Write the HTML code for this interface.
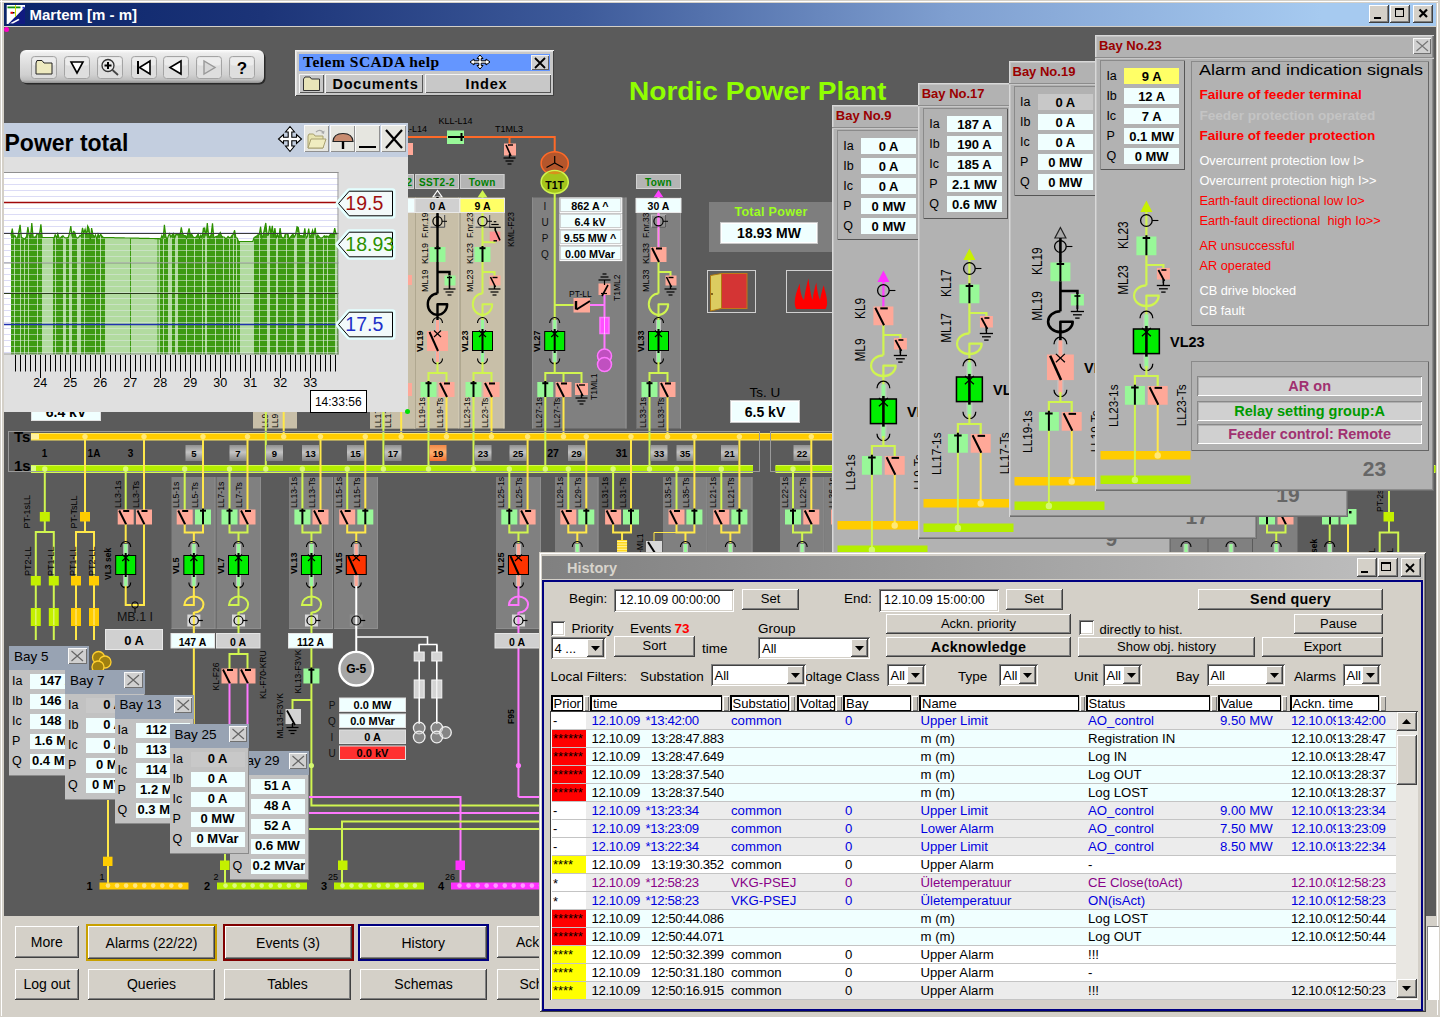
<!DOCTYPE html><html><head><meta charset="utf-8"><title>Martem [m - m]</title><style>
html,body{margin:0;padding:0;background:#d4d0c8;}
#root{position:relative;width:1440px;height:1018px;overflow:hidden;background:#d4d0c8;font-family:"Liberation Sans",sans-serif;}
#root div,#root svg{position:absolute;}
.t{white-space:nowrap;}

</style></head><body><div id="root">
<div style="left:0px;top:1px;width:1438px;height:1px;background:#fff;"></div><div style="left:1px;top:0px;width:1px;height:1016px;background:#fff;"></div><div style="left:4px;top:3px;width:1432px;height:23px;background:linear-gradient(90deg,#0a246a 0%,#1c3478 18%,#3d5a9a 40%,#7f9fd0 66%,#a6caf0 92%);"></div><svg class="abs" style="left:6px;top:4px" width="20" height="21" viewBox="0 0 20 21"><rect x="0.7" y="1" width="18.3" height="19" fill="#fff"/><path d="M19,2.700 L19,20 L2.300,20 Z" fill="#101a80"/><path d="M4,19.300 L12.500,14.800 L13.500,16 L7,19.500 Z" fill="#fff"/><path d="M9,12.500 L17.500,3.800" stroke="#fff" stroke-width="1"/><rect x="1.500" y="2.500" width="13" height="1.800" fill="#109010"/><rect x="9" y="1" width="1" height="12" fill="#c8e000"/><rect x="16.500" y="2.800" width="1.800" height="1.800" fill="#2030d0"/><rect x="4.500" y="7.800" width="2.500" height="2" fill="#e00000"/><rect x="7" y="8" width="1.500" height="1.500" fill="#000"/></svg><div class="t" style="left:29.5px;top:6px;font-size:15px;color:#fff;line-height:15px;font-weight:bold;line-height:18px;">Martem [m - m]</div><div style="left:1369px;top:5px;width:20px;height:18px;background:#d4d0c8;box-shadow:inset -1px -1px 0 #404040,inset 1px 1px 0 #fff,inset -2px -2px 0 #808080;"></div><div style="left:1390px;top:5px;width:20px;height:18px;background:#d4d0c8;box-shadow:inset -1px -1px 0 #404040,inset 1px 1px 0 #fff,inset -2px -2px 0 #808080;"></div><div style="left:1413px;top:5px;width:20px;height:18px;background:#d4d0c8;box-shadow:inset -1px -1px 0 #404040,inset 1px 1px 0 #fff,inset -2px -2px 0 #808080;"></div><div style="left:1374px;top:17px;width:7px;height:2px;background:#000;"></div><div style="left:1395px;top:8px;width:9px;height:9px;border:1px solid #000;border-top:2px solid #000;box-sizing:border-box;"></div><svg class="abs" style="left:1418px;top:8px" width="11" height="11" viewBox="0 0 11 11"><path d="M1.5,1.5 L9,9 M9,1.5 L1.5,9" stroke="#000" stroke-width="2.2"/></svg><div style="left:4px;top:27px;width:1431.5px;height:889px;background:#5b5b5b;"></div><div style="left:1436.5px;top:3px;width:1px;height:1012px;background:#fff;"></div><div style="left:0px;top:1016.5px;width:1440px;height:1.5px;background:#fff;"></div><div style="left:4px;top:27px;width:5px;height:5px;background:#ff00c8;border-radius:50%;"></div>
<svg class="abs" style="left:0;top:0" width="1440" height="1018" viewBox="0 0 1440 1018" font-family="Liberation Sans, sans-serif"><defs><linearGradient id="gb" x1="0" y1="0" x2="0" y2="1"><stop offset="0" stop-color="#909090"/><stop offset="0.45" stop-color="#c4c4c4"/><stop offset="1" stop-color="#848484"/></linearGradient><linearGradient id="gbo" x1="0" y1="0" x2="0" y2="1"><stop offset="0" stop-color="#f08848"/><stop offset="0.45" stop-color="#ffb070"/><stop offset="1" stop-color="#f07030"/></linearGradient></defs><rect x="31" y="433" width="1400" height="7.5" fill="#ffe860" /><rect x="31" y="434" width="1400" height="5.3" fill="#ffcc00" /><rect x="31" y="434" width="8" height="5.3" fill="#fff0a0" /><rect x="31" y="465" width="722" height="8" fill="#d4fa50" /><rect x="31" y="466" width="722" height="5.8" fill="#b4ee00" /><rect x="775.5" y="465" width="660" height="8" fill="#d4fa50" /><rect x="775.5" y="466" width="660" height="5.8" fill="#b4ee00" /><rect x="31" y="466" width="5" height="5.8" fill="#dcff88" /><path d="M405,137 L554.7,137 L554.7,153" stroke="#ff6a28" stroke-width="2" fill="none" /><text x="404" y="132" font-size="9" fill="#000" text-anchor="start" >L-L14</text><rect x="407" y="143" width="6" height="12" fill="#ffa898" /><text x="438.5" y="124" font-size="9" fill="#000" text-anchor="start" >KLL-L14</text><rect x="447" y="130.5" width="17" height="13.5" fill="#98f898" /><path d="M448,137 L464,137" stroke="#000000" stroke-width="2" fill="none" /><path d="M461.5,133 L461.5,141" stroke="#000000" stroke-width="2" fill="none" /><text x="495" y="132" font-size="9" fill="#000" text-anchor="start" >T1ML3</text><path d="M509.5,137 L509.5,144" stroke="#ff6a28" stroke-width="2" fill="none" /><rect x="504" y="143.5" width="12" height="12" fill="#ffa898" /><path d="M506,145 L511,156" stroke="#000000" stroke-width="1.6" fill="none" /><path d="M508,145 L513,145" stroke="#000000" stroke-width="1.4" fill="none" /><path d="M509.5,154 L509.5,158" stroke="#000000" stroke-width="1.4" fill="none" /><path d="M503.5,158 L515.5,158" stroke="#000000" stroke-width="1.2" fill="none" /><path d="M505.5,161.0 L513.5,161.0" stroke="#000000" stroke-width="1.2" fill="none" /><path d="M507.5,164.0 L511.5,164.0" stroke="#000000" stroke-width="1.2" fill="none" /><rect x="325" y="174" width="44" height="15" fill="#b4b4b4" /><rect x="325.5" y="174.5" width="43" height="14" fill="none" stroke="#d0d0d0" stroke-width="1" /><rect x="370" y="174" width="44" height="15" fill="#b4b4b4" /><rect x="370.5" y="174.5" width="43" height="14" fill="none" stroke="#d0d0d0" stroke-width="1" /><text x="412" y="186" font-size="10.5" fill="#008000" font-weight="bold" text-anchor="end" >2</text><rect x="415" y="174" width="44" height="15" fill="#b4b4b4" /><rect x="415.5" y="174.5" width="43" height="14" fill="none" stroke="#d0d0d0" stroke-width="1" /><text x="437.0" y="185.5" font-size="10" fill="#008000" font-weight="bold" text-anchor="middle" letter-spacing="0.35">SST2-2</text><rect x="460" y="174" width="44.5" height="15" fill="#b4b4b4" /><rect x="460.5" y="174.5" width="43.5" height="14" fill="none" stroke="#d0d0d0" stroke-width="1" /><text x="482.25" y="185.5" font-size="10" fill="#008000" font-weight="bold" text-anchor="middle" letter-spacing="0.35">Town</text><rect x="636" y="174" width="45" height="15" fill="#b4b4b4" /><rect x="636.5" y="174.5" width="44" height="14" fill="none" stroke="#d0d0d0" stroke-width="1" /><text x="658.5" y="185.5" font-size="10" fill="#008000" font-weight="bold" text-anchor="middle" letter-spacing="0.35">Town</text><path d="M437.5,190.5 L433,197 L442,197 Z" fill="none" stroke="#fff" stroke-width="1.2"/><path d="M482.5,190 L477.5,197.5 L487.5,197.5 Z" fill="#d0f550"/><path d="M658.5,190 L653.5,197.5 L663.5,197.5 Z" fill="#ff40ff"/><rect x="370" y="197.5" width="45" height="231" fill="#c8bfa8" /><rect x="407" y="275" width="5" height="10" fill="#ffa898" /><rect x="407" y="383" width="5" height="13" fill="#ffa898" /><rect x="415" y="197.5" width="44.5" height="231" fill="#c8bfa8" /><path d="M459.0,197.5 L459.0,428.5" stroke="#d8d0bc" stroke-width="1" fill="none" /><path d="M415.5,197.5 L415.5,428.5" stroke="#b0a890" stroke-width="1" fill="none" /><path d="M428.5,396 L428.5,469" stroke="#d0f550" stroke-width="2" fill="none" /><path d="M446.5,396 L446.5,436" stroke="#ffe84a" stroke-width="2" fill="none" /><path d="M437.5,197 L437.5,293.5" stroke="#000000" stroke-width="2.4" fill="none" /><path d="M437.5,314 L437.5,320" stroke="#000000" stroke-width="2.4" fill="none" /><rect x="430.5" y="215" width="14.2" height="12.2" fill="#ffffff" fill-opacity="0.12" stroke="#c8c8c8" stroke-width="1" /><path d="M444.7,215 L444.7,227.2 L430.5,227.2" stroke="#444" stroke-width="1" fill="none" /><path d="M437.5,214 L437.5,228" stroke="#000000" stroke-width="2.4" fill="none" /><circle cx="437.5" cy="221.3" r="4.6" fill="none" stroke="#000000" stroke-width="1.2"/><path d="M442.1,221.3 L447.0,221.3" stroke="#000000" stroke-width="1" fill="none" /><rect x="429.5" y="247" width="16.0" height="15.0" fill="#98f898" /><path d="M437.5,246.0 L437.5,262.0" stroke="#000000" stroke-width="2" fill="none" /><path d="M434.5,248.2 L440.5,248.2" stroke="#000000" stroke-width="2" fill="none" /><path d="M437.5,272 L449.5,272 L449.5,276" stroke="#000000" stroke-width="2.4" fill="none" /><rect x="444.5" y="275.5" width="11" height="10" fill="#98f898" /><path d="M449.5,276 L449.5,289" stroke="#000000" stroke-width="1.6" fill="none" /><path d="M447.0,277.5 L452.0,277.5" stroke="#000000" stroke-width="1.4" fill="none" /><path d="M443.5,289 L455.5,289" stroke="#000000" stroke-width="1.2" fill="none" /><path d="M445.5,292.0 L453.5,292.0" stroke="#000000" stroke-width="1.2" fill="none" /><path d="M447.5,295.0 L451.5,295.0" stroke="#000000" stroke-width="1.2" fill="none" /><path d="M437.5,293.5 A9.7,10.7 0 1 0 447.2,304.2 L437.5,304.2 L437.5,315.9" stroke="#000000" stroke-width="2.4" fill="none" stroke-linejoin="round"/><rect x="435.0" y="320.0" width="5.0" height="11.0" fill="#c0c0c0" /><rect x="436.0" y="320.0" width="3.0" height="11.0" fill="#ffa898" /><path d="M432.5,323.0 A5.0,5.5 0 0 1 442.5,323.0" stroke="#000000" stroke-width="1.1" fill="none"/><rect x="435.0" y="351.0" width="5.0" height="11.0" fill="#c0c0c0" /><rect x="436.0" y="351.0" width="3.0" height="11.0" fill="#ffa898" /><path d="M432.5,358.5 A5.0,5.5 0 0 0 442.5,358.5" stroke="#000000" stroke-width="1.1" fill="none"/><rect x="427.0" y="331" width="21.0" height="20.0" fill="#ffa898" /><path d="M429.5,332.0 L438.0,351.0" stroke="#000000" stroke-width="2.0" fill="none" /><path d="M434.0,330.5 L441.0,337.0" stroke="#000000" stroke-width="1.1" fill="none" /><path d="M441.0,330.5 L434.0,337.0" stroke="#000000" stroke-width="1.1" fill="none" /><path d="M437.5,362 L437.5,373 L428.5,373 L428.5,382" stroke="#d0f550" stroke-width="2" fill="none" /><path d="M437.5,373 L446.5,373 L446.5,382" stroke="#d0f550" stroke-width="2" fill="none" /><rect x="420.5" y="382" width="16.0" height="15.0" fill="#98f898" /><path d="M428.5,381.0 L428.5,397.0" stroke="#000000" stroke-width="2" fill="none" /><path d="M425.5,383.2 L431.5,383.2" stroke="#000000" stroke-width="2" fill="none" /><rect x="438.5" y="382" width="16.0" height="15.0" fill="#ffa898" /><path d="M440.0,383.0 L447.0,397.0" stroke="#000000" stroke-width="2" fill="none" /><path d="M444.0,383.5 L450.0,383.5" stroke="#000000" stroke-width="2" fill="none" /><text x="424.5" y="428" font-size="8.5" fill="#000" text-anchor="start" transform="rotate(-90 424.5 428)" >LL19-1s</text><text x="442.5" y="428" font-size="8.5" fill="#000" text-anchor="start" transform="rotate(-90 442.5 428)" >LL19-Ts</text><text x="422.5" y="352" font-size="9" fill="#000" font-weight="bold" text-anchor="start" transform="rotate(-90 422.5 352)" >VL19</text><text x="427.5" y="292" font-size="9" fill="#000" text-anchor="start" transform="rotate(-90 427.5 292)" >ML19</text><text x="427.5" y="264" font-size="9" fill="#000" text-anchor="start" transform="rotate(-90 427.5 264)" >KL19</text><text x="427.5" y="238" font-size="8.5" fill="#000" text-anchor="start" transform="rotate(-90 427.5 238)" >F.nr.19</text><rect x="460" y="197.5" width="44.5" height="231" fill="#c8bfa8" /><path d="M504.0,197.5 L504.0,428.5" stroke="#d8d0bc" stroke-width="1" fill="none" /><path d="M460.5,197.5 L460.5,428.5" stroke="#b0a890" stroke-width="1" fill="none" /><path d="M473.5,396 L473.5,469" stroke="#d0f550" stroke-width="2" fill="none" /><path d="M491.5,396 L491.5,436" stroke="#ffe84a" stroke-width="2" fill="none" /><path d="M482.5,197 L482.5,293.5" stroke="#d0f550" stroke-width="2" fill="none" /><path d="M482.5,314 L482.5,320" stroke="#d0f550" stroke-width="2" fill="none" /><rect x="475.5" y="215" width="14.2" height="12.2" fill="#ffffff" fill-opacity="0.12" stroke="#c8c8c8" stroke-width="1" /><path d="M489.7,215 L489.7,227.2 L475.5,227.2" stroke="#444" stroke-width="1" fill="none" /><path d="M482.5,214 L482.5,228" stroke="#d0f550" stroke-width="2" fill="none" /><circle cx="482.5" cy="221.3" r="4.6" fill="none" stroke="#000000" stroke-width="1.2"/><path d="M487.1,221.3 L492.0,221.3" stroke="#000000" stroke-width="1" fill="none" /><rect x="474.5" y="247" width="16.0" height="15.0" fill="#98f898" /><path d="M482.5,246.0 L482.5,262.0" stroke="#000000" stroke-width="2" fill="none" /><path d="M479.5,248.2 L485.5,248.2" stroke="#000000" stroke-width="2" fill="none" /><path d="M482.5,272 L494.5,272 L494.5,276" stroke="#d0f550" stroke-width="2" fill="none" /><rect x="489.5" y="275.5" width="11" height="10" fill="#ffa898" /><path d="M490.5,277 L495.5,287" stroke="#000000" stroke-width="1.6" fill="none" /><path d="M492.5,277.5 L497.5,277.5" stroke="#000000" stroke-width="1.4" fill="none" /><path d="M494.5,285 L494.5,289" stroke="#000000" stroke-width="1.4" fill="none" /><path d="M488.5,289 L500.5,289" stroke="#000000" stroke-width="1.2" fill="none" /><path d="M490.5,292.0 L498.5,292.0" stroke="#000000" stroke-width="1.2" fill="none" /><path d="M492.5,295.0 L496.5,295.0" stroke="#000000" stroke-width="1.2" fill="none" /><path d="M482.5,293.5 A9.7,10.7 0 1 0 492.2,304.2 L482.5,304.2 L482.5,315.9" stroke="#d0f550" stroke-width="2" fill="none" stroke-linejoin="round"/><rect x="480.0" y="320.0" width="5.0" height="11.0" fill="#c0c0c0" /><rect x="481.0" y="320.0" width="3.0" height="11.0" fill="#98f898" /><path d="M477.5,323.0 A5.0,5.5 0 0 1 487.5,323.0" stroke="#000000" stroke-width="1.1" fill="none"/><rect x="480.0" y="351.0" width="5.0" height="11.0" fill="#c0c0c0" /><rect x="481.0" y="351.0" width="3.0" height="11.0" fill="#98f898" /><path d="M477.5,358.5 A5.0,5.5 0 0 0 487.5,358.5" stroke="#000000" stroke-width="1.1" fill="none"/><rect x="472.5" y="331.5" width="20.0" height="19.0" fill="#00ee00" stroke="#000000" stroke-width="1" /><path d="M482.5,329.0 L482.5,353.0" stroke="#000000" stroke-width="2.0" fill="none" /><path d="M479.0,330.5 L486.0,337.0" stroke="#000000" stroke-width="1.1" fill="none" /><path d="M486.0,330.5 L479.0,337.0" stroke="#000000" stroke-width="1.1" fill="none" /><path d="M482.5,362 L482.5,373 L473.5,373 L473.5,382" stroke="#d0f550" stroke-width="2" fill="none" /><path d="M482.5,373 L491.5,373 L491.5,382" stroke="#d0f550" stroke-width="2" fill="none" /><rect x="465.5" y="382" width="16.0" height="15.0" fill="#98f898" /><path d="M473.5,381.0 L473.5,397.0" stroke="#000000" stroke-width="2" fill="none" /><path d="M470.5,383.2 L476.5,383.2" stroke="#000000" stroke-width="2" fill="none" /><rect x="483.5" y="382" width="16.0" height="15.0" fill="#ffa898" /><path d="M485.0,383.0 L492.0,397.0" stroke="#000000" stroke-width="2" fill="none" /><path d="M489.0,383.5 L495.0,383.5" stroke="#000000" stroke-width="2" fill="none" /><text x="469.5" y="428" font-size="8.5" fill="#000" text-anchor="start" transform="rotate(-90 469.5 428)" >LL23-1s</text><text x="487.5" y="428" font-size="8.5" fill="#000" text-anchor="start" transform="rotate(-90 487.5 428)" >LL23-Ts</text><text x="467.5" y="352" font-size="9" fill="#000" font-weight="bold" text-anchor="start" transform="rotate(-90 467.5 352)" >VL23</text><text x="472.5" y="292" font-size="9" fill="#000" text-anchor="start" transform="rotate(-90 472.5 292)" >ML23</text><text x="472.5" y="264" font-size="9" fill="#000" text-anchor="start" transform="rotate(-90 472.5 264)" >KL23</text><text x="472.5" y="238" font-size="8.5" fill="#000" text-anchor="start" transform="rotate(-90 472.5 238)" >F.nr.23</text><rect x="370" y="198.5" width="44.5" height="14" fill="#f0ffff" stroke="#e8e8e8" stroke-width="1" /><rect x="415" y="198.5" width="44.5" height="14" fill="#d0d0d0" stroke="#e8e8e8" stroke-width="1" /><text x="437.5" y="210" font-size="10.5" fill="#000" font-weight="bold" text-anchor="middle" >0 A</text><rect x="460" y="198.5" width="44.5" height="14" fill="#ffff66" stroke="#e8e8e8" stroke-width="1" /><text x="482.5" y="210" font-size="10.5" fill="#000" font-weight="bold" text-anchor="middle" >9 A</text><text x="513.5" y="247" font-size="8.5" fill="#000" text-anchor="start" transform="rotate(-90 513.5 247)" >KML-F23</text><path d="M482.5,242.2 L495.5,242.2" stroke="#d0f550" stroke-width="2" fill="none" /><rect x="489.7" y="231.6" width="10.6" height="9.6" fill="#ff9090" /><path d="M495.2,227.5 L495.2,230 L500,240.3" stroke="#000000" stroke-width="1.6" fill="none" /><path d="M493.5,240.8 L497,240.8" stroke="#000000" stroke-width="1.4" fill="none" /><path d="M489.3,227.3 L500.7,227.3" stroke="#000000" stroke-width="1.2" fill="none" /><path d="M491.3,224.5 L498.7,224.5" stroke="#000000" stroke-width="1.2" fill="none" /><path d="M493.7,221.7 L496.3,221.7" stroke="#000000" stroke-width="1.2" fill="none" /><rect x="532" y="197.5" width="94.5" height="231" fill="#808080" /><path d="M626,197.5 L626,428.5" stroke="#949494" stroke-width="1" fill="none" /><path d="M532.5,197.5 L532.5,428.5" stroke="#8c8c8c" stroke-width="1" fill="none" /><path d="M554.7,193 L554.7,320" stroke="#d0f550" stroke-width="2" fill="none" /><path d="M545.3,396 L545.3,469" stroke="#d0f550" stroke-width="2" fill="none" /><path d="M563.5,396 L563.5,436" stroke="#ffe84a" stroke-width="2" fill="none" /><rect x="552.2" y="320.0" width="5.0" height="11.0" fill="#c0c0c0" /><rect x="553.2" y="320.0" width="3.0" height="11.0" fill="#98f898" /><path d="M549.7,323.0 A5.0,5.5 0 0 1 559.7,323.0" stroke="#000000" stroke-width="1.1" fill="none"/><rect x="552.2" y="351.0" width="5.0" height="11.0" fill="#c0c0c0" /><rect x="553.2" y="351.0" width="3.0" height="11.0" fill="#98f898" /><path d="M549.7,358.5 A5.0,5.5 0 0 0 559.7,358.5" stroke="#000000" stroke-width="1.1" fill="none"/><rect x="544.7" y="331.5" width="20.0" height="19.0" fill="#00ee00" stroke="#000000" stroke-width="1" /><path d="M554.7,329.0 L554.7,353.0" stroke="#000000" stroke-width="2.0" fill="none" /><path d="M551.2,330.5 L558.2,337.0" stroke="#000000" stroke-width="1.1" fill="none" /><path d="M558.2,330.5 L551.2,337.0" stroke="#000000" stroke-width="1.1" fill="none" /><path d="M554.7,362 L554.7,373 L545.3,373 L545.3,382" stroke="#d0f550" stroke-width="2" fill="none" /><path d="M554.7,373 L581.5,373 L581.5,383" stroke="#d0f550" stroke-width="2" fill="none" /><path d="M563.5,373 L563.5,382" stroke="#d0f550" stroke-width="2" fill="none" /><rect x="537.3" y="382" width="16.0" height="15.0" fill="#98f898" /><path d="M545.3,381.0 L545.3,397.0" stroke="#000000" stroke-width="2" fill="none" /><path d="M542.3,383.2 L548.3,383.2" stroke="#000000" stroke-width="2" fill="none" /><rect x="555.5" y="382" width="16.0" height="15.0" fill="#ffa898" /><path d="M557.0,383.0 L564.0,397.0" stroke="#000000" stroke-width="2" fill="none" /><path d="M561.0,383.5 L567.0,383.5" stroke="#000000" stroke-width="2" fill="none" /><rect x="575" y="383" width="13" height="12" fill="#ffa898" /><path d="M577,384.5 L583,396" stroke="#000000" stroke-width="1.6" fill="none" /><path d="M579,385 L585,385" stroke="#000000" stroke-width="1.4" fill="none" /><path d="M581.5,394 L581.5,398" stroke="#000000" stroke-width="1.4" fill="none" /><path d="M575.5,398 L587.5,398" stroke="#000000" stroke-width="1.2" fill="none" /><path d="M577.5,401.0 L585.5,401.0" stroke="#000000" stroke-width="1.2" fill="none" /><path d="M579.5,404.0 L583.5,404.0" stroke="#000000" stroke-width="1.2" fill="none" /><text x="541.5" y="428" font-size="8.5" fill="#000" text-anchor="start" transform="rotate(-90 541.5 428)" >LL27-1s</text><text x="559.5" y="428" font-size="8.5" fill="#000" text-anchor="start" transform="rotate(-90 559.5 428)" >LL27-Ts</text><text x="597" y="400" font-size="8.5" fill="#000" text-anchor="start" transform="rotate(-90 597 400)" >T1ML1</text><text x="540" y="352" font-size="9" fill="#000" font-weight="bold" text-anchor="start" transform="rotate(-90 540 352)" >VL27</text><text x="545" y="209.5" font-size="10" fill="#111" text-anchor="middle" >I</text><rect x="559.5" y="197.5" width="62.8" height="15.6" fill="#ffffff" /><rect x="559.5" y="197.5" width="61.8" height="14.6" fill="#c8c8c8" /><rect x="560.8" y="198.7" width="59.5" height="12.4" fill="#f0ffff" /><text x="590" y="209.7" font-size="10.8" fill="#000" font-weight="bold" text-anchor="middle" >862 A ^</text><text x="545" y="225.5" font-size="10" fill="#111" text-anchor="middle" >U</text><rect x="559.5" y="213.5" width="62.8" height="15.6" fill="#ffffff" /><rect x="559.5" y="213.5" width="61.8" height="14.6" fill="#c8c8c8" /><rect x="560.8" y="214.7" width="59.5" height="12.4" fill="#f0ffff" /><text x="590" y="225.7" font-size="10.8" fill="#000" font-weight="bold" text-anchor="middle" >6.4 kV</text><text x="545" y="241.5" font-size="10" fill="#111" text-anchor="middle" >P</text><rect x="559.5" y="229.5" width="62.8" height="15.6" fill="#ffffff" /><rect x="559.5" y="229.5" width="61.8" height="14.6" fill="#c8c8c8" /><rect x="560.8" y="230.7" width="59.5" height="12.4" fill="#f0ffff" /><text x="590" y="241.7" font-size="10.8" fill="#000" font-weight="bold" text-anchor="middle" >9.55 MW ^</text><text x="545" y="257.5" font-size="10" fill="#111" text-anchor="middle" >Q</text><rect x="559.5" y="245.5" width="62.8" height="15.6" fill="#ffffff" /><rect x="559.5" y="245.5" width="61.8" height="14.6" fill="#c8c8c8" /><rect x="560.8" y="246.7" width="59.5" height="12.4" fill="#f0ffff" /><text x="590" y="257.7" font-size="10.8" fill="#000" font-weight="bold" text-anchor="middle" >0.00 MVar</text><text x="569" y="297" font-size="8.5" fill="#000" text-anchor="start" >PT-LL</text><path d="M554.7,305 L575,305" stroke="#d0f550" stroke-width="2" fill="none" /><rect x="573.5" y="298" width="16.5" height="14.5" fill="#ffa898" /><path d="M576.5,309.5 L590,301" stroke="#000000" stroke-width="2" fill="none" /><path d="M576,301 L576,309.5" stroke="#000000" stroke-width="2.4" fill="none" /><path d="M590,305 L604.5,305" stroke="#ff78ff" stroke-width="2" fill="none" /><path d="M604.5,295 L604.5,350" stroke="#ff78ff" stroke-width="2" fill="none" /><rect x="598.5" y="283.5" width="12" height="11.5" fill="#ffa898" /><path d="M608,285 L602,296" stroke="#000000" stroke-width="1.6" fill="none" /><path d="M601,293.5 L607,293.5" stroke="#000000" stroke-width="1.2" fill="none" /><path d="M604.5,280 L604.5,285" stroke="#000000" stroke-width="1.2" fill="none" /><path d="M598.5,280 L610.5,280" stroke="#000000" stroke-width="1.2" fill="none" /><path d="M600.5,277 L608.5,277" stroke="#000000" stroke-width="1.2" fill="none" /><path d="M602.5,274 L606.5,274" stroke="#000000" stroke-width="1.2" fill="none" /><text x="620" y="301" font-size="8.5" fill="#000" text-anchor="start" transform="rotate(-90 620 301)" >T1ML2</text><rect x="600" y="317.5" width="9" height="16" fill="#ff50ff" stroke="#ff78ff" stroke-width="1.5" /><path d="M604.5,317 L604.5,334" stroke="#fff" stroke-width="1" fill="none" opacity="0.6"/><circle cx="604.5" cy="356" r="7" fill="#c050c0" stroke="#ff78ff" stroke-width="1.5"/><circle cx="604.5" cy="364.5" r="7" fill="#c050c0" stroke="#ff78ff" stroke-width="1.5"/><ellipse cx="554.7" cy="163.3" rx="13.6" ry="11.6" fill="#b4562c" stroke="#ff6a28" stroke-width="1.5"/><ellipse cx="554.7" cy="182" rx="13.6" ry="11.4" fill="#a4c41c" stroke="#d0f550" stroke-width="1.5"/><clipPath id="cpt"><ellipse cx="554.7" cy="182" rx="13" ry="10.8"/></clipPath><ellipse cx="554.7" cy="163.3" rx="13" ry="11" fill="#d8901c" clip-path="url(#cpt)"/><path d="M554.7,156 L554.7,163 L546.5,167.5" stroke="#000000" stroke-width="1.2" fill="none" /><path d="M554.7,163 L563,167.5" stroke="#000000" stroke-width="1.2" fill="none" /><text x="554.7" y="189" font-size="10.5" fill="#000" font-weight="bold" text-anchor="middle" >T1T</text><rect x="636" y="197.5" width="45" height="231" fill="#808080" /><path d="M680.5,197.5 L680.5,428.5" stroke="#949494" stroke-width="1" fill="none" /><path d="M636.5,197.5 L636.5,428.5" stroke="#707070" stroke-width="1" fill="none" /><path d="M649.5,396 L649.5,469" stroke="#d0f550" stroke-width="2" fill="none" /><path d="M667.5,396 L667.5,436" stroke="#ffe84a" stroke-width="2" fill="none" /><path d="M658.5,197 L658.5,293.5" stroke="#d0f550" stroke-width="2" fill="none" /><path d="M658.5,314 L658.5,320" stroke="#d0f550" stroke-width="2" fill="none" /><path d="M658.5,197 L658.5,248" stroke="#ff78ff" stroke-width="2" fill="none" /><rect x="651.5" y="215" width="14.2" height="12.2" fill="#ffffff" fill-opacity="0.12" stroke="#c8c8c8" stroke-width="1" /><path d="M665.7,215 L665.7,227.2 L651.5,227.2" stroke="#444" stroke-width="1" fill="none" /><path d="M658.5,214 L658.5,228" stroke="#ff78ff" stroke-width="2" fill="none" /><circle cx="658.5" cy="221.3" r="4.6" fill="none" stroke="#000000" stroke-width="1.2"/><path d="M663.1,221.3 L668.0,221.3" stroke="#000000" stroke-width="1" fill="none" /><rect x="650.5" y="247" width="16.0" height="15.0" fill="#ffa898" /><path d="M652.0,248.0 L659.0,262.0" stroke="#000000" stroke-width="2" fill="none" /><path d="M656.0,248.5 L662.0,248.5" stroke="#000000" stroke-width="2" fill="none" /><path d="M658.5,272 L670.5,272 L670.5,276" stroke="#d0f550" stroke-width="2" fill="none" /><rect x="665.5" y="275.5" width="11" height="10" fill="#ffa898" /><path d="M666.5,277 L671.5,287" stroke="#000000" stroke-width="1.6" fill="none" /><path d="M668.5,277.5 L673.5,277.5" stroke="#000000" stroke-width="1.4" fill="none" /><path d="M670.5,285 L670.5,289" stroke="#000000" stroke-width="1.4" fill="none" /><path d="M664.5,289 L676.5,289" stroke="#000000" stroke-width="1.2" fill="none" /><path d="M666.5,292.0 L674.5,292.0" stroke="#000000" stroke-width="1.2" fill="none" /><path d="M668.5,295.0 L672.5,295.0" stroke="#000000" stroke-width="1.2" fill="none" /><path d="M658.5,293.5 A9.7,10.7 0 1 0 668.2,304.2 L658.5,304.2 L658.5,315.9" stroke="#d0f550" stroke-width="2" fill="none" stroke-linejoin="round"/><rect x="656.0" y="320.0" width="5.0" height="11.0" fill="#c0c0c0" /><rect x="657.0" y="320.0" width="3.0" height="11.0" fill="#98f898" /><path d="M653.5,323.0 A5.0,5.5 0 0 1 663.5,323.0" stroke="#000000" stroke-width="1.1" fill="none"/><rect x="656.0" y="351.0" width="5.0" height="11.0" fill="#c0c0c0" /><rect x="657.0" y="351.0" width="3.0" height="11.0" fill="#98f898" /><path d="M653.5,358.5 A5.0,5.5 0 0 0 663.5,358.5" stroke="#000000" stroke-width="1.1" fill="none"/><rect x="648.5" y="331.5" width="20.0" height="19.0" fill="#00ee00" stroke="#000000" stroke-width="1" /><path d="M658.5,329.0 L658.5,353.0" stroke="#000000" stroke-width="2.0" fill="none" /><path d="M655.0,330.5 L662.0,337.0" stroke="#000000" stroke-width="1.1" fill="none" /><path d="M662.0,330.5 L655.0,337.0" stroke="#000000" stroke-width="1.1" fill="none" /><path d="M658.5,362 L658.5,373 L649.5,373 L649.5,382" stroke="#d0f550" stroke-width="2" fill="none" /><path d="M658.5,373 L667.5,373 L667.5,382" stroke="#d0f550" stroke-width="2" fill="none" /><rect x="641.5" y="382" width="16.0" height="15.0" fill="#98f898" /><path d="M649.5,381.0 L649.5,397.0" stroke="#000000" stroke-width="2" fill="none" /><path d="M646.5,383.2 L652.5,383.2" stroke="#000000" stroke-width="2" fill="none" /><rect x="659.5" y="382" width="16.0" height="15.0" fill="#ffa898" /><path d="M661.0,383.0 L668.0,397.0" stroke="#000000" stroke-width="2" fill="none" /><path d="M665.0,383.5 L671.0,383.5" stroke="#000000" stroke-width="2" fill="none" /><text x="645.5" y="428" font-size="8.5" fill="#000" text-anchor="start" transform="rotate(-90 645.5 428)" >LL33-1s</text><text x="663.5" y="428" font-size="8.5" fill="#000" text-anchor="start" transform="rotate(-90 663.5 428)" >LL33-Ts</text><text x="643.5" y="352" font-size="9" fill="#000" font-weight="bold" text-anchor="start" transform="rotate(-90 643.5 352)" >VL33</text><text x="648.5" y="292" font-size="9" fill="#000" text-anchor="start" transform="rotate(-90 648.5 292)" >ML33</text><text x="648.5" y="264" font-size="9" fill="#000" text-anchor="start" transform="rotate(-90 648.5 264)" >KL33</text><text x="648.5" y="238" font-size="8.5" fill="#000" text-anchor="start" transform="rotate(-90 648.5 238)" >F.nr.33</text><rect x="636" y="198.5" width="45" height="14" fill="#f0ffff" stroke="#e8e8e8" stroke-width="1" /><text x="658.5" y="210" font-size="10.5" fill="#000" font-weight="bold" text-anchor="middle" >30 A</text><rect x="253" y="411" width="44" height="17.5" fill="#c8bfa8" /><rect x="370" y="411" width="45" height="17.5" fill="#c8bfa8" /><rect x="414" y="411" width="1" height="17.5" fill="#c8bfa8" /><text x="268" y="428" font-size="8.5" fill="#000" text-anchor="start" transform="rotate(-90 268 428)" >LL9</text><text x="278" y="428" font-size="8.5" fill="#000" text-anchor="start" transform="rotate(-90 278 428)" >LL9</text><text x="381" y="428" font-size="8.5" fill="#000" text-anchor="start" transform="rotate(-90 381 428)" >LL17</text><text x="391" y="428" font-size="8.5" fill="#000" text-anchor="start" transform="rotate(-90 391 428)" >LL17</text><path d="M265.8,411 L265.8,469" stroke="#d0f550" stroke-width="2" fill="none" /><path d="M283.7,411 L283.7,436" stroke="#ffe84a" stroke-width="2" fill="none" /><path d="M383.4,411 L383.4,469" stroke="#d0f550" stroke-width="2" fill="none" /><path d="M401.2,411 L401.2,436" stroke="#ffe84a" stroke-width="2" fill="none" /><rect x="8.5" y="431.5" width="751" height="40" fill="none" stroke="#9a9a9a" stroke-width="1" /><rect x="770.5" y="431.5" width="80" height="40" fill="none" stroke="#9a9a9a" stroke-width="1" /><text x="14" y="442" font-size="15" fill="#000" font-weight="bold" text-anchor="start" >Ts</text><text x="14" y="471" font-size="15" fill="#000" font-weight="bold" text-anchor="start" >1s</text><text x="44.5" y="457" font-size="10" fill="#000" font-weight="bold" text-anchor="middle" >1</text><text x="94" y="457" font-size="10" fill="#000" font-weight="bold" text-anchor="middle" >1A</text><text x="130.5" y="457" font-size="10" fill="#000" font-weight="bold" text-anchor="middle" >3</text><text x="553" y="457" font-size="10.5" fill="#000" font-weight="bold" text-anchor="middle" >27</text><text x="621.5" y="457" font-size="10.5" fill="#000" font-weight="bold" text-anchor="middle" >31</text><rect x="185.5" y="445" width="17" height="16" fill="url(#gb)" /><text x="194.0" y="456.5" font-size="9.5" fill="#000" font-weight="bold" text-anchor="middle" >5</text><rect x="229.5" y="445" width="17" height="16" fill="url(#gb)" /><text x="238.0" y="456.5" font-size="9.5" fill="#000" font-weight="bold" text-anchor="middle" >7</text><rect x="266" y="445" width="17" height="16" fill="url(#gb)" /><text x="274.5" y="456.5" font-size="9.5" fill="#000" font-weight="bold" text-anchor="middle" >9</text><rect x="302" y="445" width="17" height="16" fill="url(#gb)" /><text x="310.5" y="456.5" font-size="9.5" fill="#000" font-weight="bold" text-anchor="middle" >13</text><rect x="347" y="445" width="17" height="16" fill="url(#gb)" /><text x="355.5" y="456.5" font-size="9.5" fill="#000" font-weight="bold" text-anchor="middle" >15</text><rect x="384.5" y="445" width="17" height="16" fill="url(#gb)" /><text x="393.0" y="456.5" font-size="9.5" fill="#000" font-weight="bold" text-anchor="middle" >17</text><rect x="474.5" y="445" width="17" height="16" fill="url(#gb)" /><text x="483.0" y="456.5" font-size="9.5" fill="#000" font-weight="bold" text-anchor="middle" >23</text><rect x="509.5" y="445" width="17" height="16" fill="url(#gb)" /><text x="518.0" y="456.5" font-size="9.5" fill="#000" font-weight="bold" text-anchor="middle" >25</text><rect x="568" y="445" width="17" height="16" fill="url(#gb)" /><text x="576.5" y="456.5" font-size="9.5" fill="#000" font-weight="bold" text-anchor="middle" >29</text><rect x="650.5" y="445" width="17" height="16" fill="url(#gb)" /><text x="659.0" y="456.5" font-size="9.5" fill="#000" font-weight="bold" text-anchor="middle" >33</text><rect x="676.5" y="445" width="17" height="16" fill="url(#gb)" /><text x="685.0" y="456.5" font-size="9.5" fill="#000" font-weight="bold" text-anchor="middle" >35</text><rect x="721" y="445" width="17" height="16" fill="url(#gb)" /><text x="729.5" y="456.5" font-size="9.5" fill="#000" font-weight="bold" text-anchor="middle" >21</text><rect x="793.5" y="445" width="17" height="16" fill="url(#gb)" /><text x="802.0" y="456.5" font-size="9.5" fill="#000" font-weight="bold" text-anchor="middle" >22</text><rect x="429.5" y="445" width="17" height="16" fill="url(#gbo)" /><text x="438.0" y="456.5" font-size="9.5" fill="#000" font-weight="bold" text-anchor="middle" >19</text><path d="M44.8,469 L44.8,532" stroke="#d0f550" stroke-width="2" fill="none" /><rect x="39.8" y="512" width="10" height="9.5" fill="#c4f000" /><path d="M35.8,640 L35.8,532 L53.8,532 L53.8,640" stroke="#d0f550" stroke-width="2" fill="none" /><rect x="30.799999999999997" y="576" width="10" height="9.5" fill="#c4f000" /><rect x="30.799999999999997" y="608" width="10" height="18" fill="#c4f000" /><path d="M35.8,609 L35.8,625" stroke="#ffffff" stroke-width="1.4" fill="none" opacity="0.45"/><rect x="48.8" y="576" width="10" height="9.5" fill="#c4f000" /><rect x="48.8" y="608" width="10" height="18" fill="#c4f000" /><path d="M53.8,609 L53.8,625" stroke="#ffffff" stroke-width="1.4" fill="none" opacity="0.45"/><text x="29.799999999999997" y="528.5" font-size="9" fill="#000" text-anchor="start" transform="rotate(-90 29.799999999999997 528.5)" >PT-1sLL</text><text x="30.799999999999997" y="576" font-size="9" fill="#000" text-anchor="start" transform="rotate(-90 30.799999999999997 576)" >PT2-LL</text><text x="54.3" y="576" font-size="9" fill="#000" text-anchor="start" transform="rotate(-90 54.3 576)" >PT1-LL</text><path d="M85,436 L85,532" stroke="#ffe84a" stroke-width="2" fill="none" /><rect x="80" y="512" width="10" height="9.5" fill="#ffcc00" /><path d="M76,640 L76,532 L94,532 L94,640" stroke="#ffe84a" stroke-width="2" fill="none" /><rect x="71" y="576" width="10" height="9.5" fill="#ffcc00" /><rect x="71" y="608" width="10" height="18" fill="#ffcc00" /><path d="M76,609 L76,625" stroke="#ffffff" stroke-width="1.4" fill="none" opacity="0.45"/><rect x="89" y="576" width="10" height="9.5" fill="#ffcc00" /><rect x="89" y="608" width="10" height="18" fill="#ffcc00" /><path d="M94,609 L94,625" stroke="#ffffff" stroke-width="1.4" fill="none" opacity="0.45"/><text x="77" y="528.5" font-size="9" fill="#000" text-anchor="start" transform="rotate(-90 77 528.5)" >PT-TsLL</text><text x="76" y="576" font-size="9" fill="#000" text-anchor="start" transform="rotate(-90 76 576)" >PT1-LL</text><text x="94.5" y="576" font-size="9" fill="#000" text-anchor="start" transform="rotate(-90 94.5 576)" >PT2-LL</text><circle cx="98.5" cy="657.5" r="6" fill="#a08010" stroke="#ffd030" stroke-width="1.3"/><circle cx="105" cy="662" r="6" fill="#a08010" stroke="#ffd030" stroke-width="1.3"/><circle cx="98" cy="667" r="6" fill="#a08010" stroke="#ffd030" stroke-width="1.3"/><path d="M125.7,469 L125.7,510" stroke="#d0f550" stroke-width="2" fill="none" /><path d="M144,436 L144,510" stroke="#ffe84a" stroke-width="2" fill="none" /><rect x="117.7" y="509.5" width="16.0" height="15.0" fill="#ffa898" /><path d="M119.2,510.5 L126.2,524.5" stroke="#000000" stroke-width="2" fill="none" /><path d="M123.2,511.0 L129.2,511.0" stroke="#000000" stroke-width="2" fill="none" /><rect x="136.0" y="509.5" width="16.0" height="15.0" fill="#ffa898" /><path d="M137.5,510.5 L144.5,524.5" stroke="#000000" stroke-width="2" fill="none" /><path d="M141.5,511.0 L147.5,511.0" stroke="#000000" stroke-width="2" fill="none" /><path d="M125.7,524.5 L125.7,543" stroke="#ffe84a" stroke-width="2" fill="none" /><rect x="123.2" y="544.0" width="5.0" height="11.0" fill="#c0c0c0" /><rect x="124.2" y="544.0" width="3.0" height="11.0" fill="#98f898" /><path d="M120.7,547.0 A5.0,5.5 0 0 1 130.7,547.0" stroke="#000000" stroke-width="1.1" fill="none"/><rect x="123.2" y="575.0" width="5.0" height="11.0" fill="#c0c0c0" /><rect x="124.2" y="575.0" width="3.0" height="11.0" fill="#98f898" /><path d="M120.7,582.5 A5.0,5.5 0 0 0 130.7,582.5" stroke="#000000" stroke-width="1.1" fill="none"/><rect x="115.7" y="555.5" width="20.0" height="19.0" fill="#00ee00" stroke="#000000" stroke-width="1" /><path d="M125.7,553.0 L125.7,577.0" stroke="#000000" stroke-width="2.0" fill="none" /><path d="M122.2,554.5 L129.2,561.0" stroke="#000000" stroke-width="1.1" fill="none" /><path d="M129.2,554.5 L122.2,561.0" stroke="#000000" stroke-width="1.1" fill="none" /><path d="M125.7,586 L125.7,605 L144,605 L144,524.5" stroke="#ffe84a" stroke-width="2" fill="none" /><circle cx="135" cy="605" r="3.2" fill="none" stroke="#000000" stroke-width="1"/><path d="M135,608 L135,613" stroke="#000000" stroke-width="1" fill="none" /><text x="121" y="508" font-size="9" fill="#000" text-anchor="start" transform="rotate(-90 121 508)" >LL3-1s</text><text x="139" y="508" font-size="9" fill="#000" text-anchor="start" transform="rotate(-90 139 508)" >LL3-Ts</text><text x="111" y="580" font-size="8.5" fill="#000" font-weight="bold" text-anchor="start" transform="rotate(-90 111 580)" >VL3 sek</text><text x="135" y="621" font-size="12.5" fill="#111" text-anchor="middle" >MB.1 I</text><rect x="105.5" y="629.5" width="57" height="20" fill="#d0d0d0" stroke="#e8e8e8" stroke-width="1" /><text x="134" y="645" font-size="13" fill="#000" font-weight="bold" text-anchor="middle" >0 A</text><rect x="171.5" y="477" width="44" height="152" fill="#808080" /><path d="M215.0,477 L215.0,629" stroke="#8e8e8e" stroke-width="1" fill="none" /><path d="M171.5,628.5 L215.5,628.5" stroke="#8e8e8e" stroke-width="1" fill="none" /><path d="M184.7,469 L184.7,510" stroke="#d0f550" stroke-width="2" fill="none" /><path d="M203,436 L203,510" stroke="#ffe84a" stroke-width="2" fill="none" /><rect x="176.7" y="509.5" width="16.0" height="15.0" fill="#ffa898" /><path d="M178.2,510.5 L185.2,524.5" stroke="#000000" stroke-width="2" fill="none" /><path d="M182.2,511.0 L188.2,511.0" stroke="#000000" stroke-width="2" fill="none" /><rect x="195.0" y="509.5" width="16.0" height="15.0" fill="#98f898" /><path d="M203,508.5 L203,524.5" stroke="#000000" stroke-width="2" fill="none" /><path d="M200.0,510.7 L206.0,510.7" stroke="#000000" stroke-width="2" fill="none" /><path d="M184.7,524.5 L184.7,532.5 L203,532.5 L203,524.5" stroke="#ffe84a" stroke-width="2" fill="none" /><path d="M193.85,532.5 L193.85,543" stroke="#ffe84a" stroke-width="2" fill="none" /><rect x="191.35" y="544.0" width="5.0" height="11.0" fill="#c0c0c0" /><rect x="192.35" y="544.0" width="3.0" height="11.0" fill="#98f898" /><path d="M188.85,547.0 A5.0,5.5 0 0 1 198.85,547.0" stroke="#000000" stroke-width="1.1" fill="none"/><rect x="191.35" y="575.0" width="5.0" height="11.0" fill="#c0c0c0" /><rect x="192.35" y="575.0" width="3.0" height="11.0" fill="#98f898" /><path d="M188.85,582.5 A5.0,5.5 0 0 0 198.85,582.5" stroke="#000000" stroke-width="1.1" fill="none"/><rect x="183.85" y="555.5" width="20.0" height="19.0" fill="#00ee00" stroke="#000000" stroke-width="1" /><path d="M193.85,553.0 L193.85,577.0" stroke="#000000" stroke-width="2.0" fill="none" /><path d="M190.35,554.5 L197.35,561.0" stroke="#000000" stroke-width="1.1" fill="none" /><path d="M197.35,554.5 L190.35,561.0" stroke="#000000" stroke-width="1.1" fill="none" /><text x="179.2" y="508" font-size="8.6" fill="#000" text-anchor="start" transform="rotate(-90 179.2 508)" >LL5-1s</text><text x="197.5" y="508" font-size="8.6" fill="#000" text-anchor="start" transform="rotate(-90 197.5 508)" >LL5-Ts</text><text x="179.35" y="574" font-size="9" fill="#000" font-weight="bold" text-anchor="start" transform="rotate(-90 179.35 574)" >VL5</text><rect x="216.5" y="477" width="44.5" height="152" fill="#808080" /><path d="M260.5,477 L260.5,629" stroke="#8e8e8e" stroke-width="1" fill="none" /><path d="M216.5,628.5 L261.0,628.5" stroke="#8e8e8e" stroke-width="1" fill="none" /><path d="M229.5,469 L229.5,510" stroke="#d0f550" stroke-width="2" fill="none" /><path d="M247.5,436 L247.5,510" stroke="#ffe84a" stroke-width="2" fill="none" /><rect x="221.5" y="509.5" width="16.0" height="15.0" fill="#98f898" /><path d="M229.5,508.5 L229.5,524.5" stroke="#000000" stroke-width="2" fill="none" /><path d="M226.5,510.7 L232.5,510.7" stroke="#000000" stroke-width="2" fill="none" /><rect x="239.5" y="509.5" width="16.0" height="15.0" fill="#ffa898" /><path d="M241.0,510.5 L248.0,524.5" stroke="#000000" stroke-width="2" fill="none" /><path d="M245.0,511.0 L251.0,511.0" stroke="#000000" stroke-width="2" fill="none" /><path d="M229.5,524.5 L229.5,532.5 L247.5,532.5 L247.5,524.5" stroke="#d0f550" stroke-width="2" fill="none" /><path d="M238.5,532.5 L238.5,543" stroke="#d0f550" stroke-width="2" fill="none" /><rect x="236.0" y="544.0" width="5.0" height="11.0" fill="#c0c0c0" /><rect x="237.0" y="544.0" width="3.0" height="11.0" fill="#98f898" /><path d="M233.5,547.0 A5.0,5.5 0 0 1 243.5,547.0" stroke="#000000" stroke-width="1.1" fill="none"/><rect x="236.0" y="575.0" width="5.0" height="11.0" fill="#c0c0c0" /><rect x="237.0" y="575.0" width="3.0" height="11.0" fill="#98f898" /><path d="M233.5,582.5 A5.0,5.5 0 0 0 243.5,582.5" stroke="#000000" stroke-width="1.1" fill="none"/><rect x="228.5" y="555.5" width="20.0" height="19.0" fill="#00ee00" stroke="#000000" stroke-width="1" /><path d="M238.5,553.0 L238.5,577.0" stroke="#000000" stroke-width="2.0" fill="none" /><path d="M235.0,554.5 L242.0,561.0" stroke="#000000" stroke-width="1.1" fill="none" /><path d="M242.0,554.5 L235.0,561.0" stroke="#000000" stroke-width="1.1" fill="none" /><text x="224.0" y="508" font-size="8.6" fill="#000" text-anchor="start" transform="rotate(-90 224.0 508)" >LL7-1s</text><text x="242.0" y="508" font-size="8.6" fill="#000" text-anchor="start" transform="rotate(-90 242.0 508)" >LL7-Ts</text><text x="224.0" y="574" font-size="9" fill="#000" font-weight="bold" text-anchor="start" transform="rotate(-90 224.0 574)" >VL7</text><rect x="289" y="477" width="44" height="152" fill="#808080" /><path d="M332.5,477 L332.5,629" stroke="#8e8e8e" stroke-width="1" fill="none" /><path d="M289,628.5 L333,628.5" stroke="#8e8e8e" stroke-width="1" fill="none" /><path d="M302.4,469 L302.4,510" stroke="#d0f550" stroke-width="2" fill="none" /><path d="M320.5,436 L320.5,510" stroke="#ffe84a" stroke-width="2" fill="none" /><rect x="294.4" y="509.5" width="16.0" height="15.0" fill="#98f898" /><path d="M302.4,508.5 L302.4,524.5" stroke="#000000" stroke-width="2" fill="none" /><path d="M299.4,510.7 L305.4,510.7" stroke="#000000" stroke-width="2" fill="none" /><rect x="312.5" y="509.5" width="16.0" height="15.0" fill="#ffa898" /><path d="M314.0,510.5 L321.0,524.5" stroke="#000000" stroke-width="2" fill="none" /><path d="M318.0,511.0 L324.0,511.0" stroke="#000000" stroke-width="2" fill="none" /><path d="M302.4,524.5 L302.4,532.5 L320.5,532.5 L320.5,524.5" stroke="#d0f550" stroke-width="2" fill="none" /><path d="M311.45,532.5 L311.45,543" stroke="#d0f550" stroke-width="2" fill="none" /><rect x="308.95" y="544.0" width="5.0" height="11.0" fill="#c0c0c0" /><rect x="309.95" y="544.0" width="3.0" height="11.0" fill="#98f898" /><path d="M306.45,547.0 A5.0,5.5 0 0 1 316.45,547.0" stroke="#000000" stroke-width="1.1" fill="none"/><rect x="308.95" y="575.0" width="5.0" height="11.0" fill="#c0c0c0" /><rect x="309.95" y="575.0" width="3.0" height="11.0" fill="#98f898" /><path d="M306.45,582.5 A5.0,5.5 0 0 0 316.45,582.5" stroke="#000000" stroke-width="1.1" fill="none"/><rect x="301.45" y="555.5" width="20.0" height="19.0" fill="#00ee00" stroke="#000000" stroke-width="1" /><path d="M311.45,553.0 L311.45,577.0" stroke="#000000" stroke-width="2.0" fill="none" /><path d="M307.95,554.5 L314.95,561.0" stroke="#000000" stroke-width="1.1" fill="none" /><path d="M314.95,554.5 L307.95,561.0" stroke="#000000" stroke-width="1.1" fill="none" /><text x="296.9" y="508" font-size="8.6" fill="#000" text-anchor="start" transform="rotate(-90 296.9 508)" >LL13-1s</text><text x="315.0" y="508" font-size="8.6" fill="#000" text-anchor="start" transform="rotate(-90 315.0 508)" >LL13-Ts</text><text x="296.95" y="574" font-size="9" fill="#000" font-weight="bold" text-anchor="start" transform="rotate(-90 296.95 574)" >VL13</text><rect x="334" y="477" width="44" height="152" fill="#808080" /><path d="M377.5,477 L377.5,629" stroke="#8e8e8e" stroke-width="1" fill="none" /><path d="M334,628.5 L378,628.5" stroke="#8e8e8e" stroke-width="1" fill="none" /><path d="M347.2,469 L347.2,510" stroke="#d0f550" stroke-width="2" fill="none" /><path d="M365.3,436 L365.3,510" stroke="#ffe84a" stroke-width="2" fill="none" /><rect x="339.2" y="509.5" width="16.0" height="15.0" fill="#ffa898" /><path d="M340.7,510.5 L347.7,524.5" stroke="#000000" stroke-width="2" fill="none" /><path d="M344.7,511.0 L350.7,511.0" stroke="#000000" stroke-width="2" fill="none" /><rect x="357.3" y="509.5" width="16.0" height="15.0" fill="#98f898" /><path d="M365.3,508.5 L365.3,524.5" stroke="#000000" stroke-width="2" fill="none" /><path d="M362.3,510.7 L368.3,510.7" stroke="#000000" stroke-width="2" fill="none" /><path d="M347.2,524.5 L347.2,532.5 L365.3,532.5 L365.3,524.5" stroke="#ffe84a" stroke-width="2" fill="none" /><path d="M356.25,532.5 L356.25,543" stroke="#ffe84a" stroke-width="2" fill="none" /><rect x="353.75" y="544.0" width="5.0" height="11.0" fill="#c0c0c0" /><rect x="354.75" y="544.0" width="3.0" height="11.0" fill="#ffa898" /><path d="M351.25,547.0 A5.0,5.5 0 0 1 361.25,547.0" stroke="#000000" stroke-width="1.1" fill="none"/><rect x="353.75" y="575.0" width="5.0" height="11.0" fill="#c0c0c0" /><rect x="354.75" y="575.0" width="3.0" height="11.0" fill="#ffa898" /><path d="M351.25,582.5 A5.0,5.5 0 0 0 361.25,582.5" stroke="#000000" stroke-width="1.1" fill="none"/><rect x="346.25" y="555.5" width="20.0" height="19.0" fill="#ff3300" stroke="#000000" stroke-width="1" /><path d="M348.25,556.0 L356.75,575.0" stroke="#000000" stroke-width="2.0" fill="none" /><path d="M352.75,554.5 L359.75,561.0" stroke="#000000" stroke-width="1.1" fill="none" /><path d="M359.75,554.5 L352.75,561.0" stroke="#000000" stroke-width="1.1" fill="none" /><text x="341.7" y="508" font-size="8.6" fill="#000" text-anchor="start" transform="rotate(-90 341.7 508)" >LL15-1s</text><text x="359.8" y="508" font-size="8.6" fill="#000" text-anchor="start" transform="rotate(-90 359.8 508)" >LL15-Ts</text><text x="341.75" y="574" font-size="9" fill="#000" font-weight="bold" text-anchor="start" transform="rotate(-90 341.75 574)" >VL15</text><rect x="496" y="477" width="45" height="152" fill="#808080" /><path d="M540.5,477 L540.5,629" stroke="#8e8e8e" stroke-width="1" fill="none" /><path d="M496,628.5 L541,628.5" stroke="#8e8e8e" stroke-width="1" fill="none" /><path d="M509.3,469 L509.3,510" stroke="#d0f550" stroke-width="2" fill="none" /><path d="M527.6,436 L527.6,510" stroke="#ffe84a" stroke-width="2" fill="none" /><rect x="501.3" y="509.5" width="16.0" height="15.0" fill="#98f898" /><path d="M509.3,508.5 L509.3,524.5" stroke="#000000" stroke-width="2" fill="none" /><path d="M506.3,510.7 L512.3,510.7" stroke="#000000" stroke-width="2" fill="none" /><rect x="519.6" y="509.5" width="16.0" height="15.0" fill="#ffa898" /><path d="M521.1,510.5 L528.1,524.5" stroke="#000000" stroke-width="2" fill="none" /><path d="M525.1,511.0 L531.1,511.0" stroke="#000000" stroke-width="2" fill="none" /><path d="M509.3,524.5 L509.3,532.5 L527.6,532.5 L527.6,524.5" stroke="#d0f550" stroke-width="2" fill="none" /><path d="M518.45,532.5 L518.45,543" stroke="#d0f550" stroke-width="2" fill="none" /><rect x="515.95" y="544.0" width="5.0" height="11.0" fill="#c0c0c0" /><rect x="516.95" y="544.0" width="3.0" height="11.0" fill="#ffa898" /><path d="M513.45,547.0 A5.0,5.5 0 0 1 523.45,547.0" stroke="#000000" stroke-width="1.1" fill="none"/><rect x="515.95" y="575.0" width="5.0" height="11.0" fill="#c0c0c0" /><rect x="516.95" y="575.0" width="3.0" height="11.0" fill="#ffa898" /><path d="M513.45,582.5 A5.0,5.5 0 0 0 523.45,582.5" stroke="#000000" stroke-width="1.1" fill="none"/><rect x="508.45000000000005" y="555.5" width="20.0" height="19.0" fill="#ff3300" stroke="#000000" stroke-width="1" /><path d="M510.45000000000005,556.0 L518.95,575.0" stroke="#000000" stroke-width="2.0" fill="none" /><path d="M514.95,554.5 L521.95,561.0" stroke="#000000" stroke-width="1.1" fill="none" /><path d="M521.95,554.5 L514.95,561.0" stroke="#000000" stroke-width="1.1" fill="none" /><text x="503.8" y="508" font-size="8.6" fill="#000" text-anchor="start" transform="rotate(-90 503.8 508)" >LL25-1s</text><text x="522.1" y="508" font-size="8.6" fill="#000" text-anchor="start" transform="rotate(-90 522.1 508)" >LL25-Ts</text><text x="503.95000000000005" y="574" font-size="9" fill="#000" font-weight="bold" text-anchor="start" transform="rotate(-90 503.95000000000005 574)" >VL25</text><rect x="555" y="477" width="43.5" height="152" fill="#808080" /><path d="M598.0,477 L598.0,629" stroke="#8e8e8e" stroke-width="1" fill="none" /><path d="M555,628.5 L598.5,628.5" stroke="#8e8e8e" stroke-width="1" fill="none" /><path d="M568.3,469 L568.3,510" stroke="#d0f550" stroke-width="2" fill="none" /><path d="M586.3,436 L586.3,510" stroke="#ffe84a" stroke-width="2" fill="none" /><rect x="560.3" y="509.5" width="16.0" height="15.0" fill="#ffa898" /><path d="M561.8,510.5 L568.8,524.5" stroke="#000000" stroke-width="2" fill="none" /><path d="M565.8,511.0 L571.8,511.0" stroke="#000000" stroke-width="2" fill="none" /><rect x="578.3" y="509.5" width="16.0" height="15.0" fill="#98f898" /><path d="M586.3,508.5 L586.3,524.5" stroke="#000000" stroke-width="2" fill="none" /><path d="M583.3,510.7 L589.3,510.7" stroke="#000000" stroke-width="2" fill="none" /><path d="M568.3,524.5 L568.3,532.5 L586.3,532.5 L586.3,524.5" stroke="#ffe84a" stroke-width="2" fill="none" /><path d="M577.3,532.5 L577.3,543" stroke="#ffe84a" stroke-width="2" fill="none" /><rect x="574.8" y="544.0" width="5.0" height="11.0" fill="#c0c0c0" /><rect x="575.8" y="544.0" width="3.0" height="11.0" fill="#98f898" /><path d="M572.3,547.0 A5.0,5.5 0 0 1 582.3,547.0" stroke="#000000" stroke-width="1.1" fill="none"/><rect x="574.8" y="575.0" width="5.0" height="11.0" fill="#c0c0c0" /><rect x="575.8" y="575.0" width="3.0" height="11.0" fill="#98f898" /><path d="M572.3,582.5 A5.0,5.5 0 0 0 582.3,582.5" stroke="#000000" stroke-width="1.1" fill="none"/><rect x="567.3" y="555.5" width="20.0" height="19.0" fill="#00ee00" stroke="#000000" stroke-width="1" /><path d="M577.3,553.0 L577.3,577.0" stroke="#000000" stroke-width="2.0" fill="none" /><path d="M573.8,554.5 L580.8,561.0" stroke="#000000" stroke-width="1.1" fill="none" /><path d="M580.8,554.5 L573.8,561.0" stroke="#000000" stroke-width="1.1" fill="none" /><text x="562.8" y="508" font-size="8.6" fill="#000" text-anchor="start" transform="rotate(-90 562.8 508)" >LL29-1s</text><text x="580.8" y="508" font-size="8.6" fill="#000" text-anchor="start" transform="rotate(-90 580.8 508)" >LL29-Ts</text><text x="562.8" y="574" font-size="9" fill="#000" font-weight="bold" text-anchor="start" transform="rotate(-90 562.8 574)" >VL29</text><path d="M613.1,469 L613.1,510" stroke="#d0f550" stroke-width="2" fill="none" /><path d="M631,436 L631,510" stroke="#ffe84a" stroke-width="2" fill="none" /><rect x="605.1" y="509.5" width="16.0" height="15.0" fill="#ffa898" /><path d="M606.6,510.5 L613.6,524.5" stroke="#000000" stroke-width="2" fill="none" /><path d="M610.6,511.0 L616.6,511.0" stroke="#000000" stroke-width="2" fill="none" /><rect x="623.0" y="509.5" width="16.0" height="15.0" fill="#98f898" /><path d="M631,508.5 L631,524.5" stroke="#000000" stroke-width="2" fill="none" /><path d="M628.0,510.7 L634.0,510.7" stroke="#000000" stroke-width="2" fill="none" /><path d="M613.1,524.5 L613.1,532.5 L631,532.5 L631,524.5" stroke="#ffe84a" stroke-width="2" fill="none" /><path d="M622.05,532.5 L622.05,543" stroke="#ffe84a" stroke-width="2" fill="none" /><rect x="617.05" y="540" width="10" height="14" fill="#ffd820" /><path d="M617.05,541.5 L627.05,541.5" stroke="#fff4a0" stroke-width="1" fill="none" /><path d="M617.05,544.1 L627.05,544.1" stroke="#fff4a0" stroke-width="1" fill="none" /><path d="M617.05,546.7 L627.05,546.7" stroke="#fff4a0" stroke-width="1" fill="none" /><path d="M617.05,549.3 L627.05,549.3" stroke="#fff4a0" stroke-width="1" fill="none" /><path d="M617.05,551.9 L627.05,551.9" stroke="#fff4a0" stroke-width="1" fill="none" /><text x="607.6" y="508" font-size="8.6" fill="#000" text-anchor="start" transform="rotate(-90 607.6 508)" >LL31-1s</text><text x="625.5" y="508" font-size="8.6" fill="#000" text-anchor="start" transform="rotate(-90 625.5 508)" >LL31-Ts</text><text x="607.55" y="574" font-size="9" fill="#000" font-weight="bold" text-anchor="start" transform="rotate(-90 607.55 574)" >VL31</text><rect x="663" y="477" width="44.5" height="152" fill="#808080" /><path d="M707.0,477 L707.0,629" stroke="#8e8e8e" stroke-width="1" fill="none" /><path d="M663,628.5 L707.5,628.5" stroke="#8e8e8e" stroke-width="1" fill="none" /><path d="M676.5,469 L676.5,510" stroke="#d0f550" stroke-width="2" fill="none" /><path d="M694.4,436 L694.4,510" stroke="#ffe84a" stroke-width="2" fill="none" /><rect x="668.5" y="509.5" width="16.0" height="15.0" fill="#ffa898" /><path d="M670.0,510.5 L677.0,524.5" stroke="#000000" stroke-width="2" fill="none" /><path d="M674.0,511.0 L680.0,511.0" stroke="#000000" stroke-width="2" fill="none" /><rect x="686.4" y="509.5" width="16.0" height="15.0" fill="#98f898" /><path d="M694.4,508.5 L694.4,524.5" stroke="#000000" stroke-width="2" fill="none" /><path d="M691.4,510.7 L697.4,510.7" stroke="#000000" stroke-width="2" fill="none" /><path d="M676.5,524.5 L676.5,532.5 L694.4,532.5 L694.4,524.5" stroke="#ffe84a" stroke-width="2" fill="none" /><path d="M685.45,532.5 L685.45,543" stroke="#ffe84a" stroke-width="2" fill="none" /><rect x="682.95" y="544.0" width="5.0" height="11.0" fill="#c0c0c0" /><rect x="683.95" y="544.0" width="3.0" height="11.0" fill="#98f898" /><path d="M680.45,547.0 A5.0,5.5 0 0 1 690.45,547.0" stroke="#000000" stroke-width="1.1" fill="none"/><rect x="682.95" y="575.0" width="5.0" height="11.0" fill="#c0c0c0" /><rect x="683.95" y="575.0" width="3.0" height="11.0" fill="#98f898" /><path d="M680.45,582.5 A5.0,5.5 0 0 0 690.45,582.5" stroke="#000000" stroke-width="1.1" fill="none"/><rect x="675.45" y="555.5" width="20.0" height="19.0" fill="#00ee00" stroke="#000000" stroke-width="1" /><path d="M685.45,553.0 L685.45,577.0" stroke="#000000" stroke-width="2.0" fill="none" /><path d="M681.95,554.5 L688.95,561.0" stroke="#000000" stroke-width="1.1" fill="none" /><path d="M688.95,554.5 L681.95,561.0" stroke="#000000" stroke-width="1.1" fill="none" /><text x="671.0" y="508" font-size="8.6" fill="#000" text-anchor="start" transform="rotate(-90 671.0 508)" >LL35-1s</text><text x="688.9" y="508" font-size="8.6" fill="#000" text-anchor="start" transform="rotate(-90 688.9 508)" >LL35-Ts</text><text x="670.95" y="574" font-size="9" fill="#000" font-weight="bold" text-anchor="start" transform="rotate(-90 670.95 574)" >VL35</text><rect x="708" y="477" width="44.5" height="152" fill="#808080" /><path d="M752.0,477 L752.0,629" stroke="#8e8e8e" stroke-width="1" fill="none" /><path d="M708,628.5 L752.5,628.5" stroke="#8e8e8e" stroke-width="1" fill="none" /><path d="M721.3,469 L721.3,510" stroke="#d0f550" stroke-width="2" fill="none" /><path d="M739.4,436 L739.4,510" stroke="#ffe84a" stroke-width="2" fill="none" /><rect x="713.3" y="509.5" width="16.0" height="15.0" fill="#ffa898" /><path d="M714.8,510.5 L721.8,524.5" stroke="#000000" stroke-width="2" fill="none" /><path d="M718.8,511.0 L724.8,511.0" stroke="#000000" stroke-width="2" fill="none" /><rect x="731.4" y="509.5" width="16.0" height="15.0" fill="#98f898" /><path d="M739.4,508.5 L739.4,524.5" stroke="#000000" stroke-width="2" fill="none" /><path d="M736.4,510.7 L742.4,510.7" stroke="#000000" stroke-width="2" fill="none" /><path d="M721.3,524.5 L721.3,532.5 L739.4,532.5 L739.4,524.5" stroke="#ffe84a" stroke-width="2" fill="none" /><path d="M730.3499999999999,532.5 L730.3499999999999,543" stroke="#ffe84a" stroke-width="2" fill="none" /><rect x="727.8499999999999" y="544.0" width="5.0" height="11.0" fill="#c0c0c0" /><rect x="728.8499999999999" y="544.0" width="3.0" height="11.0" fill="#98f898" /><path d="M725.3499999999999,547.0 A5.0,5.5 0 0 1 735.3499999999999,547.0" stroke="#000000" stroke-width="1.1" fill="none"/><rect x="727.8499999999999" y="575.0" width="5.0" height="11.0" fill="#c0c0c0" /><rect x="728.8499999999999" y="575.0" width="3.0" height="11.0" fill="#98f898" /><path d="M725.3499999999999,582.5 A5.0,5.5 0 0 0 735.3499999999999,582.5" stroke="#000000" stroke-width="1.1" fill="none"/><rect x="720.3499999999999" y="555.5" width="20.0" height="19.0" fill="#00ee00" stroke="#000000" stroke-width="1" /><path d="M730.3499999999999,553.0 L730.3499999999999,577.0" stroke="#000000" stroke-width="2.0" fill="none" /><path d="M726.8499999999999,554.5 L733.8499999999999,561.0" stroke="#000000" stroke-width="1.1" fill="none" /><path d="M733.8499999999999,554.5 L726.8499999999999,561.0" stroke="#000000" stroke-width="1.1" fill="none" /><text x="715.8" y="508" font-size="8.6" fill="#000" text-anchor="start" transform="rotate(-90 715.8 508)" >LL21-1s</text><text x="733.9" y="508" font-size="8.6" fill="#000" text-anchor="start" transform="rotate(-90 733.9 508)" >LL21-Ts</text><text x="715.8499999999999" y="574" font-size="9" fill="#000" font-weight="bold" text-anchor="start" transform="rotate(-90 715.8499999999999 574)" >VL21</text><rect x="780" y="477" width="44.5" height="152" fill="#808080" /><path d="M824.0,477 L824.0,629" stroke="#8e8e8e" stroke-width="1" fill="none" /><path d="M780,628.5 L824.5,628.5" stroke="#8e8e8e" stroke-width="1" fill="none" /><path d="M793,469 L793,510" stroke="#d0f550" stroke-width="2" fill="none" /><path d="M811.3,436 L811.3,510" stroke="#ffe84a" stroke-width="2" fill="none" /><rect x="785.0" y="509.5" width="16.0" height="15.0" fill="#98f898" /><path d="M793,508.5 L793,524.5" stroke="#000000" stroke-width="2" fill="none" /><path d="M790.0,510.7 L796.0,510.7" stroke="#000000" stroke-width="2" fill="none" /><rect x="803.3" y="509.5" width="16.0" height="15.0" fill="#ffa898" /><path d="M804.8,510.5 L811.8,524.5" stroke="#000000" stroke-width="2" fill="none" /><path d="M808.8,511.0 L814.8,511.0" stroke="#000000" stroke-width="2" fill="none" /><path d="M793,524.5 L793,532.5 L811.3,532.5 L811.3,524.5" stroke="#d0f550" stroke-width="2" fill="none" /><path d="M802.15,532.5 L802.15,543" stroke="#d0f550" stroke-width="2" fill="none" /><rect x="799.65" y="544.0" width="5.0" height="11.0" fill="#c0c0c0" /><rect x="800.65" y="544.0" width="3.0" height="11.0" fill="#98f898" /><path d="M797.15,547.0 A5.0,5.5 0 0 1 807.15,547.0" stroke="#000000" stroke-width="1.1" fill="none"/><rect x="799.65" y="575.0" width="5.0" height="11.0" fill="#c0c0c0" /><rect x="800.65" y="575.0" width="3.0" height="11.0" fill="#98f898" /><path d="M797.15,582.5 A5.0,5.5 0 0 0 807.15,582.5" stroke="#000000" stroke-width="1.1" fill="none"/><rect x="792.15" y="555.5" width="20.0" height="19.0" fill="#00ee00" stroke="#000000" stroke-width="1" /><path d="M802.15,553.0 L802.15,577.0" stroke="#000000" stroke-width="2.0" fill="none" /><path d="M798.65,554.5 L805.65,561.0" stroke="#000000" stroke-width="1.1" fill="none" /><path d="M805.65,554.5 L798.65,561.0" stroke="#000000" stroke-width="1.1" fill="none" /><text x="787.5" y="508" font-size="8.6" fill="#000" text-anchor="start" transform="rotate(-90 787.5 508)" >LL22-1s</text><text x="805.8" y="508" font-size="8.6" fill="#000" text-anchor="start" transform="rotate(-90 805.8 508)" >LL22-Ts</text><text x="787.65" y="574" font-size="9" fill="#000" font-weight="bold" text-anchor="start" transform="rotate(-90 787.65 574)" >VL22</text><rect x="825" y="477" width="12" height="152" fill="#808080" /><rect x="831" y="509.5" width="4" height="15" fill="#ffa898" /><text x="835" y="508" font-size="8.5" fill="#000" text-anchor="start" transform="rotate(-90 835 508)" >LL36-1s</text><path d="M654,541 L654,532.5 L677,532.5" stroke="#ffe84a" stroke-width="1" fill="none" /><rect x="646" y="541" width="16" height="12" fill="#d8d8d8" /><path d="M648,542 L655,553" stroke="#000000" stroke-width="2" fill="none" /><text x="643" y="553" font-size="8.5" fill="#000" text-anchor="start" transform="rotate(-90 643 553)" >-ML1</text><rect x="1170" y="477" width="37.5" height="152" fill="#808080" /><rect x="1208.5" y="477" width="43.5" height="152" fill="#808080" /><rect x="1253" y="477" width="44.5" height="152" fill="#808080" /><path d="M1267,469 L1267,510" stroke="#d0f550" stroke-width="2" fill="none" /><path d="M1285.5,436 L1285.5,510" stroke="#ffe84a" stroke-width="2" fill="none" /><rect x="1259.0" y="509.5" width="16.0" height="15.0" fill="#98f898" /><path d="M1267,508.5 L1267,524.5" stroke="#000000" stroke-width="2" fill="none" /><path d="M1264.0,510.7 L1270.0,510.7" stroke="#000000" stroke-width="2" fill="none" /><rect x="1277.5" y="509.5" width="16.0" height="15.0" fill="#ffa898" /><path d="M1279.0,510.5 L1286.0,524.5" stroke="#000000" stroke-width="2" fill="none" /><path d="M1283.0,511.0 L1289.0,511.0" stroke="#000000" stroke-width="2" fill="none" /><path d="M1267,524.5 L1267,532.5 L1285.5,532.5 L1285.5,524.5" stroke="#d0f550" stroke-width="2" fill="none" /><path d="M1276.25,532.5 L1276.25,543" stroke="#d0f550" stroke-width="2" fill="none" /><rect x="1273.75" y="544.0" width="5.0" height="11.0" fill="#c0c0c0" /><rect x="1274.75" y="544.0" width="3.0" height="11.0" fill="#98f898" /><path d="M1271.25,547.0 A5.0,5.5 0 0 1 1281.25,547.0" stroke="#000000" stroke-width="1.1" fill="none"/><rect x="1273.75" y="575.0" width="5.0" height="11.0" fill="#c0c0c0" /><rect x="1274.75" y="575.0" width="3.0" height="11.0" fill="#98f898" /><path d="M1271.25,582.5 A5.0,5.5 0 0 0 1281.25,582.5" stroke="#000000" stroke-width="1.1" fill="none"/><rect x="1266.25" y="555.5" width="20.0" height="19.0" fill="#00ee00" stroke="#000000" stroke-width="1" /><path d="M1276.25,553.0 L1276.25,577.0" stroke="#000000" stroke-width="2.0" fill="none" /><path d="M1272.75,554.5 L1279.75,561.0" stroke="#000000" stroke-width="1.1" fill="none" /><path d="M1279.75,554.5 L1272.75,561.0" stroke="#000000" stroke-width="1.1" fill="none" /><text x="1261.5" y="508" font-size="8.6" fill="#000" text-anchor="start" transform="rotate(-90 1261.5 508)" >LL0-1s</text><text x="1280.0" y="508" font-size="8.6" fill="#000" text-anchor="start" transform="rotate(-90 1280.0 508)" >LL0-Ts</text><text x="1261.75" y="574" font-size="9" fill="#000" font-weight="bold" text-anchor="start" transform="rotate(-90 1261.75 574)" ></text><rect x="1183.5" y="544.0" width="5.0" height="11.0" fill="#c0c0c0" /><rect x="1184.5" y="544.0" width="3.0" height="11.0" fill="#98f898" /><path d="M1181.0,547.0 A5.0,5.5 0 0 1 1191.0,547.0" stroke="#000000" stroke-width="1.1" fill="none"/><rect x="1183.5" y="575.0" width="5.0" height="11.0" fill="#c0c0c0" /><rect x="1184.5" y="575.0" width="3.0" height="11.0" fill="#98f898" /><path d="M1181.0,582.5 A5.0,5.5 0 0 0 1191.0,582.5" stroke="#000000" stroke-width="1.1" fill="none"/><rect x="1176.0" y="555.5" width="20.0" height="19.0" fill="#00ee00" stroke="#000000" stroke-width="1" /><path d="M1186,553.0 L1186,577.0" stroke="#000000" stroke-width="2.0" fill="none" /><path d="M1182.5,554.5 L1189.5,561.0" stroke="#000000" stroke-width="1.1" fill="none" /><path d="M1189.5,554.5 L1182.5,561.0" stroke="#000000" stroke-width="1.1" fill="none" /><rect x="1228.5" y="544.0" width="5.0" height="11.0" fill="#c0c0c0" /><rect x="1229.5" y="544.0" width="3.0" height="11.0" fill="#98f898" /><path d="M1226.0,547.0 A5.0,5.5 0 0 1 1236.0,547.0" stroke="#000000" stroke-width="1.1" fill="none"/><rect x="1228.5" y="575.0" width="5.0" height="11.0" fill="#c0c0c0" /><rect x="1229.5" y="575.0" width="3.0" height="11.0" fill="#98f898" /><path d="M1226.0,582.5 A5.0,5.5 0 0 0 1236.0,582.5" stroke="#000000" stroke-width="1.1" fill="none"/><rect x="1221.0" y="555.5" width="20.0" height="19.0" fill="#00ee00" stroke="#000000" stroke-width="1" /><path d="M1231,553.0 L1231,577.0" stroke="#000000" stroke-width="2.0" fill="none" /><path d="M1227.5,554.5 L1234.5,561.0" stroke="#000000" stroke-width="1.1" fill="none" /><path d="M1234.5,554.5 L1227.5,561.0" stroke="#000000" stroke-width="1.1" fill="none" /><path d="M1329.7,524 L1329.7,543" stroke="#d0f550" stroke-width="2" fill="none" /><rect x="1327.2" y="544.0" width="5.0" height="11.0" fill="#c0c0c0" /><rect x="1328.2" y="544.0" width="3.0" height="11.0" fill="#98f898" /><path d="M1324.7,547.0 A5.0,5.5 0 0 1 1334.7,547.0" stroke="#000000" stroke-width="1.1" fill="none"/><rect x="1327.2" y="575.0" width="5.0" height="11.0" fill="#c0c0c0" /><rect x="1328.2" y="575.0" width="3.0" height="11.0" fill="#98f898" /><path d="M1324.7,582.5 A5.0,5.5 0 0 0 1334.7,582.5" stroke="#000000" stroke-width="1.1" fill="none"/><rect x="1319.7" y="555.5" width="20.0" height="19.0" fill="#00ee00" stroke="#000000" stroke-width="1" /><path d="M1329.7,553.0 L1329.7,577.0" stroke="#000000" stroke-width="2.0" fill="none" /><path d="M1326.2,554.5 L1333.2,561.0" stroke="#000000" stroke-width="1.1" fill="none" /><path d="M1333.2,554.5 L1326.2,561.0" stroke="#000000" stroke-width="1.1" fill="none" /><rect x="1322" y="517" width="7.5" height="7.5" fill="#98f898" /><rect x="1331" y="517" width="7.5" height="7.5" fill="#98f898" /><rect x="1340.5" y="517" width="7.5" height="7.5" fill="#98f898" /><rect x="1348" y="509" width="8.5" height="15.5" fill="#98f898" /><path d="M1330,517 L1330,524.5" stroke="#000000" stroke-width="1.6" fill="none" /><rect x="1349" y="511" width="2.5" height="2.5" fill="#000" /><path d="M1348,524 L1348,640" stroke="#ffe84a" stroke-width="2" fill="none" /><text x="1317" y="553" font-size="8.5" fill="#000" font-weight="bold" text-anchor="start" transform="rotate(-90 1317 553)" >sek</text><path d="M1389,473 L1389,532.5" stroke="#d0f550" stroke-width="2" fill="none" /><rect x="1383.5" y="512" width="10.5" height="9.5" fill="#c4f000" /><path d="M1379.7,640 L1379.7,532.5 L1398.2,532.5 L1398.2,640" stroke="#d0f550" stroke-width="2" fill="none" /><text x="1382.5" y="512" font-size="8.5" fill="#000" text-anchor="start" transform="rotate(-90 1382.5 512)" >PT-2s</text><text x="1374.5" y="576" font-size="8.5" fill="#000" text-anchor="start" transform="rotate(-90 1374.5 576)" >PT1-LL</text><text x="1392.5" y="576" font-size="8.5" fill="#000" text-anchor="start" transform="rotate(-90 1392.5 576)" >PT2-LL</text><path d="M193.85,586 L193.85,596.5" stroke="#ffe84a" stroke-width="2" fill="none" /><path d="M193.85,596.5 A9.6,8.0 0 0 1 193.85,612.5" stroke="#ffe84a" stroke-width="2" fill="none"/><path d="M193.85,596.5 A9.5,8.55 0 0 0 184.35,605.0 L193.85,605.0 Z" stroke="#ffe84a" stroke-width="2" fill="none"/><path d="M193.85,612 L193.85,634" stroke="#ffe84a" stroke-width="2" fill="none" /><rect x="187.35" y="614.5" width="13.0" height="12.0" fill="#d8d8d8" /><path d="M193.85,613.5 L193.85,627.5" stroke="#ffe84a" stroke-width="2" fill="none" /><circle cx="193.85" cy="620.5" r="4.5" fill="none" stroke="#000000" stroke-width="1.2"/><path d="M198.35,620.5 L202.85,620.5" stroke="#000000" stroke-width="1.2" fill="none" /><path d="M238.5,586 L238.5,596.5" stroke="#d0f550" stroke-width="2" fill="none" /><path d="M238.5,596.5 A9.6,8.0 0 0 1 238.5,612.5" stroke="#d0f550" stroke-width="2" fill="none"/><path d="M238.5,596.5 A9.5,8.55 0 0 0 229.0,605.0 L238.5,605.0 Z" stroke="#d0f550" stroke-width="2" fill="none"/><path d="M238.5,612 L238.5,634" stroke="#d0f550" stroke-width="2" fill="none" /><rect x="232.0" y="614.5" width="13.0" height="12.0" fill="#d8d8d8" /><path d="M238.5,613.5 L238.5,627.5" stroke="#d0f550" stroke-width="2" fill="none" /><circle cx="238.5" cy="620.5" r="4.5" fill="none" stroke="#000000" stroke-width="1.2"/><path d="M243.0,620.5 L247.5,620.5" stroke="#000000" stroke-width="1.2" fill="none" /><path d="M311.45,586 L311.45,596.5" stroke="#d0f550" stroke-width="2" fill="none" /><path d="M311.45,596.5 A9.6,8.0 0 0 1 311.45,612.5" stroke="#d0f550" stroke-width="2" fill="none"/><path d="M311.45,596.5 A9.5,8.55 0 0 0 301.95,605.0 L311.45,605.0 Z" stroke="#d0f550" stroke-width="2" fill="none"/><path d="M311.45,612 L311.45,634" stroke="#d0f550" stroke-width="2" fill="none" /><rect x="304.95" y="614.5" width="13.0" height="12.0" fill="#d8d8d8" /><path d="M311.45,613.5 L311.45,627.5" stroke="#d0f550" stroke-width="2" fill="none" /><circle cx="311.45" cy="620.5" r="4.5" fill="none" stroke="#000000" stroke-width="1.2"/><path d="M315.95,620.5 L320.45,620.5" stroke="#000000" stroke-width="1.2" fill="none" /><path d="M356.25,586 L356.25,655" stroke="#ffffff" stroke-width="2" fill="none" /><rect x="349.75" y="614.5" width="13.0" height="12.0" fill="#8c8c8c" /><path d="M356.25,613.5 L356.25,627.5" stroke="#ffffff" stroke-width="2" fill="none" /><circle cx="356.25" cy="620.5" r="4.5" fill="none" stroke="#000000" stroke-width="1.2"/><path d="M360.75,620.5 L365.25,620.5" stroke="#000000" stroke-width="1.2" fill="none" /><path d="M356.25,637 L427.5,637 L427.5,644.5" stroke="#ffffff" stroke-width="1.6" fill="none" /><path d="M419.2,655 L419.2,644.5 L436.8,644.5 L436.8,655" stroke="#ffffff" stroke-width="1.6" fill="none" /><path d="M518.45,586 L518.45,596.5" stroke="#ff78ff" stroke-width="2" fill="none" /><path d="M518.45,596.5 A9.6,8.0 0 0 1 518.45,612.5" stroke="#ff78ff" stroke-width="2" fill="none"/><path d="M518.45,596.5 A9.5,8.55 0 0 0 508.95000000000005,605.0 L518.45,605.0 Z" stroke="#ff78ff" stroke-width="2" fill="none"/><path d="M518.45,612 L518.45,797" stroke="#ff78ff" stroke-width="2" fill="none" /><rect x="511.95000000000005" y="614.5" width="13.0" height="12.0" fill="#d8d8d8" /><path d="M518.45,613.5 L518.45,627.5" stroke="#ff78ff" stroke-width="2" fill="none" /><circle cx="518.45" cy="620.5" r="4.5" fill="none" stroke="#000000" stroke-width="1.2"/><path d="M522.95,620.5 L527.45,620.5" stroke="#000000" stroke-width="1.2" fill="none" /><rect x="171" y="633.5" width="43.5" height="14.5" fill="#f0ffff" stroke="#e4e4e4" stroke-width="1" /><text x="192.5" y="645.5" font-size="10.5" fill="#000" font-weight="bold" text-anchor="middle" >147 A</text><rect x="216.5" y="633.5" width="43.5" height="14.5" fill="#d0d0d0" stroke="#e4e4e4" stroke-width="1" /><text x="238" y="645.5" font-size="10.5" fill="#000" font-weight="bold" text-anchor="middle" >0 A</text><rect x="288.5" y="633.5" width="44" height="14.5" fill="#f0ffff" stroke="#e4e4e4" stroke-width="1" /><text x="310.5" y="645.5" font-size="10.5" fill="#000" font-weight="bold" text-anchor="middle" >112 A</text><rect x="495" y="633.5" width="46" height="14.5" fill="#d0d0d0" stroke="#e4e4e4" stroke-width="1" /><text x="517" y="645.5" font-size="10.5" fill="#000" font-weight="bold" text-anchor="middle" >0 A</text><circle cx="428.5" cy="469" r="2.7" fill="#dcfa78"/><circle cx="446.5" cy="436.6" r="2.7" fill="#ffe878"/><circle cx="473.5" cy="469" r="2.7" fill="#dcfa78"/><circle cx="491.5" cy="436.6" r="2.7" fill="#ffe878"/><circle cx="545.3" cy="469" r="2.7" fill="#dcfa78"/><circle cx="563.5" cy="436.6" r="2.7" fill="#ffe878"/><circle cx="649.5" cy="469" r="2.7" fill="#dcfa78"/><circle cx="667.5" cy="436.6" r="2.7" fill="#ffe878"/><circle cx="265.8" cy="469" r="2.7" fill="#dcfa78"/><circle cx="383.4" cy="469" r="2.7" fill="#dcfa78"/><circle cx="283.7" cy="436.6" r="2.7" fill="#ffe878"/><circle cx="401.2" cy="436.6" r="2.7" fill="#ffe878"/><circle cx="44.8" cy="469" r="2.7" fill="#dcfa78"/><circle cx="85" cy="436.6" r="2.7" fill="#ffe878"/><circle cx="125.7" cy="469" r="2.7" fill="#dcfa78"/><circle cx="144" cy="436.6" r="2.7" fill="#ffe878"/><circle cx="184.7" cy="469" r="2.7" fill="#dcfa78"/><circle cx="203" cy="436.6" r="2.7" fill="#ffe878"/><circle cx="229.5" cy="469" r="2.7" fill="#dcfa78"/><circle cx="247.5" cy="436.6" r="2.7" fill="#ffe878"/><circle cx="302.4" cy="469" r="2.7" fill="#dcfa78"/><circle cx="320.5" cy="436.6" r="2.7" fill="#ffe878"/><circle cx="347.2" cy="469" r="2.7" fill="#dcfa78"/><circle cx="365.3" cy="436.6" r="2.7" fill="#ffe878"/><circle cx="509.3" cy="469" r="2.7" fill="#dcfa78"/><circle cx="527.6" cy="436.6" r="2.7" fill="#ffe878"/><circle cx="568.3" cy="469" r="2.7" fill="#dcfa78"/><circle cx="586.3" cy="436.6" r="2.7" fill="#ffe878"/><circle cx="613.1" cy="469" r="2.7" fill="#dcfa78"/><circle cx="631" cy="436.6" r="2.7" fill="#ffe878"/><circle cx="676.5" cy="469" r="2.7" fill="#dcfa78"/><circle cx="694.4" cy="436.6" r="2.7" fill="#ffe878"/><circle cx="721.3" cy="469" r="2.7" fill="#dcfa78"/><circle cx="739.4" cy="436.6" r="2.7" fill="#ffe878"/><circle cx="793" cy="469" r="2.7" fill="#dcfa78"/><circle cx="811.3" cy="436.6" r="2.7" fill="#ffe878"/><circle cx="1267" cy="469" r="2.7" fill="#dcfa78"/><circle cx="1285.5" cy="436.6" r="2.7" fill="#ffe878"/></svg>
<svg class="abs" style="left:0;top:0" width="1440" height="1018" viewBox="0 0 1440 1018" font-family="Liberation Sans, sans-serif"><path d="M193.85,648 L193.85,790 L108,790 L108,883" stroke="#ffe84a" stroke-width="2" fill="none" /><rect x="103" y="856.7" width="9.5" height="9.3" fill="#ffcc00" /><path d="M238.5,648 L238.5,654 L229.5,654 L229.5,669" stroke="#d0f550" stroke-width="2" fill="none" /><path d="M238.5,654 L247.5,654 L247.5,669" stroke="#d0f550" stroke-width="2" fill="none" /><rect x="221.5" y="668.5" width="16.0" height="15.0" fill="#ffa898" /><path d="M223.0,669.5 L230.0,683.5" stroke="#000000" stroke-width="2" fill="none" /><path d="M227.0,670.0 L233.0,670.0" stroke="#000000" stroke-width="2" fill="none" /><rect x="239.5" y="668.5" width="16.0" height="15.0" fill="#ffa898" /><path d="M241.0,669.5 L248.0,683.5" stroke="#000000" stroke-width="2" fill="none" /><path d="M245.0,670.0 L251.0,670.0" stroke="#000000" stroke-width="2" fill="none" /><path d="M229.5,683.5 L229.5,760" stroke="#ff78ff" stroke-width="2" fill="none" /><path d="M247.5,683.5 L247.5,760" stroke="#ff78ff" stroke-width="2" fill="none" /><text x="218.5" y="690.5" font-size="8.5" fill="#000" text-anchor="start" transform="rotate(-90 218.5 690.5)" >KL-F26</text><text x="266" y="699" font-size="8.5" fill="#000" text-anchor="start" transform="rotate(-90 266 699)" >KL-F70-KRU</text><path d="M311.4,648 L311.4,805.5 L560,805.5" stroke="#d0f550" stroke-width="2" fill="none" /><rect x="303.4" y="668.5" width="16.0" height="15.0" fill="#98f898" /><path d="M311.4,667.5 L311.4,683.5" stroke="#000000" stroke-width="2" fill="none" /><path d="M308.4,669.7 L314.4,669.7" stroke="#000000" stroke-width="2" fill="none" /><text x="300.5" y="693.5" font-size="8.5" fill="#000" text-anchor="start" transform="rotate(-90 300.5 693.5)" >KL13-F3VK</text><text x="283" y="738.5" font-size="8.5" fill="#000" text-anchor="start" transform="rotate(-90 283 738.5)" >ML13-F3VK</text><path d="M311.4,700 L292.5,700 L292.5,709" stroke="#d0f550" stroke-width="2" fill="none" /><rect x="285.5" y="709" width="15.5" height="15" fill="#d4d4d4" /><path d="M287,710.5 L295,725" stroke="#000000" stroke-width="1.8" fill="none" /><path d="M292.5,723 L292.5,727" stroke="#000000" stroke-width="1.4" fill="none" /><path d="M286.5,727.5 L298.5,727.5" stroke="#000000" stroke-width="1.2" fill="none" /><path d="M288.5,730.5 L296.5,730.5" stroke="#000000" stroke-width="1.2" fill="none" /><path d="M290.5,733.5 L294.5,733.5" stroke="#000000" stroke-width="1.2" fill="none" /><circle cx="311.4" cy="765.5" r="2.6" fill="#d4f870"/><circle cx="356.2" cy="668.7" r="16.8" fill="#a6a6a6" stroke="#ffffff" stroke-width="2.4"/><text x="356.2" y="673" font-size="12" fill="#000" font-weight="bold" text-anchor="middle" >G-5</text><path d="M419.2,645 L419.2,724" stroke="#ffffff" stroke-width="1.6" fill="none" /><rect x="414.2" y="652" width="10" height="9" fill="#d4d4d4" stroke="#f4f4f4" stroke-width="1" /><rect x="414.2" y="680" width="10" height="18" fill="#d4d4d4" stroke="#f4f4f4" stroke-width="1" /><path d="M419.2,680 L419.2,698" stroke="#fff" stroke-width="1" fill="none" /><path d="M436.8,645 L436.8,724" stroke="#ffffff" stroke-width="1.6" fill="none" /><rect x="431.8" y="652" width="10" height="9" fill="#d4d4d4" stroke="#f4f4f4" stroke-width="1" /><rect x="431.8" y="680" width="10" height="18" fill="#d4d4d4" stroke="#f4f4f4" stroke-width="1" /><path d="M436.8,680 L436.8,698" stroke="#fff" stroke-width="1" fill="none" /><circle cx="419.2" cy="728" r="5.8" fill="#b8b8b8" fill-opacity="0.45" stroke="#f0f0f0" stroke-width="1.3"/><circle cx="419.2" cy="737" r="5.8" fill="#b8b8b8" fill-opacity="0.45" stroke="#f0f0f0" stroke-width="1.3"/><circle cx="436.8" cy="728" r="5.8" fill="#b8b8b8" fill-opacity="0.45" stroke="#f0f0f0" stroke-width="1.3"/><circle cx="436.8" cy="737" r="5.8" fill="#b8b8b8" fill-opacity="0.45" stroke="#f0f0f0" stroke-width="1.3"/><circle cx="445.5" cy="732.5" r="5.8" fill="#b8b8b8" fill-opacity="0.45" stroke="#f0f0f0" stroke-width="1.3"/><text x="332" y="708.5" font-size="10" fill="#111" text-anchor="middle" >P</text><rect x="339.5" y="698" width="66" height="13.5" fill="#f0ffff" stroke="#e0e0e0" stroke-width="1" /><text x="372.5" y="709" font-size="11" fill="#000" font-weight="bold" text-anchor="middle" >0.0 MW</text><text x="332" y="724.5" font-size="10" fill="#111" text-anchor="middle" >Q</text><rect x="339.5" y="714" width="66" height="13.5" fill="#f0ffff" stroke="#e0e0e0" stroke-width="1" /><text x="372.5" y="725" font-size="11" fill="#000" font-weight="bold" text-anchor="middle" >0.0 MVar</text><text x="332" y="740.5" font-size="10" fill="#111" text-anchor="middle" >I</text><rect x="339.5" y="730" width="66" height="13.5" fill="#d0d0d0" stroke="#e0e0e0" stroke-width="1" /><text x="372.5" y="741" font-size="11" fill="#000" font-weight="bold" text-anchor="middle" >0 A</text><text x="332" y="756.5" font-size="10" fill="#111" text-anchor="middle" >U</text><rect x="339.5" y="746" width="66" height="13.5" fill="#ff3030" stroke="#e0e0e0" stroke-width="1" /><text x="372.5" y="757" font-size="11" fill="#000" font-weight="bold" text-anchor="middle" >0.0 kV</text><text x="514" y="724" font-size="8.5" fill="#000" font-weight="bold" text-anchor="start" transform="rotate(-90 514 724)" >F95</text><circle cx="518.45" cy="765.5" r="2.6" fill="#ff78ff"/><path d="M518.45,797 L560,797" stroke="#ff78ff" stroke-width="2" fill="none" /><path d="M305,797 L460.5,797 L460.5,883" stroke="#ff78ff" stroke-width="2" fill="none" /><path d="M305,813 L560,813" stroke="#ff78ff" stroke-width="2" fill="none" /><path d="M342,883 L342,821.5 L560,821.5" stroke="#d0f550" stroke-width="2" fill="none" /><path d="M305,829 L560,829" stroke="#d0f550" stroke-width="2" fill="none" /><path d="M225,840 L225,883" stroke="#d0f550" stroke-width="2" fill="none" /><rect x="220" y="860.5" width="9.5" height="9.5" fill="#c4f000" /><rect x="338" y="860.5" width="9.5" height="9.5" fill="#c4f000" /><rect x="455.5" y="860.5" width="9.5" height="9.5" fill="#ff30ff" /><rect x="99.5" y="882.5" width="89" height="7" fill="#ffcc00" /><circle cx="108.0" cy="885.6" r="2.3" fill="#ffffff" opacity="0.5"/><circle cx="117.05" cy="885.6" r="2.3" fill="#ffffff" opacity="0.5"/><circle cx="126.1" cy="885.6" r="2.3" fill="#ffffff" opacity="0.5"/><circle cx="135.15" cy="885.6" r="2.3" fill="#ffffff" opacity="0.5"/><circle cx="144.2" cy="885.6" r="2.3" fill="#ffffff" opacity="0.5"/><circle cx="153.25" cy="885.6" r="2.3" fill="#ffffff" opacity="0.5"/><circle cx="162.3" cy="885.6" r="2.3" fill="#ffffff" opacity="0.5"/><circle cx="171.35000000000002" cy="885.6" r="2.3" fill="#ffffff" opacity="0.5"/><circle cx="180.4" cy="885.6" r="2.3" fill="#ffffff" opacity="0.5"/><text x="89.5" y="890" font-size="11" fill="#000" font-weight="bold" text-anchor="middle" >1</text><text x="102" y="880" font-size="9" fill="#000" text-anchor="middle" >1</text><rect x="217" y="882.5" width="90" height="7" fill="#b8f000" /><circle cx="225.5" cy="885.6" r="2.3" fill="#ffffff" opacity="0.5"/><circle cx="234.55" cy="885.6" r="2.3" fill="#ffffff" opacity="0.5"/><circle cx="243.6" cy="885.6" r="2.3" fill="#ffffff" opacity="0.5"/><circle cx="252.65" cy="885.6" r="2.3" fill="#ffffff" opacity="0.5"/><circle cx="261.7" cy="885.6" r="2.3" fill="#ffffff" opacity="0.5"/><circle cx="270.75" cy="885.6" r="2.3" fill="#ffffff" opacity="0.5"/><circle cx="279.8" cy="885.6" r="2.3" fill="#ffffff" opacity="0.5"/><circle cx="288.85" cy="885.6" r="2.3" fill="#ffffff" opacity="0.5"/><circle cx="297.9" cy="885.6" r="2.3" fill="#ffffff" opacity="0.5"/><text x="207" y="890" font-size="11" fill="#000" font-weight="bold" text-anchor="middle" >2</text><text x="216" y="880" font-size="9" fill="#000" text-anchor="middle" >2</text><rect x="334" y="882.5" width="90" height="7" fill="#b8f000" /><circle cx="342.5" cy="885.6" r="2.3" fill="#ffffff" opacity="0.5"/><circle cx="351.55" cy="885.6" r="2.3" fill="#ffffff" opacity="0.5"/><circle cx="360.6" cy="885.6" r="2.3" fill="#ffffff" opacity="0.5"/><circle cx="369.65" cy="885.6" r="2.3" fill="#ffffff" opacity="0.5"/><circle cx="378.7" cy="885.6" r="2.3" fill="#ffffff" opacity="0.5"/><circle cx="387.75" cy="885.6" r="2.3" fill="#ffffff" opacity="0.5"/><circle cx="396.8" cy="885.6" r="2.3" fill="#ffffff" opacity="0.5"/><circle cx="405.85" cy="885.6" r="2.3" fill="#ffffff" opacity="0.5"/><circle cx="414.9" cy="885.6" r="2.3" fill="#ffffff" opacity="0.5"/><text x="324" y="890" font-size="11" fill="#000" font-weight="bold" text-anchor="middle" >3</text><text x="333" y="880" font-size="9" fill="#000" text-anchor="middle" >25</text><rect x="451" y="882.5" width="100" height="7" fill="#ff30ff" /><circle cx="459.5" cy="885.6" r="2.3" fill="#ffffff" opacity="0.5"/><circle cx="468.55" cy="885.6" r="2.3" fill="#ffffff" opacity="0.5"/><circle cx="477.6" cy="885.6" r="2.3" fill="#ffffff" opacity="0.5"/><circle cx="486.65" cy="885.6" r="2.3" fill="#ffffff" opacity="0.5"/><circle cx="495.7" cy="885.6" r="2.3" fill="#ffffff" opacity="0.5"/><circle cx="504.75" cy="885.6" r="2.3" fill="#ffffff" opacity="0.5"/><circle cx="513.8" cy="885.6" r="2.3" fill="#ffffff" opacity="0.5"/><circle cx="522.85" cy="885.6" r="2.3" fill="#ffffff" opacity="0.5"/><circle cx="531.9" cy="885.6" r="2.3" fill="#ffffff" opacity="0.5"/><circle cx="540.95" cy="885.6" r="2.3" fill="#ffffff" opacity="0.5"/><text x="441" y="890" font-size="11" fill="#000" font-weight="bold" text-anchor="middle" >4</text><text x="450" y="880" font-size="9" fill="#000" text-anchor="middle" >26</text></svg>
<div style="left:20px;top:50px;width:244px;height:33px;border-radius:6px;background:linear-gradient(180deg,#ffffff 0%,#ececec 10%,#dcdcdc 45%,#d0d0d0 75%,#c0c0c0 90%,#909090 100%);box-shadow:1.500px 1.5px 0 #2a2a2a;"></div><svg class="abs" style="left:31px;top:55.5px" width="26" height="23" viewBox="0 0 26 23"><rect x="0.5" y="0.5" width="25" height="22" rx="3" fill="#dedede" stroke="#a4a4a4"/><rect x="1.5" y="1.5" width="23" height="8" rx="2" fill="#ececec"/><g transform="translate(0,-1)"><path d="M5,8 L5,19 L21,19 L21,8 L13,8 L11,5.5 L6,5.5 Z" fill="#eeeac0" stroke="#222" stroke-width="1"/></g></svg><svg class="abs" style="left:64px;top:55.5px" width="26" height="23" viewBox="0 0 26 23"><rect x="0.5" y="0.5" width="25" height="22" rx="3" fill="#dedede" stroke="#a4a4a4"/><rect x="1.5" y="1.5" width="23" height="8" rx="2" fill="#ececec"/><g transform="translate(0,-1)"><path d="M7,7 L19,7 L13,18 Z" fill="#fff" stroke="#000" stroke-width="1.6"/></g></svg><svg class="abs" style="left:97px;top:55.5px" width="26" height="23" viewBox="0 0 26 23"><rect x="0.5" y="0.5" width="25" height="22" rx="3" fill="#dedede" stroke="#a4a4a4"/><rect x="1.5" y="1.5" width="23" height="8" rx="2" fill="#ececec"/><g transform="translate(0,-1)"><circle cx="11" cy="10.5" r="6" fill="#e8e8e8" stroke="#333" stroke-width="1.3"/><path d="M7.5,10.5 L14.5,10.5 M11,7 L11,14" stroke="#000" stroke-width="2"/><path d="M15.5,15 L21,20" stroke="#444" stroke-width="1.8"/></g></svg><svg class="abs" style="left:130.5px;top:55.5px" width="26" height="23" viewBox="0 0 26 23"><rect x="0.5" y="0.5" width="25" height="22" rx="3" fill="#dedede" stroke="#a4a4a4"/><rect x="1.5" y="1.5" width="23" height="8" rx="2" fill="#ececec"/><g transform="translate(0,-1)"><path d="M7,6 L7,19" stroke="#000" stroke-width="2"/><path d="M19,6 L19,19 L8.5,12.5 Z" fill="#fff" stroke="#000" stroke-width="1.6"/></g></svg><svg class="abs" style="left:163px;top:55.5px" width="26" height="23" viewBox="0 0 26 23"><rect x="0.5" y="0.5" width="25" height="22" rx="3" fill="#dedede" stroke="#a4a4a4"/><rect x="1.5" y="1.5" width="23" height="8" rx="2" fill="#ececec"/><g transform="translate(0,-1)"><path d="M18,6 L18,19 L7,12.5 Z" fill="#fff" stroke="#000" stroke-width="1.6"/></g></svg><svg class="abs" style="left:195.5px;top:55.5px" width="26" height="23" viewBox="0 0 26 23"><rect x="0.5" y="0.5" width="25" height="22" rx="3" fill="#dedede" stroke="#a4a4a4"/><rect x="1.5" y="1.5" width="23" height="8" rx="2" fill="#ececec"/><g transform="translate(0,-1)"><path d="M8,6 L8,19 L19,12.5 Z" fill="#d8d8d8" stroke="#999" stroke-width="1.4"/></g></svg><svg class="abs" style="left:228.5px;top:55.5px" width="26" height="23" viewBox="0 0 26 23"><rect x="0.5" y="0.5" width="25" height="22" rx="3" fill="#dedede" stroke="#a4a4a4"/><rect x="1.5" y="1.5" width="23" height="8" rx="2" fill="#ececec"/><g transform="translate(0,-1)"><text x="13" y="19" font-size="17" font-weight="bold" text-anchor="middle" font-family="Liberation Sans, sans-serif">?</text></g></svg><div style="left:295px;top:50px;width:259px;height:46px;background:#c8c8c8;box-shadow:inset 1px 1px 0 #f0f0f0,inset -1px -1px 0 #404040,inset 2px 2px 0 #e0e0e0;"></div><div style="left:299px;top:53.5px;width:251px;height:17.5px;background:#6496ff;"></div><div class="t" style="left:303px;top:53.5px;font-size:15.5px;color:#000;line-height:15.5px;font-weight:bold;font-family:'Liberation Serif',serif;line-height:16px;letter-spacing:0.5px;">Telem SCADA help</div><svg class="abs" style="left:469px;top:54px" width="22" height="16" viewBox="0 0 22 16"><path d="M11,1 L14,4.5 L12.2,4.5 L12.2,6.8 L17,6.8 L17,5 L21,8 L17,11 L17,9.2 L12.2,9.2 L12.2,11.5 L14,11.5 L11,15 L8,11.5 L9.8,11.5 L9.8,9.2 L5,9.2 L5,11 L1,8 L5,5 L5,6.8 L9.8,6.8 L9.8,4.5 L8,4.5 Z" fill="#fff" stroke="#000" stroke-width="1"/></svg><div style="left:530.5px;top:54.5px;width:18.5px;height:15.5px;background:#d0d0d0;box-shadow:inset 1px 1px 0 #f0f0f0,inset -1px -1px 0 #606060;"></div><svg class="abs" style="left:534px;top:56.5px" width="12" height="12" viewBox="0 0 12 12"><path d="M1,1 L11,11 M11,1 L1,11" stroke="#000" stroke-width="1.8"/></svg><div style="left:299px;top:74px;width:25px;height:19px;background:#c8c8c8;box-shadow:inset 1px 1px 0 #f4f4f4,inset -1px -1px 0 #555;"></div><svg class="abs" style="left:302px;top:76px" width="20" height="16" viewBox="0 0 20 16"><path d="M1.5,3 L1.5,14.5 L17.5,14.5 L17.5,3 L9.5,3 L8,1 L3,1 Z" fill="#e8e4b8" stroke="#333" stroke-width="1"/></svg><div style="left:325px;top:74px;width:98px;height:19px;background:#c8c8c8;box-shadow:inset 1px 1px 0 #f4f4f4,inset -1px -1px 0 #555;"></div><div class="t" style="left:325px;top:76px;font-size:14.5px;color:#000;line-height:14.5px;font-weight:bold;width:101px;text-align:center;line-height:16px;letter-spacing:0.8px;">Documents</div><div style="left:425px;top:74px;width:125.5px;height:19px;background:#c8c8c8;box-shadow:inset 1px 1px 0 #f4f4f4,inset -1px -1px 0 #555;"></div><div class="t" style="left:425px;top:76px;font-size:14.5px;color:#000;line-height:14.5px;font-weight:bold;width:123px;text-align:center;line-height:16px;letter-spacing:0.8px;">Index</div><div class="t" style="left:628.5px;top:75.5px;font-size:25px;color:#90ff00;line-height:25px;font-weight:bold;line-height:30px;transform-origin:0 0;transform:scaleX(1.123);">Nordic Power Plant</div><div style="left:708.5px;top:202px;width:124.5px;height:50px;background:#7e7e7e;"></div><div class="t" style="left:709px;top:205px;font-size:12.5px;color:#9cff20;line-height:12.5px;font-weight:bold;width:124px;text-align:center;line-height:14px;letter-spacing:0.3px;">Total Power</div><div style="left:721px;top:222.5px;width:96px;height:20.5px;background:#f0ffff;box-shadow:inset 1px 1px 0 #fff,inset -1px -1px 0 #fff,0 0 0 1px #c8c8c8;"></div><div class="t" style="left:721px;top:225px;font-size:14px;color:#000;line-height:14px;font-weight:bold;width:96px;text-align:center;line-height:16px;">18.93 MW</div><div style="left:707px;top:270px;width:49px;height:43px;border:1px solid #d0d0d0;box-sizing:border-box;"></div><svg class="abs" style="left:708px;top:271px" width="48" height="41" viewBox="0 0 48 41"><rect x="13.500" y="2.5" width="25.5" height="35" fill="#d43434" stroke="#c07818" stroke-width="1"/><path d="M2.5,4.5 L13.500,2.5 L13.5,37.5 L2.5,40 Z" fill="#dccc60" stroke="#b07810" stroke-width="1"/><circle cx="4" cy="23" r="0.9" fill="#553300"/></svg><div style="left:786px;top:270px;width:60px;height:43px;border:1px solid #d0d0d0;box-sizing:border-box;"></div><svg class="abs" style="left:794px;top:278px" width="34" height="32" viewBox="0 0 34 32"><path d="M2.5,31 C-1,27 1,16 5.8,5.5 C6,14 8,20 10,22 C11,14 13,6 14.4,0.5 C15.5,8 17,18 18.500,22 C19.5,15 21,9 22.3,4.6 C23,12 24.5,19 26,22 C27,16 28.5,11 29.7,7.3 C31,14 35.500,25 31.500,31 Z" fill="#ff0000"/></svg><div class="t" style="left:735px;top:385px;font-size:13.5px;color:#000;line-height:13.5px;width:60px;text-align:center;line-height:15px;">Ts. U</div><div style="left:731px;top:401px;width:68px;height:20.5px;background:#f0ffff;box-shadow:inset 1px 1px 0 #fff,inset -1px -1px 0 #fff,0 0 0 1px #c8c8c8;"></div><div class="t" style="left:731px;top:403.5px;font-size:14px;color:#000;line-height:14px;font-weight:bold;width:68px;text-align:center;line-height:16px;">6.5 kV</div><div style="left:32px;top:405px;width:68px;height:14.5px;background:#f0ffff;box-shadow:0 0 0 1px #e0e0e0;overflow:hidden;"></div><div class="t" style="left:32px;top:403.5px;font-size:14px;color:#000;line-height:14px;font-weight:bold;width:68px;text-align:center;line-height:16px;">6.4 kV</div>
<div style="left:9px;top:646px;width:79.5px;height:129.5px;background:#c2c2c2;overflow:hidden;box-shadow:inset -1px -1px 0 #8a8a8a;"><div style="left:0px;top:0px;width:79.5px;height:24px;background:#98a3b3;"></div><div class="t" style="left:5px;top:1.5px;font-size:13.5px;color:#000;line-height:13.5px;line-height:17px;white-space:nowrap;">Bay 5</div><div style="left:59.0px;top:2px;width:18.5px;height:16px;background:#d0d0d0;box-shadow:inset 1px 1px 0 #f8f8f8,inset -1px -1px 0 #707070;"></div><svg class="abs" style="left:59.0px;top:2px" width="18.5" height="16" viewBox="0 0 18.5 16"><path d="M3.5,3 L15.0,13 M15.0,3 L3.5,13" stroke="#666" stroke-width="1.2"/></svg><div class="t" style="left:3px;top:28px;font-size:12.5px;color:#000;line-height:12.5px;line-height:14px;">Ia</div><div style="left:21px;top:28px;width:54px;height:15px;background:#f0ffff;"></div><div class="t" style="left:21px;top:27px;font-size:13px;color:#000;line-height:13px;font-weight:bold;width:54px;text-align:center;line-height:15px;white-space:nowrap;">147 A</div><div class="t" style="left:3px;top:48px;font-size:12.5px;color:#000;line-height:12.5px;line-height:14px;">Ib</div><div style="left:21px;top:48px;width:54px;height:15px;background:#f0ffff;"></div><div class="t" style="left:21px;top:47px;font-size:13px;color:#000;line-height:13px;font-weight:bold;width:54px;text-align:center;line-height:15px;white-space:nowrap;">146 A</div><div class="t" style="left:3px;top:68px;font-size:12.5px;color:#000;line-height:12.5px;line-height:14px;">Ic</div><div style="left:21px;top:68px;width:54px;height:15px;background:#f0ffff;"></div><div class="t" style="left:21px;top:67px;font-size:13px;color:#000;line-height:13px;font-weight:bold;width:54px;text-align:center;line-height:15px;white-space:nowrap;">148 A</div><div class="t" style="left:3px;top:88px;font-size:12.5px;color:#000;line-height:12.5px;line-height:14px;">P</div><div style="left:21px;top:88px;width:54px;height:15px;background:#f0ffff;"></div><div class="t" style="left:21px;top:87px;font-size:13px;color:#000;line-height:13px;font-weight:bold;width:54px;text-align:center;line-height:15px;white-space:nowrap;">1.6 MW</div><div class="t" style="left:3px;top:108px;font-size:12.5px;color:#000;line-height:12.5px;line-height:14px;">Q</div><div style="left:21px;top:108px;width:54px;height:15px;background:#f0ffff;"></div><div style="left:21px;top:108px;width:54px;height:15px;overflow:hidden;"><div class="t" style="left:2px;top:-1px;font-size:13px;color:#000;line-height:13px;font-weight:bold;line-height:15px;white-space:nowrap;">0.4 MVar</div></div></div><div style="left:65px;top:670px;width:79.5px;height:129.5px;background:#c2c2c2;overflow:hidden;box-shadow:inset -1px -1px 0 #8a8a8a;"><div style="left:0px;top:0px;width:79.5px;height:24px;background:#98a3b3;"></div><div class="t" style="left:5px;top:1.5px;font-size:13.5px;color:#000;line-height:13.5px;line-height:17px;white-space:nowrap;">Bay 7</div><div style="left:59.0px;top:2px;width:18.5px;height:16px;background:#d0d0d0;box-shadow:inset 1px 1px 0 #f8f8f8,inset -1px -1px 0 #707070;"></div><svg class="abs" style="left:59.0px;top:2px" width="18.5" height="16" viewBox="0 0 18.5 16"><path d="M3.5,3 L15.0,13 M15.0,3 L3.5,13" stroke="#666" stroke-width="1.2"/></svg><div class="t" style="left:3px;top:28px;font-size:12.5px;color:#000;line-height:12.5px;line-height:14px;">Ia</div><div style="left:21px;top:28px;width:54px;height:15px;background:#c8c8c8;"></div><div class="t" style="left:21px;top:27px;font-size:13px;color:#000;line-height:13px;font-weight:bold;width:54px;text-align:center;line-height:15px;white-space:nowrap;">0 A</div><div class="t" style="left:3px;top:48px;font-size:12.5px;color:#000;line-height:12.5px;line-height:14px;">Ib</div><div style="left:21px;top:48px;width:54px;height:15px;background:#f0ffff;"></div><div class="t" style="left:21px;top:47px;font-size:13px;color:#000;line-height:13px;font-weight:bold;width:54px;text-align:center;line-height:15px;white-space:nowrap;">0 A</div><div class="t" style="left:3px;top:68px;font-size:12.5px;color:#000;line-height:12.5px;line-height:14px;">Ic</div><div style="left:21px;top:68px;width:54px;height:15px;background:#f0ffff;"></div><div class="t" style="left:21px;top:67px;font-size:13px;color:#000;line-height:13px;font-weight:bold;width:54px;text-align:center;line-height:15px;white-space:nowrap;">0 A</div><div class="t" style="left:3px;top:88px;font-size:12.5px;color:#000;line-height:12.5px;line-height:14px;">P</div><div style="left:21px;top:88px;width:54px;height:15px;background:#f0ffff;"></div><div class="t" style="left:21px;top:87px;font-size:13px;color:#000;line-height:13px;font-weight:bold;width:54px;text-align:center;line-height:15px;white-space:nowrap;">0 MW</div><div class="t" style="left:3px;top:108px;font-size:12.5px;color:#000;line-height:12.5px;line-height:14px;">Q</div><div style="left:21px;top:108px;width:54px;height:15px;background:#f0ffff;"></div><div class="t" style="left:21px;top:107px;font-size:13px;color:#000;line-height:13px;font-weight:bold;width:54px;text-align:center;line-height:15px;white-space:nowrap;">0 MVar</div></div><div style="left:114.5px;top:694.5px;width:79.5px;height:129.5px;background:#c2c2c2;overflow:hidden;box-shadow:inset -1px -1px 0 #8a8a8a;"><div style="left:0px;top:0px;width:79.5px;height:24px;background:#98a3b3;"></div><div class="t" style="left:5px;top:1.5px;font-size:13.5px;color:#000;line-height:13.5px;line-height:17px;white-space:nowrap;">Bay 13</div><div style="left:59.0px;top:2px;width:18.5px;height:16px;background:#d0d0d0;box-shadow:inset 1px 1px 0 #f8f8f8,inset -1px -1px 0 #707070;"></div><svg class="abs" style="left:59.0px;top:2px" width="18.5" height="16" viewBox="0 0 18.5 16"><path d="M3.5,3 L15.0,13 M15.0,3 L3.5,13" stroke="#666" stroke-width="1.2"/></svg><div class="t" style="left:3px;top:28px;font-size:12.5px;color:#000;line-height:12.5px;line-height:14px;">Ia</div><div style="left:21px;top:28px;width:54px;height:15px;background:#f0ffff;"></div><div class="t" style="left:21px;top:27px;font-size:13px;color:#000;line-height:13px;font-weight:bold;width:54px;text-align:center;line-height:15px;white-space:nowrap;">112 A</div><div class="t" style="left:3px;top:48px;font-size:12.5px;color:#000;line-height:12.5px;line-height:14px;">Ib</div><div style="left:21px;top:48px;width:54px;height:15px;background:#f0ffff;"></div><div class="t" style="left:21px;top:47px;font-size:13px;color:#000;line-height:13px;font-weight:bold;width:54px;text-align:center;line-height:15px;white-space:nowrap;">113 A</div><div class="t" style="left:3px;top:68px;font-size:12.5px;color:#000;line-height:12.5px;line-height:14px;">Ic</div><div style="left:21px;top:68px;width:54px;height:15px;background:#f0ffff;"></div><div class="t" style="left:21px;top:67px;font-size:13px;color:#000;line-height:13px;font-weight:bold;width:54px;text-align:center;line-height:15px;white-space:nowrap;">114 A</div><div class="t" style="left:3px;top:88px;font-size:12.5px;color:#000;line-height:12.5px;line-height:14px;">P</div><div style="left:21px;top:88px;width:54px;height:15px;background:#f0ffff;"></div><div class="t" style="left:21px;top:87px;font-size:13px;color:#000;line-height:13px;font-weight:bold;width:54px;text-align:center;line-height:15px;white-space:nowrap;">1.2 MW</div><div class="t" style="left:3px;top:108px;font-size:12.5px;color:#000;line-height:12.5px;line-height:14px;">Q</div><div style="left:21px;top:108px;width:54px;height:15px;background:#f0ffff;"></div><div style="left:21px;top:108px;width:54px;height:15px;overflow:hidden;"><div class="t" style="left:2px;top:-1px;font-size:13px;color:#000;line-height:13px;font-weight:bold;line-height:15px;white-space:nowrap;">0.3 MVar</div></div></div><div style="left:229.5px;top:750.5px;width:79.5px;height:129.5px;background:#c2c2c2;overflow:hidden;box-shadow:inset -1px -1px 0 #8a8a8a;"><div style="left:0px;top:0px;width:79.5px;height:24px;background:#98a3b3;"></div><div class="t" style="left:8px;top:1.5px;font-size:13.5px;color:#000;line-height:13.5px;line-height:17px;white-space:nowrap;">Bay 29</div><div style="left:59.0px;top:2px;width:18.5px;height:16px;background:#d0d0d0;box-shadow:inset 1px 1px 0 #f8f8f8,inset -1px -1px 0 #707070;"></div><svg class="abs" style="left:59.0px;top:2px" width="18.5" height="16" viewBox="0 0 18.5 16"><path d="M3.5,3 L15.0,13 M15.0,3 L3.5,13" stroke="#666" stroke-width="1.2"/></svg><div class="t" style="left:3px;top:28px;font-size:12.5px;color:#000;line-height:12.5px;line-height:14px;">Ia</div><div style="left:21px;top:28px;width:54px;height:15px;background:#f0ffff;"></div><div class="t" style="left:21px;top:27px;font-size:13px;color:#000;line-height:13px;font-weight:bold;width:54px;text-align:center;line-height:15px;white-space:nowrap;">51 A</div><div class="t" style="left:3px;top:48px;font-size:12.5px;color:#000;line-height:12.5px;line-height:14px;">Ib</div><div style="left:21px;top:48px;width:54px;height:15px;background:#f0ffff;"></div><div class="t" style="left:21px;top:47px;font-size:13px;color:#000;line-height:13px;font-weight:bold;width:54px;text-align:center;line-height:15px;white-space:nowrap;">48 A</div><div class="t" style="left:3px;top:68px;font-size:12.5px;color:#000;line-height:12.5px;line-height:14px;">Ic</div><div style="left:21px;top:68px;width:54px;height:15px;background:#f0ffff;"></div><div class="t" style="left:21px;top:67px;font-size:13px;color:#000;line-height:13px;font-weight:bold;width:54px;text-align:center;line-height:15px;white-space:nowrap;">52 A</div><div class="t" style="left:3px;top:88px;font-size:12.5px;color:#000;line-height:12.5px;line-height:14px;">P</div><div style="left:21px;top:88px;width:54px;height:15px;background:#f0ffff;"></div><div class="t" style="left:21px;top:87px;font-size:13px;color:#000;line-height:13px;font-weight:bold;width:54px;text-align:center;line-height:15px;white-space:nowrap;">0.6 MW</div><div class="t" style="left:3px;top:108px;font-size:12.5px;color:#000;line-height:12.5px;line-height:14px;">Q</div><div style="left:21px;top:108px;width:54px;height:15px;background:#f0ffff;"></div><div style="left:21px;top:108px;width:54px;height:15px;overflow:hidden;"><div class="t" style="left:2px;top:-1px;font-size:13px;color:#000;line-height:13px;font-weight:bold;line-height:15px;white-space:nowrap;">0.2 MVar</div></div></div><div style="left:169.5px;top:724px;width:79.5px;height:129.5px;background:#c2c2c2;overflow:hidden;box-shadow:inset -1px -1px 0 #8a8a8a;"><div style="left:0px;top:0px;width:79.5px;height:24px;background:#98a3b3;"></div><div class="t" style="left:5px;top:1.5px;font-size:13.5px;color:#000;line-height:13.5px;line-height:17px;white-space:nowrap;">Bay 25</div><div style="left:59.0px;top:2px;width:18.5px;height:16px;background:#d0d0d0;box-shadow:inset 1px 1px 0 #f8f8f8,inset -1px -1px 0 #707070;"></div><svg class="abs" style="left:59.0px;top:2px" width="18.5" height="16" viewBox="0 0 18.5 16"><path d="M3.5,3 L15.0,13 M15.0,3 L3.5,13" stroke="#666" stroke-width="1.2"/></svg><div class="t" style="left:3px;top:28px;font-size:12.5px;color:#000;line-height:12.5px;line-height:14px;">Ia</div><div style="left:21px;top:28px;width:54px;height:15px;background:#c8c8c8;"></div><div class="t" style="left:21px;top:27px;font-size:13px;color:#000;line-height:13px;font-weight:bold;width:54px;text-align:center;line-height:15px;white-space:nowrap;">0 A</div><div class="t" style="left:3px;top:48px;font-size:12.5px;color:#000;line-height:12.5px;line-height:14px;">Ib</div><div style="left:21px;top:48px;width:54px;height:15px;background:#f0ffff;"></div><div class="t" style="left:21px;top:47px;font-size:13px;color:#000;line-height:13px;font-weight:bold;width:54px;text-align:center;line-height:15px;white-space:nowrap;">0 A</div><div class="t" style="left:3px;top:68px;font-size:12.5px;color:#000;line-height:12.5px;line-height:14px;">Ic</div><div style="left:21px;top:68px;width:54px;height:15px;background:#f0ffff;"></div><div class="t" style="left:21px;top:67px;font-size:13px;color:#000;line-height:13px;font-weight:bold;width:54px;text-align:center;line-height:15px;white-space:nowrap;">0 A</div><div class="t" style="left:3px;top:88px;font-size:12.5px;color:#000;line-height:12.5px;line-height:14px;">P</div><div style="left:21px;top:88px;width:54px;height:15px;background:#f0ffff;"></div><div class="t" style="left:21px;top:87px;font-size:13px;color:#000;line-height:13px;font-weight:bold;width:54px;text-align:center;line-height:15px;white-space:nowrap;">0 MW</div><div class="t" style="left:3px;top:108px;font-size:12.5px;color:#000;line-height:12.5px;line-height:14px;">Q</div><div style="left:21px;top:108px;width:54px;height:15px;background:#f0ffff;"></div><div class="t" style="left:21px;top:107px;font-size:13px;color:#000;line-height:13px;font-weight:bold;width:54px;text-align:center;line-height:15px;white-space:nowrap;">0 MVar</div></div>
<div style="left:832.3px;top:105px;width:338.8px;height:456px;background:#b2b2b2;overflow:hidden;box-shadow:inset 1px 1px 0 #d8d8d8,inset -1px -1px 0 #6e6e6e,inset -2px -2px 0 #8c8c8c,inset 2px 2px 0 #c4c4c4;"><div class="t" style="left:3.5px;top:2.5px;font-size:13px;color:#9a0000;line-height:13px;font-weight:bold;line-height:15px;">Bay No.9</div><div style="left:0px;top:21.5px;width:338.8px;height:1px;background:#8c8c8c;"></div><div style="left:0px;top:22.5px;width:338.8px;height:1px;background:#c8c8c8;"></div><div style="left:317.5px;top:2.5px;width:18.5px;height:16px;background:#d0d0d0;box-shadow:inset 1px 1px 0 #f8f8f8,inset -1px -1px 0 #707070;"></div><svg class="abs" style="left:317.5px;top:2.5px" width="18.5" height="16" viewBox="0 0 18.5 16"><path d="M3.5,3 L15.0,13 M15.0,3 L3.5,13" stroke="#777" stroke-width="1.2"/></svg><div style="left:5px;top:24.8px;width:85px;height:110.7px;box-shadow:inset 1px 1px 0 #8a8a8a,inset -1px -1px 0 #555;"></div><div class="t" style="left:11px;top:34px;font-size:12.5px;color:#000;line-height:12.5px;line-height:14px;">Ia</div><div style="left:29px;top:33px;width:54.5px;height:15.5px;background:#f0ffff;"></div><div class="t" style="left:29px;top:33.5px;font-size:13px;color:#000;line-height:13px;font-weight:bold;width:54.5px;text-align:center;line-height:15.5px;white-space:nowrap;">0 A</div><div class="t" style="left:11px;top:54px;font-size:12.5px;color:#000;line-height:12.5px;line-height:14px;">Ib</div><div style="left:29px;top:53px;width:54.5px;height:15.5px;background:#f0ffff;"></div><div class="t" style="left:29px;top:53.5px;font-size:13px;color:#000;line-height:13px;font-weight:bold;width:54.5px;text-align:center;line-height:15.5px;white-space:nowrap;">0 A</div><div class="t" style="left:11px;top:74px;font-size:12.5px;color:#000;line-height:12.5px;line-height:14px;">Ic</div><div style="left:29px;top:73px;width:54.5px;height:15.5px;background:#f0ffff;"></div><div class="t" style="left:29px;top:73.5px;font-size:13px;color:#000;line-height:13px;font-weight:bold;width:54.5px;text-align:center;line-height:15.5px;white-space:nowrap;">0 A</div><div class="t" style="left:11px;top:94px;font-size:12.5px;color:#000;line-height:12.5px;line-height:14px;">P</div><div style="left:29px;top:93px;width:54.5px;height:15.5px;background:#f0ffff;"></div><div class="t" style="left:29px;top:93.5px;font-size:13px;color:#000;line-height:13px;font-weight:bold;width:54.5px;text-align:center;line-height:15.5px;white-space:nowrap;">0 MW</div><div class="t" style="left:11px;top:114px;font-size:12.5px;color:#000;line-height:12.5px;line-height:14px;">Q</div><div style="left:29px;top:113px;width:54.5px;height:15.5px;background:#f0ffff;"></div><div class="t" style="left:29px;top:113.5px;font-size:13px;color:#000;line-height:13px;font-weight:bold;width:54.5px;text-align:center;line-height:15.5px;white-space:nowrap;">0 MW</div><div style="left:95.5px;top:25.5px;width:238px;height:265px;box-shadow:inset 1px 1px 0 #8a8a8a,inset -1px -1px 0 #666;"></div><div style="left:95.5px;top:325.5px;width:238px;height:90px;box-shadow:inset 1px 1px 0 #8a8a8a,inset -1px -1px 0 #666;"></div><div class="t" style="left:229px;top:421.5px;font-size:21px;color:#666;line-height:21px;font-weight:bold;width:100px;text-align:center;line-height:24px;">9</div><svg class="abs" style="left:0;top:0" width="338.8" height="456" viewBox="0 0 338.8 456" font-family="Liberation Sans, sans-serif"><rect x="5.5" y="416" width="90" height="8.5" fill="#ffcc00" /><rect x="5.5" y="440.5" width="90" height="8.5" fill="#b4ee00" /><path d="M39.9,368 L39.9,446" stroke="#d0f550" stroke-width="2" fill="none" /><path d="M62.7,368 L62.7,421" stroke="#ffe84a" stroke-width="2" fill="none" /><circle cx="39.9" cy="445" r="3.2" fill="#d4f870"/><circle cx="62.7" cy="420.5" r="3.2" fill="#ffe878"/><path d="M51.4,165.5 L45.4,177 L57.4,177 Z" fill="#ff30ff"/><path d="M51.4,177 L51.4,203" stroke="#ff40ff" stroke-width="2.2" fill="none" /><path d="M51.4,203 L51.4,250.3" stroke="#d0f550" stroke-width="2.2" fill="none" /><path d="M51.4,270 L51.4,281" stroke="#d0f550" stroke-width="2.2" fill="none" /><circle cx="51.4" cy="185.5" r="5.8" fill="none" stroke="#000000" stroke-width="1.3"/><path d="M57.199999999999996,185.5 L63.4,185.5" stroke="#000000" stroke-width="1.1" fill="none" /><rect x="41.4" y="201.5" width="20.0" height="18.75" fill="#ffa898" /><path d="M43.275,202.75 L52.025,220.25" stroke="#000000" stroke-width="2" fill="none" /><path d="M48.275,203.375 L55.775,203.375" stroke="#000000" stroke-width="2" fill="none" /><path d="M51.4,230 L68.4,230 L68.4,234" stroke="#d0f550" stroke-width="2.2" fill="none" /><rect x="61.9" y="233" width="13" height="11.5" fill="#ffa898" /><path d="M63.4,235 L69.4,246" stroke="#000000" stroke-width="1.8" fill="none" /><path d="M66.4,235 L71.4,235" stroke="#000000" stroke-width="1.6" fill="none" /><path d="M68.4,244 L68.4,248" stroke="#000000" stroke-width="1.4" fill="none" /><path d="M68.4,244 L68.4,250.5" stroke="#000000" stroke-width="1.4" fill="none" /><path d="M61.800000000000004,250.5 L75.0,250.5" stroke="#000000" stroke-width="1.32" fill="none" /><path d="M64.0,253.8 L72.80000000000001,253.8" stroke="#000000" stroke-width="1.32" fill="none" /><path d="M66.2,257.1 L70.60000000000001,257.1" stroke="#000000" stroke-width="1.32" fill="none" /><path d="M51.4,250.3 A12.3,10.4 0 1 0 63.7,260.7 L51.4,260.7 L51.4,272.1" stroke="#d0f550" stroke-width="2.2" fill="none" stroke-linejoin="round"/><rect x="48.199999999999996" y="279.42" width="6.4" height="14.08" fill="#c0c0c0" /><rect x="49.48" y="279.42" width="3.84" height="14.08" fill="#98f898" /><path d="M45.0,283.26 A6.4,7.04 0 0 1 57.8,283.26" stroke="#000000" stroke-width="1.25" fill="none"/><rect x="48.199999999999996" y="319.1" width="6.4" height="14.08" fill="#c0c0c0" /><rect x="49.48" y="319.1" width="3.84" height="14.08" fill="#98f898" /><path d="M45.0,328.70000000000005 A6.4,7.04 0 0 0 57.8,328.70000000000005" stroke="#000000" stroke-width="1.25" fill="none"/><rect x="38.46" y="294.0" width="25.88" height="24.6" fill="#00ee00" stroke="#000000" stroke-width="1.536" /><path d="M51.4,290.94 L51.4,321.66" stroke="#000000" stroke-width="2.56" fill="none" /><path d="M46.92,292.86 L55.879999999999995,301.18" stroke="#000000" stroke-width="1.25" fill="none" /><path d="M55.879999999999995,292.86 L46.92,301.18" stroke="#000000" stroke-width="1.25" fill="none" /><path d="M51.4,331 L51.4,341 L39.9,341 L39.9,352" stroke="#d0f550" stroke-width="2.2" fill="none" /><path d="M51.4,341 L62.7,341 L62.7,352" stroke="#d0f550" stroke-width="2.2" fill="none" /><rect x="29.9" y="351" width="20.0" height="18.75" fill="#98f898" /><path d="M39.9,349.75 L39.9,369.75" stroke="#000000" stroke-width="2" fill="none" /><path d="M36.15,352.5 L43.65,352.5" stroke="#000000" stroke-width="2" fill="none" /><rect x="52.7" y="351" width="20.0" height="18.75" fill="#ffa898" /><path d="M54.575,352.25 L63.325,369.75" stroke="#000000" stroke-width="2" fill="none" /><path d="M59.575,352.875 L67.075,352.875" stroke="#000000" stroke-width="2" fill="none" /><text x="33.5" y="214" font-size="14.3" fill="#000" text-anchor="start" transform="rotate(-90 33.5 214)"  textLength="21.1" lengthAdjust="spacingAndGlyphs">KL9</text><text x="33.5" y="245" font-size="14.3" fill="#000" text-anchor="middle" transform="rotate(-90 33.5 245)"  textLength="23.1" lengthAdjust="spacingAndGlyphs">ML9</text><text x="23" y="349.5" font-size="13.4" fill="#000" text-anchor="end" transform="rotate(-90 23 349.5)"  textLength="35.8" lengthAdjust="spacingAndGlyphs">LL9-1s</text><text x="91" y="349.5" font-size="13.4" fill="#000" text-anchor="end" transform="rotate(-90 91 349.5)"  textLength="35.2" lengthAdjust="spacingAndGlyphs">LL9-Ts</text><text x="75" y="312" font-size="14.5" fill="#000" font-weight="bold" text-anchor="start" >VL9</text></svg></div><div style="left:918.2px;top:83.3px;width:338.8px;height:456px;background:#b2b2b2;overflow:hidden;box-shadow:inset 1px 1px 0 #d8d8d8,inset -1px -1px 0 #6e6e6e,inset -2px -2px 0 #8c8c8c,inset 2px 2px 0 #c4c4c4;"><div class="t" style="left:3.5px;top:2.5px;font-size:13px;color:#9a0000;line-height:13px;font-weight:bold;line-height:15px;">Bay No.17</div><div style="left:0px;top:21.5px;width:338.8px;height:1px;background:#8c8c8c;"></div><div style="left:0px;top:22.5px;width:338.8px;height:1px;background:#c8c8c8;"></div><div style="left:317.5px;top:2.5px;width:18.5px;height:16px;background:#d0d0d0;box-shadow:inset 1px 1px 0 #f8f8f8,inset -1px -1px 0 #707070;"></div><svg class="abs" style="left:317.5px;top:2.5px" width="18.5" height="16" viewBox="0 0 18.5 16"><path d="M3.5,3 L15.0,13 M15.0,3 L3.5,13" stroke="#777" stroke-width="1.2"/></svg><div style="left:5px;top:24.8px;width:85px;height:110.7px;box-shadow:inset 1px 1px 0 #8a8a8a,inset -1px -1px 0 #555;"></div><div class="t" style="left:11px;top:34px;font-size:12.5px;color:#000;line-height:12.5px;line-height:14px;">Ia</div><div style="left:29px;top:33px;width:54.5px;height:15.5px;background:#f0ffff;"></div><div class="t" style="left:29px;top:33.5px;font-size:13px;color:#000;line-height:13px;font-weight:bold;width:54.5px;text-align:center;line-height:15.5px;white-space:nowrap;">187 A</div><div class="t" style="left:11px;top:54px;font-size:12.5px;color:#000;line-height:12.5px;line-height:14px;">Ib</div><div style="left:29px;top:53px;width:54.5px;height:15.5px;background:#f0ffff;"></div><div class="t" style="left:29px;top:53.5px;font-size:13px;color:#000;line-height:13px;font-weight:bold;width:54.5px;text-align:center;line-height:15.5px;white-space:nowrap;">190 A</div><div class="t" style="left:11px;top:74px;font-size:12.5px;color:#000;line-height:12.5px;line-height:14px;">Ic</div><div style="left:29px;top:73px;width:54.5px;height:15.5px;background:#f0ffff;"></div><div class="t" style="left:29px;top:73.5px;font-size:13px;color:#000;line-height:13px;font-weight:bold;width:54.5px;text-align:center;line-height:15.5px;white-space:nowrap;">185 A</div><div class="t" style="left:11px;top:94px;font-size:12.5px;color:#000;line-height:12.5px;line-height:14px;">P</div><div style="left:29px;top:93px;width:54.5px;height:15.5px;background:#f0ffff;"></div><div class="t" style="left:29px;top:93.5px;font-size:13px;color:#000;line-height:13px;font-weight:bold;width:54.5px;text-align:center;line-height:15.5px;white-space:nowrap;">2.1 MW</div><div class="t" style="left:11px;top:114px;font-size:12.5px;color:#000;line-height:12.5px;line-height:14px;">Q</div><div style="left:29px;top:113px;width:54.5px;height:15.5px;background:#f0ffff;"></div><div class="t" style="left:29px;top:113.5px;font-size:13px;color:#000;line-height:13px;font-weight:bold;width:54.5px;text-align:center;line-height:15.5px;white-space:nowrap;">0.6 MW</div><div style="left:95.5px;top:25.5px;width:238px;height:265px;box-shadow:inset 1px 1px 0 #8a8a8a,inset -1px -1px 0 #666;"></div><div style="left:95.5px;top:325.5px;width:238px;height:90px;box-shadow:inset 1px 1px 0 #8a8a8a,inset -1px -1px 0 #666;"></div><div class="t" style="left:229px;top:421.5px;font-size:21px;color:#666;line-height:21px;font-weight:bold;width:100px;text-align:center;line-height:24px;">17</div><svg class="abs" style="left:0;top:0" width="338.8" height="456" viewBox="0 0 338.8 456" font-family="Liberation Sans, sans-serif"><rect x="5.5" y="416" width="90" height="8.5" fill="#ffcc00" /><rect x="5.5" y="440.5" width="90" height="8.5" fill="#b4ee00" /><path d="M39.9,368 L39.9,446" stroke="#d0f550" stroke-width="2" fill="none" /><path d="M62.7,368 L62.7,421" stroke="#ffe84a" stroke-width="2" fill="none" /><circle cx="39.9" cy="445" r="3.2" fill="#d4f870"/><circle cx="62.7" cy="420.5" r="3.2" fill="#ffe878"/><path d="M51.4,165.5 L45.4,177 L57.4,177 Z" fill="#c8f000"/><path d="M51.4,177 L51.4,203" stroke="#d0f550" stroke-width="2.2" fill="none" /><path d="M51.4,203 L51.4,250.3" stroke="#d0f550" stroke-width="2.2" fill="none" /><path d="M51.4,270 L51.4,281" stroke="#d0f550" stroke-width="2.2" fill="none" /><circle cx="51.4" cy="185.5" r="5.8" fill="none" stroke="#000000" stroke-width="1.3"/><path d="M57.199999999999996,185.5 L63.4,185.5" stroke="#000000" stroke-width="1.1" fill="none" /><rect x="41.4" y="201.5" width="20.0" height="18.75" fill="#98f898" /><path d="M51.4,200.25 L51.4,220.25" stroke="#000000" stroke-width="2" fill="none" /><path d="M47.65,203.0 L55.15,203.0" stroke="#000000" stroke-width="2" fill="none" /><path d="M51.4,230 L68.4,230 L68.4,234" stroke="#d0f550" stroke-width="2.2" fill="none" /><rect x="61.9" y="233" width="13" height="11.5" fill="#ffa898" /><path d="M63.4,235 L69.4,246" stroke="#000000" stroke-width="1.8" fill="none" /><path d="M66.4,235 L71.4,235" stroke="#000000" stroke-width="1.6" fill="none" /><path d="M68.4,244 L68.4,248" stroke="#000000" stroke-width="1.4" fill="none" /><path d="M68.4,244 L68.4,250.5" stroke="#000000" stroke-width="1.4" fill="none" /><path d="M61.800000000000004,250.5 L75.0,250.5" stroke="#000000" stroke-width="1.32" fill="none" /><path d="M64.0,253.8 L72.80000000000001,253.8" stroke="#000000" stroke-width="1.32" fill="none" /><path d="M66.2,257.1 L70.60000000000001,257.1" stroke="#000000" stroke-width="1.32" fill="none" /><path d="M51.4,250.3 A12.3,10.4 0 1 0 63.7,260.7 L51.4,260.7 L51.4,272.1" stroke="#d0f550" stroke-width="2.2" fill="none" stroke-linejoin="round"/><rect x="48.199999999999996" y="279.42" width="6.4" height="14.08" fill="#c0c0c0" /><rect x="49.48" y="279.42" width="3.84" height="14.08" fill="#98f898" /><path d="M45.0,283.26 A6.4,7.04 0 0 1 57.8,283.26" stroke="#000000" stroke-width="1.25" fill="none"/><rect x="48.199999999999996" y="319.1" width="6.4" height="14.08" fill="#c0c0c0" /><rect x="49.48" y="319.1" width="3.84" height="14.08" fill="#98f898" /><path d="M45.0,328.70000000000005 A6.4,7.04 0 0 0 57.8,328.70000000000005" stroke="#000000" stroke-width="1.25" fill="none"/><rect x="38.46" y="294.0" width="25.88" height="24.6" fill="#00ee00" stroke="#000000" stroke-width="1.536" /><path d="M51.4,290.94 L51.4,321.66" stroke="#000000" stroke-width="2.56" fill="none" /><path d="M46.92,292.86 L55.879999999999995,301.18" stroke="#000000" stroke-width="1.25" fill="none" /><path d="M55.879999999999995,292.86 L46.92,301.18" stroke="#000000" stroke-width="1.25" fill="none" /><path d="M51.4,331 L51.4,341 L39.9,341 L39.9,352" stroke="#d0f550" stroke-width="2.2" fill="none" /><path d="M51.4,341 L62.7,341 L62.7,352" stroke="#d0f550" stroke-width="2.2" fill="none" /><rect x="29.9" y="351" width="20.0" height="18.75" fill="#98f898" /><path d="M39.9,349.75 L39.9,369.75" stroke="#000000" stroke-width="2" fill="none" /><path d="M36.15,352.5 L43.65,352.5" stroke="#000000" stroke-width="2" fill="none" /><rect x="52.7" y="351" width="20.0" height="18.75" fill="#ffa898" /><path d="M54.575,352.25 L63.325,369.75" stroke="#000000" stroke-width="2" fill="none" /><path d="M59.575,352.875 L67.075,352.875" stroke="#000000" stroke-width="2" fill="none" /><text x="33.5" y="214" font-size="14.3" fill="#000" text-anchor="start" transform="rotate(-90 33.5 214)"  textLength="27.7" lengthAdjust="spacingAndGlyphs">KL17</text><text x="33.5" y="245" font-size="14.3" fill="#000" text-anchor="middle" transform="rotate(-90 33.5 245)"  textLength="29.7" lengthAdjust="spacingAndGlyphs">ML17</text><text x="23" y="349.5" font-size="13.4" fill="#000" text-anchor="end" transform="rotate(-90 23 349.5)"  textLength="42.4" lengthAdjust="spacingAndGlyphs">LL17-1s</text><text x="91" y="349.5" font-size="13.4" fill="#000" text-anchor="end" transform="rotate(-90 91 349.5)"  textLength="41.7" lengthAdjust="spacingAndGlyphs">LL17-Ts</text><text x="75" y="312" font-size="14.5" fill="#000" font-weight="bold" text-anchor="start" >VL17</text></svg></div><div style="left:1009px;top:61px;width:338.8px;height:456px;background:#b2b2b2;overflow:hidden;box-shadow:inset 1px 1px 0 #d8d8d8,inset -1px -1px 0 #6e6e6e,inset -2px -2px 0 #8c8c8c,inset 2px 2px 0 #c4c4c4;"><div class="t" style="left:3.5px;top:2.5px;font-size:13px;color:#9a0000;line-height:13px;font-weight:bold;line-height:15px;">Bay No.19</div><div style="left:0px;top:21.5px;width:338.8px;height:1px;background:#8c8c8c;"></div><div style="left:0px;top:22.5px;width:338.8px;height:1px;background:#c8c8c8;"></div><div style="left:317.5px;top:2.5px;width:18.5px;height:16px;background:#d0d0d0;box-shadow:inset 1px 1px 0 #f8f8f8,inset -1px -1px 0 #707070;"></div><svg class="abs" style="left:317.5px;top:2.5px" width="18.5" height="16" viewBox="0 0 18.5 16"><path d="M3.5,3 L15.0,13 M15.0,3 L3.5,13" stroke="#777" stroke-width="1.2"/></svg><div style="left:5px;top:24.8px;width:85px;height:110.7px;box-shadow:inset 1px 1px 0 #8a8a8a,inset -1px -1px 0 #555;"></div><div class="t" style="left:11px;top:34px;font-size:12.5px;color:#000;line-height:12.5px;line-height:14px;">Ia</div><div style="left:29px;top:33px;width:54.5px;height:15.5px;background:#c8c8c8;"></div><div class="t" style="left:29px;top:33.5px;font-size:13px;color:#000;line-height:13px;font-weight:bold;width:54.5px;text-align:center;line-height:15.5px;white-space:nowrap;">0 A</div><div class="t" style="left:11px;top:54px;font-size:12.5px;color:#000;line-height:12.5px;line-height:14px;">Ib</div><div style="left:29px;top:53px;width:54.5px;height:15.5px;background:#f0ffff;"></div><div class="t" style="left:29px;top:53.5px;font-size:13px;color:#000;line-height:13px;font-weight:bold;width:54.5px;text-align:center;line-height:15.5px;white-space:nowrap;">0 A</div><div class="t" style="left:11px;top:74px;font-size:12.5px;color:#000;line-height:12.5px;line-height:14px;">Ic</div><div style="left:29px;top:73px;width:54.5px;height:15.5px;background:#f0ffff;"></div><div class="t" style="left:29px;top:73.5px;font-size:13px;color:#000;line-height:13px;font-weight:bold;width:54.5px;text-align:center;line-height:15.5px;white-space:nowrap;">0 A</div><div class="t" style="left:11px;top:94px;font-size:12.5px;color:#000;line-height:12.5px;line-height:14px;">P</div><div style="left:29px;top:93px;width:54.5px;height:15.5px;background:#f0ffff;"></div><div class="t" style="left:29px;top:93.5px;font-size:13px;color:#000;line-height:13px;font-weight:bold;width:54.5px;text-align:center;line-height:15.5px;white-space:nowrap;">0 MW</div><div class="t" style="left:11px;top:114px;font-size:12.5px;color:#000;line-height:12.5px;line-height:14px;">Q</div><div style="left:29px;top:113px;width:54.5px;height:15.5px;background:#f0ffff;"></div><div class="t" style="left:29px;top:113.5px;font-size:13px;color:#000;line-height:13px;font-weight:bold;width:54.5px;text-align:center;line-height:15.5px;white-space:nowrap;">0 MW</div><div style="left:95.5px;top:25.5px;width:238px;height:265px;box-shadow:inset 1px 1px 0 #8a8a8a,inset -1px -1px 0 #666;"></div><div style="left:95.5px;top:325.5px;width:238px;height:90px;box-shadow:inset 1px 1px 0 #8a8a8a,inset -1px -1px 0 #666;"></div><div class="t" style="left:229px;top:421.5px;font-size:21px;color:#666;line-height:21px;font-weight:bold;width:100px;text-align:center;line-height:24px;">19</div><svg class="abs" style="left:0;top:0" width="338.8" height="456" viewBox="0 0 338.8 456" font-family="Liberation Sans, sans-serif"><rect x="5.5" y="416" width="90" height="8.5" fill="#ffcc00" /><rect x="5.5" y="440.5" width="90" height="8.5" fill="#b4ee00" /><path d="M39.9,368 L39.9,446" stroke="#d0f550" stroke-width="2" fill="none" /><path d="M62.7,368 L62.7,421" stroke="#ffe84a" stroke-width="2" fill="none" /><circle cx="39.9" cy="445" r="3.2" fill="#d4f870"/><circle cx="62.7" cy="420.5" r="3.2" fill="#ffe878"/><path d="M51.4,166.5 L45.9,177 L56.9,177 Z" fill="#a8a8a8" stroke="#222" stroke-width="1.2"/><path d="M51.4,177 L51.4,203" stroke="#000000" stroke-width="2.6" fill="none" /><path d="M51.4,203 L51.4,250.3" stroke="#000000" stroke-width="2.6" fill="none" /><path d="M51.4,270 L51.4,281" stroke="#000000" stroke-width="2.6" fill="none" /><circle cx="51.4" cy="185.5" r="5.8" fill="none" stroke="#000000" stroke-width="1.3"/><path d="M57.199999999999996,185.5 L63.4,185.5" stroke="#000000" stroke-width="1.1" fill="none" /><rect x="41.4" y="201.5" width="20.0" height="18.75" fill="#98f898" /><path d="M51.4,200.25 L51.4,220.25" stroke="#000000" stroke-width="2" fill="none" /><path d="M47.65,203.0 L55.15,203.0" stroke="#000000" stroke-width="2" fill="none" /><path d="M51.4,230 L68.4,230 L68.4,234" stroke="#000000" stroke-width="2.6" fill="none" /><rect x="61.9" y="233" width="13" height="11.5" fill="#98f898" /><path d="M68.4,233 L68.4,248" stroke="#000000" stroke-width="1.8" fill="none" /><path d="M65.4,235 L71.4,235" stroke="#000000" stroke-width="1.6" fill="none" /><path d="M68.4,244 L68.4,250.5" stroke="#000000" stroke-width="1.4" fill="none" /><path d="M61.800000000000004,250.5 L75.0,250.5" stroke="#000000" stroke-width="1.32" fill="none" /><path d="M64.0,253.8 L72.80000000000001,253.8" stroke="#000000" stroke-width="1.32" fill="none" /><path d="M66.2,257.1 L70.60000000000001,257.1" stroke="#000000" stroke-width="1.32" fill="none" /><path d="M51.4,250.3 A12.3,10.4 0 1 0 63.7,260.7 L51.4,260.7 L51.4,272.1" stroke="#000000" stroke-width="2.6" fill="none" stroke-linejoin="round"/><rect x="48.199999999999996" y="279.42" width="6.4" height="14.08" fill="#c0c0c0" /><rect x="49.48" y="279.42" width="3.84" height="14.08" fill="#ffa898" /><path d="M45.0,283.26 A6.4,7.04 0 0 1 57.8,283.26" stroke="#000000" stroke-width="1.25" fill="none"/><rect x="48.199999999999996" y="319.1" width="6.4" height="14.08" fill="#c0c0c0" /><rect x="49.48" y="319.1" width="3.84" height="14.08" fill="#ffa898" /><path d="M45.0,328.70000000000005 A6.4,7.04 0 0 0 57.8,328.70000000000005" stroke="#000000" stroke-width="1.25" fill="none"/><rect x="37.96" y="293.5" width="26.88" height="25.6" fill="#ffa898" /><path d="M41.16,294.78 L52.04,319.1" stroke="#000000" stroke-width="2.56" fill="none" /><path d="M46.92,292.86 L55.879999999999995,301.18" stroke="#000000" stroke-width="1.25" fill="none" /><path d="M55.879999999999995,292.86 L46.92,301.18" stroke="#000000" stroke-width="1.25" fill="none" /><path d="M51.4,331 L51.4,341 L39.9,341 L39.9,352" stroke="#d0f550" stroke-width="2.2" fill="none" /><path d="M51.4,341 L62.7,341 L62.7,352" stroke="#d0f550" stroke-width="2.2" fill="none" /><rect x="29.9" y="351" width="20.0" height="18.75" fill="#98f898" /><path d="M39.9,349.75 L39.9,369.75" stroke="#000000" stroke-width="2" fill="none" /><path d="M36.15,352.5 L43.65,352.5" stroke="#000000" stroke-width="2" fill="none" /><rect x="52.7" y="351" width="20.0" height="18.75" fill="#ffa898" /><path d="M54.575,352.25 L63.325,369.75" stroke="#000000" stroke-width="2" fill="none" /><path d="M59.575,352.875 L67.075,352.875" stroke="#000000" stroke-width="2" fill="none" /><text x="33.5" y="214" font-size="14.3" fill="#000" text-anchor="start" transform="rotate(-90 33.5 214)"  textLength="27.7" lengthAdjust="spacingAndGlyphs">KL19</text><text x="33.5" y="245" font-size="14.3" fill="#000" text-anchor="middle" transform="rotate(-90 33.5 245)"  textLength="29.7" lengthAdjust="spacingAndGlyphs">ML19</text><text x="23" y="349.5" font-size="13.4" fill="#000" text-anchor="end" transform="rotate(-90 23 349.5)"  textLength="42.4" lengthAdjust="spacingAndGlyphs">LL19-1s</text><text x="91" y="349.5" font-size="13.4" fill="#000" text-anchor="end" transform="rotate(-90 91 349.5)"  textLength="41.7" lengthAdjust="spacingAndGlyphs">LL19-Ts</text><text x="75" y="312" font-size="14.5" fill="#000" font-weight="bold" text-anchor="start" >VL19</text></svg></div><div style="left:1095.4px;top:35px;width:338.8px;height:456px;background:#b2b2b2;overflow:hidden;box-shadow:inset 1px 1px 0 #d8d8d8,inset -1px -1px 0 #6e6e6e,inset -2px -2px 0 #8c8c8c,inset 2px 2px 0 #c4c4c4;"><div class="t" style="left:3.5px;top:2.5px;font-size:13px;color:#9a0000;line-height:13px;font-weight:bold;line-height:15px;">Bay No.23</div><div style="left:0px;top:21.5px;width:338.8px;height:1px;background:#8c8c8c;"></div><div style="left:0px;top:22.5px;width:338.8px;height:1px;background:#c8c8c8;"></div><div style="left:317.5px;top:2.5px;width:18.5px;height:16px;background:#d0d0d0;box-shadow:inset 1px 1px 0 #f8f8f8,inset -1px -1px 0 #707070;"></div><svg class="abs" style="left:317.5px;top:2.5px" width="18.5" height="16" viewBox="0 0 18.5 16"><path d="M3.5,3 L15.0,13 M15.0,3 L3.5,13" stroke="#777" stroke-width="1.2"/></svg><div style="left:5px;top:24.8px;width:85px;height:110.7px;box-shadow:inset 1px 1px 0 #8a8a8a,inset -1px -1px 0 #555;"></div><div class="t" style="left:11px;top:34px;font-size:12.5px;color:#000;line-height:12.5px;line-height:14px;">Ia</div><div style="left:29px;top:33px;width:54.5px;height:15.5px;background:#ffff66;"></div><div class="t" style="left:29px;top:33.5px;font-size:13px;color:#000;line-height:13px;font-weight:bold;width:54.5px;text-align:center;line-height:15.5px;white-space:nowrap;">9 A</div><div class="t" style="left:11px;top:54px;font-size:12.5px;color:#000;line-height:12.5px;line-height:14px;">Ib</div><div style="left:29px;top:53px;width:54.5px;height:15.5px;background:#f0ffff;"></div><div class="t" style="left:29px;top:53.5px;font-size:13px;color:#000;line-height:13px;font-weight:bold;width:54.5px;text-align:center;line-height:15.5px;white-space:nowrap;">12 A</div><div class="t" style="left:11px;top:74px;font-size:12.5px;color:#000;line-height:12.5px;line-height:14px;">Ic</div><div style="left:29px;top:73px;width:54.5px;height:15.5px;background:#f0ffff;"></div><div class="t" style="left:29px;top:73.5px;font-size:13px;color:#000;line-height:13px;font-weight:bold;width:54.5px;text-align:center;line-height:15.5px;white-space:nowrap;">7 A</div><div class="t" style="left:11px;top:94px;font-size:12.5px;color:#000;line-height:12.5px;line-height:14px;">P</div><div style="left:29px;top:93px;width:54.5px;height:15.5px;background:#f0ffff;"></div><div class="t" style="left:29px;top:93.5px;font-size:13px;color:#000;line-height:13px;font-weight:bold;width:54.5px;text-align:center;line-height:15.5px;white-space:nowrap;">0.1 MW</div><div class="t" style="left:11px;top:114px;font-size:12.5px;color:#000;line-height:12.5px;line-height:14px;">Q</div><div style="left:29px;top:113px;width:54.5px;height:15.5px;background:#f0ffff;"></div><div class="t" style="left:29px;top:113.5px;font-size:13px;color:#000;line-height:13px;font-weight:bold;width:54.5px;text-align:center;line-height:15.5px;white-space:nowrap;">0 MW</div><div style="left:95.5px;top:25.5px;width:238px;height:265px;box-shadow:inset 1px 1px 0 #8a8a8a,inset -1px -1px 0 #666;"></div><div class="t" style="left:104px;top:26px;font-size:15.5px;color:#000;line-height:15.5px;line-height:18px;white-space:nowrap;transform-origin:0 0;transform:scaleX(1.16);">Alarm and indication signals</div><div class="t" style="left:104px;top:52px;font-size:13.6px;color:#ff0000;line-height:13.6px;font-weight:bold;line-height:15px;white-space:pre;">Failure of feeder terminal</div><div class="t" style="left:104px;top:73px;font-size:13.6px;color:#c4c4c4;line-height:13.6px;font-weight:bold;line-height:15px;white-space:pre;">Feeder protection operated</div><div class="t" style="left:104px;top:93px;font-size:13.6px;color:#ff0000;line-height:13.6px;font-weight:bold;line-height:15px;white-space:pre;">Failure of feeder protection</div><div class="t" style="left:104px;top:118px;font-size:12.8px;color:#fff;line-height:12.8px;line-height:15px;white-space:pre;">Overcurrent protection low I&gt;</div><div class="t" style="left:104px;top:138px;font-size:12.8px;color:#fff;line-height:12.8px;line-height:15px;white-space:pre;">Overcurrent protection high I&gt;&gt;</div><div class="t" style="left:104px;top:158px;font-size:12.8px;color:#ff0000;line-height:12.8px;line-height:15px;white-space:pre;">Earth-fault directional low Io&gt;</div><div class="t" style="left:104px;top:178px;font-size:12.8px;color:#ff0000;line-height:12.8px;line-height:15px;white-space:pre;">Earth-fault directional  high Io&gt;&gt;</div><div class="t" style="left:104px;top:203px;font-size:12.8px;color:#ff0000;line-height:12.8px;line-height:15px;white-space:pre;">AR unsuccessful</div><div class="t" style="left:104px;top:223px;font-size:12.8px;color:#ff0000;line-height:12.8px;line-height:15px;white-space:pre;">AR operated</div><div class="t" style="left:104px;top:248px;font-size:12.8px;color:#fff;line-height:12.8px;line-height:15px;white-space:pre;">CB drive blocked</div><div class="t" style="left:104px;top:268px;font-size:12.8px;color:#fff;line-height:12.8px;line-height:15px;white-space:pre;">CB fault</div><div style="left:95.5px;top:325.5px;width:238px;height:90px;box-shadow:inset 1px 1px 0 #8a8a8a,inset -1px -1px 0 #666;"></div><div style="left:101.5px;top:340.5px;width:225.5px;height:20px;background:#d0d0d0;box-shadow:inset 1px 1px 0 #888,inset -1px -1px 0 #fff,inset 2px 2px 0 #b0b0b0;"></div><div class="t" style="left:101.5px;top:342.5px;font-size:14.5px;color:#a03070;line-height:14.5px;font-weight:bold;width:225.5px;text-align:center;line-height:16px;">AR on</div><div style="left:101.5px;top:365.5px;width:225.5px;height:20px;background:#d0d0d0;box-shadow:inset 1px 1px 0 #888,inset -1px -1px 0 #fff,inset 2px 2px 0 #b0b0b0;"></div><div class="t" style="left:101.5px;top:367.5px;font-size:14.5px;color:#009a00;line-height:14.5px;font-weight:bold;width:225.5px;text-align:center;line-height:16px;">Relay setting group:A</div><div style="left:101.5px;top:388.5px;width:225.5px;height:20px;background:#d0d0d0;box-shadow:inset 1px 1px 0 #888,inset -1px -1px 0 #fff,inset 2px 2px 0 #b0b0b0;"></div><div class="t" style="left:101.5px;top:390.5px;font-size:14.5px;color:#a03070;line-height:14.5px;font-weight:bold;width:225.5px;text-align:center;line-height:16px;">Feeder control: Remote</div><div class="t" style="left:229px;top:421.5px;font-size:21px;color:#666;line-height:21px;font-weight:bold;width:100px;text-align:center;line-height:24px;">23</div><svg class="abs" style="left:0;top:0" width="338.8" height="456" viewBox="0 0 338.8 456" font-family="Liberation Sans, sans-serif"><rect x="5.5" y="416" width="90" height="8.5" fill="#ffcc00" /><rect x="5.5" y="440.5" width="90" height="8.5" fill="#b4ee00" /><path d="M39.9,368 L39.9,446" stroke="#d0f550" stroke-width="2" fill="none" /><path d="M62.7,368 L62.7,421" stroke="#ffe84a" stroke-width="2" fill="none" /><circle cx="39.9" cy="445" r="3.2" fill="#d4f870"/><circle cx="62.7" cy="420.5" r="3.2" fill="#ffe878"/><path d="M51.4,165.5 L45.4,177 L57.4,177 Z" fill="#c8f000"/><path d="M51.4,177 L51.4,203" stroke="#d0f550" stroke-width="2.2" fill="none" /><path d="M51.4,203 L51.4,250.3" stroke="#d0f550" stroke-width="2.2" fill="none" /><path d="M51.4,270 L51.4,281" stroke="#d0f550" stroke-width="2.2" fill="none" /><circle cx="51.4" cy="185.5" r="5.8" fill="none" stroke="#000000" stroke-width="1.3"/><path d="M57.199999999999996,185.5 L63.4,185.5" stroke="#000000" stroke-width="1.1" fill="none" /><rect x="41.4" y="201.5" width="20.0" height="18.75" fill="#98f898" /><path d="M51.4,200.25 L51.4,220.25" stroke="#000000" stroke-width="2" fill="none" /><path d="M47.65,203.0 L55.15,203.0" stroke="#000000" stroke-width="2" fill="none" /><path d="M51.4,230 L68.4,230 L68.4,234" stroke="#d0f550" stroke-width="2.2" fill="none" /><rect x="61.9" y="233" width="13" height="11.5" fill="#ffa898" /><path d="M63.4,235 L69.4,246" stroke="#000000" stroke-width="1.8" fill="none" /><path d="M66.4,235 L71.4,235" stroke="#000000" stroke-width="1.6" fill="none" /><path d="M68.4,244 L68.4,248" stroke="#000000" stroke-width="1.4" fill="none" /><path d="M68.4,244 L68.4,250.5" stroke="#000000" stroke-width="1.4" fill="none" /><path d="M61.800000000000004,250.5 L75.0,250.5" stroke="#000000" stroke-width="1.32" fill="none" /><path d="M64.0,253.8 L72.80000000000001,253.8" stroke="#000000" stroke-width="1.32" fill="none" /><path d="M66.2,257.1 L70.60000000000001,257.1" stroke="#000000" stroke-width="1.32" fill="none" /><path d="M51.4,250.3 A12.3,10.4 0 1 0 63.7,260.7 L51.4,260.7 L51.4,272.1" stroke="#d0f550" stroke-width="2.2" fill="none" stroke-linejoin="round"/><rect x="48.199999999999996" y="279.42" width="6.4" height="14.08" fill="#c0c0c0" /><rect x="49.48" y="279.42" width="3.84" height="14.08" fill="#98f898" /><path d="M45.0,283.26 A6.4,7.04 0 0 1 57.8,283.26" stroke="#000000" stroke-width="1.25" fill="none"/><rect x="48.199999999999996" y="319.1" width="6.4" height="14.08" fill="#c0c0c0" /><rect x="49.48" y="319.1" width="3.84" height="14.08" fill="#98f898" /><path d="M45.0,328.70000000000005 A6.4,7.04 0 0 0 57.8,328.70000000000005" stroke="#000000" stroke-width="1.25" fill="none"/><rect x="38.46" y="294.0" width="25.88" height="24.6" fill="#00ee00" stroke="#000000" stroke-width="1.536" /><path d="M51.4,290.94 L51.4,321.66" stroke="#000000" stroke-width="2.56" fill="none" /><path d="M46.92,292.86 L55.879999999999995,301.18" stroke="#000000" stroke-width="1.25" fill="none" /><path d="M55.879999999999995,292.86 L46.92,301.18" stroke="#000000" stroke-width="1.25" fill="none" /><path d="M51.4,331 L51.4,341 L39.9,341 L39.9,352" stroke="#d0f550" stroke-width="2.2" fill="none" /><path d="M51.4,341 L62.7,341 L62.7,352" stroke="#d0f550" stroke-width="2.2" fill="none" /><rect x="29.9" y="351" width="20.0" height="18.75" fill="#98f898" /><path d="M39.9,349.75 L39.9,369.75" stroke="#000000" stroke-width="2" fill="none" /><path d="M36.15,352.5 L43.65,352.5" stroke="#000000" stroke-width="2" fill="none" /><rect x="52.7" y="351" width="20.0" height="18.75" fill="#ffa898" /><path d="M54.575,352.25 L63.325,369.75" stroke="#000000" stroke-width="2" fill="none" /><path d="M59.575,352.875 L67.075,352.875" stroke="#000000" stroke-width="2" fill="none" /><text x="33.5" y="214" font-size="14.3" fill="#000" text-anchor="start" transform="rotate(-90 33.5 214)"  textLength="27.7" lengthAdjust="spacingAndGlyphs">KL23</text><text x="33.5" y="245" font-size="14.3" fill="#000" text-anchor="middle" transform="rotate(-90 33.5 245)"  textLength="29.7" lengthAdjust="spacingAndGlyphs">ML23</text><text x="23" y="349.5" font-size="13.4" fill="#000" text-anchor="end" transform="rotate(-90 23 349.5)"  textLength="42.4" lengthAdjust="spacingAndGlyphs">LL23-1s</text><text x="91" y="349.5" font-size="13.4" fill="#000" text-anchor="end" transform="rotate(-90 91 349.5)"  textLength="41.7" lengthAdjust="spacingAndGlyphs">LL23-Ts</text><text x="75" y="312" font-size="14.5" fill="#000" font-weight="bold" text-anchor="start" >VL23</text></svg></div>
<div style="left:4px;top:123px;width:404px;height:289px;background:#e0e0e0;overflow:hidden;"><div style="left:0px;top:0px;width:404px;height:34px;background:#c3cedf;"></div><div class="t" style="left:0.5px;top:5.5px;font-size:23px;color:#000;line-height:23px;font-weight:bold;line-height:28px;white-space:nowrap;">Power total</div><svg class="abs" style="left:273px;top:2px" width="26" height="28" viewBox="0 0 26 28"><path d="M13,1.5 L17.5,7 L14.8,7 L14.8,12.2 L19.5,12.2 L19.5,9.5 L24.5,14 L19.5,18.5 L19.5,15.8 L14.8,15.8 L14.8,21 L17.5,21 L13,26.5 L8.5,21 L11.2,21 L11.2,15.8 L6.5,15.8 L6.5,18.5 L1.5,14 L6.5,9.5 L6.5,12.2 L11.2,12.2 L11.2,7 L8.5,7 Z" fill="#fff" stroke="#000" stroke-width="1.1"/></svg><div style="left:300.4px;top:2.3px;width:24.6px;height:27px;background:#e6e6e0;box-shadow:inset 1px 1px 0 #fafafa,inset -1px -1px 0 #909090;"></div><div style="left:326px;top:2.3px;width:24.6px;height:27px;background:#e6e6e0;box-shadow:inset 1px 1px 0 #fafafa,inset -1px -1px 0 #909090;"></div><div style="left:351px;top:2.3px;width:24.6px;height:27px;background:#e6e6e0;box-shadow:inset 1px 1px 0 #fafafa,inset -1px -1px 0 #909090;"></div><div style="left:377px;top:2.3px;width:24.6px;height:27px;background:#e6e6e0;box-shadow:inset 1px 1px 0 #fafafa,inset -1px -1px 0 #909090;"></div><svg class="abs" style="left:301.500px;top:5px" width="22" height="22" viewBox="0 0 22 22"><path d="M2,8 L2,20 L17,20 L17,8 L9,8 L7.5,6 L3,6 Z" fill="#e8e4b0" stroke="#a8a070" stroke-width="1"/><path d="M2,20 L5,11 L20,11 L17,20 Z" fill="#f0ecc0" stroke="#a8a070" stroke-width="1"/><path d="M10,4 Q14,0.5 17.5,4.5" fill="none" stroke="#a8a8a8" stroke-width="1.2"/><path d="M18.5,2.5 L18,6 L15,5 Z" fill="#a8a8a8"/></svg><svg class="abs" style="left:327.500px;top:5px" width="22" height="22" viewBox="0 0 22 22"><path d="M1,13.5 Q1.5,5.5 11,5.5 Q20.500,5.5 21,13.5 Z" fill="#c88c70" stroke="#222" stroke-width="1.2"/><path d="M11,13.5 L11,21" stroke="#000" stroke-width="2.4"/></svg><div style="left:355px;top:22.5px;width:16.5px;height:2.6px;background:#000;"></div><svg class="abs" style="left:379.5px;top:5px" width="20" height="22" viewBox="0 0 20 22"><path d="M2,2 L18,20 M18,2 L2,20" stroke="#000" stroke-width="2.2"/></svg><svg class="abs" style="left:0;top:49px" width="334.5" height="182.5" viewBox="0 0 334.5 182.5"><rect x="0" y="0" width="334.5" height="182.5" fill="#fff"/><path d="M0,6.5 L334.5,6.5" stroke="#dcdcf6" stroke-width="1"/><path d="M0,12.5 L334.5,12.5" stroke="#dcdcf6" stroke-width="1"/><path d="M0,18.5 L334.5,18.5" stroke="#dcdcf6" stroke-width="1"/><path d="M0,24.5 L334.5,24.5" stroke="#dcdcf6" stroke-width="1"/><path d="M0,30.5 L334.5,30.5" stroke="#dcdcf6" stroke-width="1"/><path d="M0,36.5 L334.5,36.5" stroke="#dcdcf6" stroke-width="1"/><path d="M0,42.5 L334.5,42.5" stroke="#dcdcf6" stroke-width="1"/><path d="M0,48.5 L334.5,48.5" stroke="#dcdcf6" stroke-width="1"/><path d="M0,54.5 L334.5,54.5" stroke="#dcdcf6" stroke-width="1"/><path d="M0,60.5 L334.5,60.5" stroke="#dcdcf6" stroke-width="1"/><path d="M0,66.5 L334.5,66.5" stroke="#dcdcf6" stroke-width="1"/><path d="M0,72.5 L334.5,72.5" stroke="#dcdcf6" stroke-width="1"/><path d="M0,78.5 L334.5,78.5" stroke="#dcdcf6" stroke-width="1"/><path d="M0,84.5 L334.5,84.5" stroke="#dcdcf6" stroke-width="1"/><path d="M0,90.5 L334.5,90.5" stroke="#dcdcf6" stroke-width="1"/><path d="M0,96.5 L334.5,96.5" stroke="#dcdcf6" stroke-width="1"/><path d="M0,102.5 L334.5,102.5" stroke="#dcdcf6" stroke-width="1"/><path d="M0,108.5 L334.5,108.5" stroke="#dcdcf6" stroke-width="1"/><path d="M0,114.5 L334.5,114.5" stroke="#dcdcf6" stroke-width="1"/><path d="M0,120.5 L334.5,120.5" stroke="#dcdcf6" stroke-width="1"/><path d="M0,126.5 L334.5,126.5" stroke="#dcdcf6" stroke-width="1"/><path d="M0,132.5 L334.5,132.5" stroke="#dcdcf6" stroke-width="1"/><path d="M0,138.5 L334.5,138.5" stroke="#dcdcf6" stroke-width="1"/><path d="M0,144.5 L334.5,144.5" stroke="#dcdcf6" stroke-width="1"/><path d="M0,150.5 L334.5,150.5" stroke="#dcdcf6" stroke-width="1"/><path d="M0,156.5 L334.5,156.5" stroke="#dcdcf6" stroke-width="1"/><path d="M0,162.5 L334.5,162.5" stroke="#dcdcf6" stroke-width="1"/><path d="M0,168.5 L334.5,168.5" stroke="#dcdcf6" stroke-width="1"/><path d="M0,174.5 L334.5,174.5" stroke="#dcdcf6" stroke-width="1"/><path d="M0,180.5 L334.5,180.5" stroke="#dcdcf6" stroke-width="1"/><clipPath id="cpg"><path d="M7.0,63.7 L8.3,56.6 L9.6,65.6 L10.9,63.4 L12.2,66.0 L13.5,66.0 L14.8,59.7 L16.1,52.8 L17.4,65.7 L18.7,65.9 L20.0,67.5 L21.3,66.3 L22.6,64.3 L23.9,55.1 L25.2,63.2 L26.5,65.1 L27.8,51.0 L29.1,64.9 L30.4,65.1 L31.7,64.7 L33.0,62.3 L34.3,61.7 L35.6,61.6 L36.9,52.3 L38.2,65.5 L39.5,65.5 L40.8,65.5 L42.1,65.5 L43.4,65.5 L44.7,65.5 L46.0,65.5 L47.3,65.5 L48.6,65.5 L49.9,66.1 L51.2,62.6 L52.5,66.1 L53.8,61.7 L55.1,65.9 L56.4,66.0 L57.7,64.5 L59.0,63.7 L60.3,65.5 L61.6,65.8 L62.9,65.9 L64.2,65.4 L65.5,61.6 L66.8,54.0 L68.1,64.5 L69.4,59.4 L70.7,60.1 L72.0,64.9 L73.3,66.1 L74.6,65.6 L75.9,63.5 L77.2,64.2 L78.5,55.9 L79.8,61.2 L81.1,57.2 L82.4,62.8 L83.7,54.0 L85.0,56.7 L86.3,68.3 L87.6,56.0 L88.9,62.4 L90.2,65.0 L91.5,62.9 L92.8,67.4 L94.1,62.2 L95.4,65.1 L96.7,62.3 L98.0,64.3 L99.3,65.5 L100.6,65.6 L101.9,65.6 L103.2,65.6 L104.5,65.6 L105.8,65.7 L107.1,65.7 L108.4,65.7 L109.7,65.7 L111.0,65.8 L112.3,65.8 L113.6,65.8 L114.9,65.8 L116.2,65.9 L117.5,65.9 L118.8,65.9 L120.1,65.9 L121.4,66.0 L122.7,66.0 L124.0,66.0 L125.3,66.0 L126.6,66.1 L127.9,66.1 L129.2,66.1 L130.5,66.1 L131.8,66.2 L133.1,66.2 L134.4,66.2 L135.7,66.3 L137.0,66.3 L138.3,66.3 L139.6,66.3 L140.9,66.4 L142.2,66.4 L143.5,66.4 L144.8,66.4 L146.1,66.5 L147.4,66.5 L148.7,66.5 L150.0,66.5 L151.3,66.6 L152.6,66.6 L153.9,66.6 L155.2,66.6 L156.5,67.6 L157.8,63.6 L159.1,66.7 L160.4,52.7 L161.7,63.6 L163.0,68.3 L164.3,63.9 L165.6,61.7 L166.9,65.3 L168.2,62.8 L169.5,61.5 L170.8,65.8 L172.1,62.0 L173.4,63.0 L174.7,61.9 L176.0,63.1 L177.3,55.4 L178.6,62.2 L179.9,63.4 L181.2,63.6 L182.5,66.1 L183.8,61.5 L185.1,56.4 L186.4,63.6 L187.7,62.3 L189.0,64.7 L190.3,65.5 L191.6,65.3 L192.9,64.0 L194.2,61.9 L195.5,66.4 L196.8,63.1 L198.1,65.7 L199.4,56.2 L200.7,55.9 L202.0,64.3 L203.3,51.0 L204.6,63.6 L205.9,65.8 L207.2,62.3 L208.5,51.4 L209.8,65.7 L211.1,65.1 L212.4,64.4 L213.7,64.0 L215.0,62.3 L216.3,60.6 L217.6,64.1 L218.9,65.0 L220.2,65.0 L221.5,66.4 L222.8,66.2 L224.1,64.4 L225.4,65.8 L226.7,65.4 L228.0,63.4 L229.3,62.5 L230.6,58.3 L231.9,65.6 L233.2,66.1 L234.5,69.5 L235.8,69.5 L237.1,69.5 L238.4,69.5 L239.7,69.5 L241.0,69.5 L242.3,69.5 L243.6,69.5 L244.9,69.5 L246.2,69.5 L247.5,69.5 L248.8,69.5 L250.1,65.6 L251.4,64.8 L252.7,63.9 L254.0,62.7 L255.3,62.5 L256.6,54.7 L257.9,65.9 L259.2,63.4 L260.5,56.5 L261.8,51.0 L263.1,63.2 L264.4,62.9 L265.7,53.8 L267.0,62.0 L268.3,53.8 L269.6,64.9 L270.9,56.1 L272.2,66.3 L273.5,62.7 L274.8,66.4 L276.1,56.0 L277.4,64.8 L278.7,65.8 L280.0,65.9 L281.3,62.3 L282.6,61.8 L283.9,61.8 L285.2,67.4 L286.5,65.0 L287.8,63.3 L289.1,62.3 L290.4,64.9 L291.7,62.3 L293.0,54.8 L294.3,55.7 L295.6,63.8 L296.9,63.5 L298.2,63.7 L299.5,64.5 L300.8,56.3 L302.1,66.2 L303.4,64.4 L304.7,56.5 L306.0,65.9 L307.3,62.4 L308.6,58.3 L309.9,63.4 L311.2,55.8 L312.5,67.5 L313.8,63.1 L315.1,64.7 L316.4,66.0 L317.7,65.9 L319.0,65.2 L320.3,63.8 L321.6,64.6 L322.9,63.9 L324.2,65.5 L325.5,63.3 L326.8,62.2 L328.1,62.2 L329.4,62.8 L330.7,56.1 L332.0,61.9 L333.3,61.5 L334.5,182.5 L7,182.5 Z"/></clipPath><path d="M7.0,63.7 L8.3,56.6 L9.6,65.6 L10.9,63.4 L12.2,66.0 L13.5,66.0 L14.8,59.7 L16.1,52.8 L17.4,65.7 L18.7,65.9 L20.0,67.5 L21.3,66.3 L22.6,64.3 L23.9,55.1 L25.2,63.2 L26.5,65.1 L27.8,51.0 L29.1,64.9 L30.4,65.1 L31.7,64.7 L33.0,62.3 L34.3,61.7 L35.6,61.6 L36.9,52.3 L38.2,65.5 L39.5,65.5 L40.8,65.5 L42.1,65.5 L43.4,65.5 L44.7,65.5 L46.0,65.5 L47.3,65.5 L48.6,65.5 L49.9,66.1 L51.2,62.6 L52.5,66.1 L53.8,61.7 L55.1,65.9 L56.4,66.0 L57.7,64.5 L59.0,63.7 L60.3,65.5 L61.6,65.8 L62.9,65.9 L64.2,65.4 L65.5,61.6 L66.8,54.0 L68.1,64.5 L69.4,59.4 L70.7,60.1 L72.0,64.9 L73.3,66.1 L74.6,65.6 L75.9,63.5 L77.2,64.2 L78.5,55.9 L79.8,61.2 L81.1,57.2 L82.4,62.8 L83.7,54.0 L85.0,56.7 L86.3,68.3 L87.6,56.0 L88.9,62.4 L90.2,65.0 L91.5,62.9 L92.8,67.4 L94.1,62.2 L95.4,65.1 L96.7,62.3 L98.0,64.3 L99.3,65.5 L100.6,65.6 L101.9,65.6 L103.2,65.6 L104.5,65.6 L105.8,65.7 L107.1,65.7 L108.4,65.7 L109.7,65.7 L111.0,65.8 L112.3,65.8 L113.6,65.8 L114.9,65.8 L116.2,65.9 L117.5,65.9 L118.8,65.9 L120.1,65.9 L121.4,66.0 L122.7,66.0 L124.0,66.0 L125.3,66.0 L126.6,66.1 L127.9,66.1 L129.2,66.1 L130.5,66.1 L131.8,66.2 L133.1,66.2 L134.4,66.2 L135.7,66.3 L137.0,66.3 L138.3,66.3 L139.6,66.3 L140.9,66.4 L142.2,66.4 L143.5,66.4 L144.8,66.4 L146.1,66.5 L147.4,66.5 L148.7,66.5 L150.0,66.5 L151.3,66.6 L152.6,66.6 L153.9,66.6 L155.2,66.6 L156.5,67.6 L157.8,63.6 L159.1,66.7 L160.4,52.7 L161.7,63.6 L163.0,68.3 L164.3,63.9 L165.6,61.7 L166.9,65.3 L168.2,62.8 L169.5,61.5 L170.8,65.8 L172.1,62.0 L173.4,63.0 L174.7,61.9 L176.0,63.1 L177.3,55.4 L178.6,62.2 L179.9,63.4 L181.2,63.6 L182.5,66.1 L183.8,61.5 L185.1,56.4 L186.4,63.6 L187.7,62.3 L189.0,64.7 L190.3,65.5 L191.6,65.3 L192.9,64.0 L194.2,61.9 L195.5,66.4 L196.8,63.1 L198.1,65.7 L199.4,56.2 L200.7,55.9 L202.0,64.3 L203.3,51.0 L204.6,63.6 L205.9,65.8 L207.2,62.3 L208.5,51.4 L209.8,65.7 L211.1,65.1 L212.4,64.4 L213.7,64.0 L215.0,62.3 L216.3,60.6 L217.6,64.1 L218.9,65.0 L220.2,65.0 L221.5,66.4 L222.8,66.2 L224.1,64.4 L225.4,65.8 L226.7,65.4 L228.0,63.4 L229.3,62.5 L230.6,58.3 L231.9,65.6 L233.2,66.1 L234.5,69.5 L235.8,69.5 L237.1,69.5 L238.4,69.5 L239.7,69.5 L241.0,69.5 L242.3,69.5 L243.6,69.5 L244.9,69.5 L246.2,69.5 L247.5,69.5 L248.8,69.5 L250.1,65.6 L251.4,64.8 L252.7,63.9 L254.0,62.7 L255.3,62.5 L256.6,54.7 L257.9,65.9 L259.2,63.4 L260.5,56.5 L261.8,51.0 L263.1,63.2 L264.4,62.9 L265.7,53.8 L267.0,62.0 L268.3,53.8 L269.6,64.9 L270.9,56.1 L272.2,66.3 L273.5,62.7 L274.8,66.4 L276.1,56.0 L277.4,64.8 L278.7,65.8 L280.0,65.9 L281.3,62.3 L282.6,61.8 L283.9,61.8 L285.2,67.4 L286.5,65.0 L287.8,63.3 L289.1,62.3 L290.4,64.9 L291.7,62.3 L293.0,54.8 L294.3,55.7 L295.6,63.8 L296.9,63.5 L298.2,63.7 L299.5,64.5 L300.8,56.3 L302.1,66.2 L303.4,64.4 L304.7,56.5 L306.0,65.9 L307.3,62.4 L308.6,58.3 L309.9,63.4 L311.2,55.8 L312.5,67.5 L313.8,63.1 L315.1,64.7 L316.4,66.0 L317.7,65.9 L319.0,65.2 L320.3,63.8 L321.6,64.6 L322.9,63.9 L324.2,65.5 L325.5,63.3 L326.8,62.2 L328.1,62.2 L329.4,62.8 L330.7,56.1 L332.0,61.9 L333.3,61.5 L334.5,182.5 L7,182.5 Z" fill="#b2dba0"/><g clip-path="url(#cpg)"><rect x="7" y="40" width="3" height="142.5" fill="#3d9a12"/><rect x="11" y="40" width="5" height="142.5" fill="#3d9a12"/><rect x="17" y="40" width="3" height="142.5" fill="#3d9a12"/><rect x="21" y="40" width="3" height="142.5" fill="#3d9a12"/><rect x="25" y="40" width="8" height="142.5" fill="#3d9a12"/><rect x="34" y="40" width="4" height="142.5" fill="#3d9a12"/><rect x="49" y="40" width="2" height="142.5" fill="#3d9a12"/><rect x="52" y="40" width="7" height="142.5" fill="#3d9a12"/><rect x="62" y="40" width="3" height="142.5" fill="#3d9a12"/><rect x="68" y="40" width="5" height="142.5" fill="#3d9a12"/><rect x="77" y="40" width="3" height="142.5" fill="#3d9a12"/><rect x="81" y="40" width="10" height="142.5" fill="#3d9a12"/><rect x="92" y="40" width="4" height="142.5" fill="#3d9a12"/><rect x="97" y="40" width="4" height="142.5" fill="#3d9a12"/><rect x="156" y="40" width="3" height="142.5" fill="#3d9a12"/><rect x="160" y="40" width="4" height="142.5" fill="#3d9a12"/><rect x="168" y="40" width="3" height="142.5" fill="#3d9a12"/><rect x="174" y="40" width="8" height="142.5" fill="#3d9a12"/><rect x="183" y="40" width="7" height="142.5" fill="#3d9a12"/><rect x="191" y="40" width="7" height="142.5" fill="#3d9a12"/><rect x="199" y="40" width="2" height="142.5" fill="#3d9a12"/><rect x="203" y="40" width="8" height="142.5" fill="#3d9a12"/><rect x="212" y="40" width="7" height="142.5" fill="#3d9a12"/><rect x="220" y="40" width="5" height="142.5" fill="#3d9a12"/><rect x="226" y="40" width="3" height="142.5" fill="#3d9a12"/><rect x="230" y="40" width="2" height="142.5" fill="#3d9a12"/><rect x="233" y="40" width="3" height="142.5" fill="#3d9a12"/><rect x="250" y="40" width="5" height="142.5" fill="#3d9a12"/><rect x="256" y="40" width="7" height="142.5" fill="#3d9a12"/><rect x="266" y="40" width="6" height="142.5" fill="#3d9a12"/><rect x="274" y="40" width="8" height="142.5" fill="#3d9a12"/><rect x="283" y="40" width="7" height="142.5" fill="#3d9a12"/><rect x="293" y="40" width="8" height="142.5" fill="#3d9a12"/><rect x="305" y="40" width="5" height="142.5" fill="#3d9a12"/><rect x="312" y="40" width="7" height="142.5" fill="#3d9a12"/><rect x="320" y="40" width="3" height="142.5" fill="#3d9a12"/><rect x="324" y="40" width="7" height="142.5" fill="#3d9a12"/><rect x="333" y="40" width="5" height="142.5" fill="#3d9a12"/><rect x="126" y="40" width="1" height="142.5" fill="#3d9a12"/><rect x="153.5" y="40" width="1" height="142.5" fill="#3d9a12"/></g><path d="M7,54.5 L334.5,54.5" stroke="#dce8e0" stroke-width="1" opacity="0.55" clip-path="url(#cpg)"/><path d="M7,60.5 L334.5,60.5" stroke="#dce8e0" stroke-width="1" opacity="0.55" clip-path="url(#cpg)"/><path d="M7,66.5 L334.5,66.5" stroke="#dce8e0" stroke-width="1" opacity="0.55" clip-path="url(#cpg)"/><path d="M7,72.5 L334.5,72.5" stroke="#dce8e0" stroke-width="1" opacity="0.55" clip-path="url(#cpg)"/><path d="M7,78.5 L334.5,78.5" stroke="#dce8e0" stroke-width="1" opacity="0.55" clip-path="url(#cpg)"/><path d="M7,84.5 L334.5,84.5" stroke="#dce8e0" stroke-width="1" opacity="0.55" clip-path="url(#cpg)"/><path d="M7,90.5 L334.5,90.5" stroke="#dce8e0" stroke-width="1" opacity="0.55" clip-path="url(#cpg)"/><path d="M7,96.5 L334.5,96.5" stroke="#dce8e0" stroke-width="1" opacity="0.55" clip-path="url(#cpg)"/><path d="M7,102.5 L334.5,102.5" stroke="#dce8e0" stroke-width="1" opacity="0.55" clip-path="url(#cpg)"/><path d="M7,108.5 L334.5,108.5" stroke="#dce8e0" stroke-width="1" opacity="0.55" clip-path="url(#cpg)"/><path d="M7,114.5 L334.5,114.5" stroke="#dce8e0" stroke-width="1" opacity="0.55" clip-path="url(#cpg)"/><path d="M7,120.5 L334.5,120.5" stroke="#dce8e0" stroke-width="1" opacity="0.55" clip-path="url(#cpg)"/><path d="M7,126.5 L334.5,126.5" stroke="#dce8e0" stroke-width="1" opacity="0.55" clip-path="url(#cpg)"/><path d="M7,132.5 L334.5,132.5" stroke="#dce8e0" stroke-width="1" opacity="0.55" clip-path="url(#cpg)"/><path d="M7,138.5 L334.5,138.5" stroke="#dce8e0" stroke-width="1" opacity="0.55" clip-path="url(#cpg)"/><path d="M7,144.5 L334.5,144.5" stroke="#dce8e0" stroke-width="1" opacity="0.55" clip-path="url(#cpg)"/><path d="M7,150.5 L334.5,150.5" stroke="#dce8e0" stroke-width="1" opacity="0.55" clip-path="url(#cpg)"/><path d="M7,156.5 L334.5,156.5" stroke="#dce8e0" stroke-width="1" opacity="0.55" clip-path="url(#cpg)"/><path d="M7,162.5 L334.5,162.5" stroke="#dce8e0" stroke-width="1" opacity="0.55" clip-path="url(#cpg)"/><path d="M7,168.5 L334.5,168.5" stroke="#dce8e0" stroke-width="1" opacity="0.55" clip-path="url(#cpg)"/><path d="M7,174.5 L334.5,174.5" stroke="#dce8e0" stroke-width="1" opacity="0.55" clip-path="url(#cpg)"/><path d="M7,180.5 L334.5,180.5" stroke="#dce8e0" stroke-width="1" opacity="0.55" clip-path="url(#cpg)"/><path d="M7.0,63.7 L8.3,56.6 L9.6,65.6 L10.9,63.4 L12.2,66.0 L13.5,66.0 L14.8,59.7 L16.1,52.8 L17.4,65.7 L18.7,65.9 L20.0,67.5 L21.3,66.3 L22.6,64.3 L23.9,55.1 L25.2,63.2 L26.5,65.1 L27.8,51.0 L29.1,64.9 L30.4,65.1 L31.7,64.7 L33.0,62.3 L34.3,61.7 L35.6,61.6 L36.9,52.3 L38.2,65.5 L39.5,65.5 L40.8,65.5 L42.1,65.5 L43.4,65.5 L44.7,65.5 L46.0,65.5 L47.3,65.5 L48.6,65.5 L49.9,66.1 L51.2,62.6 L52.5,66.1 L53.8,61.7 L55.1,65.9 L56.4,66.0 L57.7,64.5 L59.0,63.7 L60.3,65.5 L61.6,65.8 L62.9,65.9 L64.2,65.4 L65.5,61.6 L66.8,54.0 L68.1,64.5 L69.4,59.4 L70.7,60.1 L72.0,64.9 L73.3,66.1 L74.6,65.6 L75.9,63.5 L77.2,64.2 L78.5,55.9 L79.8,61.2 L81.1,57.2 L82.4,62.8 L83.7,54.0 L85.0,56.7 L86.3,68.3 L87.6,56.0 L88.9,62.4 L90.2,65.0 L91.5,62.9 L92.8,67.4 L94.1,62.2 L95.4,65.1 L96.7,62.3 L98.0,64.3 L99.3,65.5 L100.6,65.6 L101.9,65.6 L103.2,65.6 L104.5,65.6 L105.8,65.7 L107.1,65.7 L108.4,65.7 L109.7,65.7 L111.0,65.8 L112.3,65.8 L113.6,65.8 L114.9,65.8 L116.2,65.9 L117.5,65.9 L118.8,65.9 L120.1,65.9 L121.4,66.0 L122.7,66.0 L124.0,66.0 L125.3,66.0 L126.6,66.1 L127.9,66.1 L129.2,66.1 L130.5,66.1 L131.8,66.2 L133.1,66.2 L134.4,66.2 L135.7,66.3 L137.0,66.3 L138.3,66.3 L139.6,66.3 L140.9,66.4 L142.2,66.4 L143.5,66.4 L144.8,66.4 L146.1,66.5 L147.4,66.5 L148.7,66.5 L150.0,66.5 L151.3,66.6 L152.6,66.6 L153.9,66.6 L155.2,66.6 L156.5,67.6 L157.8,63.6 L159.1,66.7 L160.4,52.7 L161.7,63.6 L163.0,68.3 L164.3,63.9 L165.6,61.7 L166.9,65.3 L168.2,62.8 L169.5,61.5 L170.8,65.8 L172.1,62.0 L173.4,63.0 L174.7,61.9 L176.0,63.1 L177.3,55.4 L178.6,62.2 L179.9,63.4 L181.2,63.6 L182.5,66.1 L183.8,61.5 L185.1,56.4 L186.4,63.6 L187.7,62.3 L189.0,64.7 L190.3,65.5 L191.6,65.3 L192.9,64.0 L194.2,61.9 L195.5,66.4 L196.8,63.1 L198.1,65.7 L199.4,56.2 L200.7,55.9 L202.0,64.3 L203.3,51.0 L204.6,63.6 L205.9,65.8 L207.2,62.3 L208.5,51.4 L209.8,65.7 L211.1,65.1 L212.4,64.4 L213.7,64.0 L215.0,62.3 L216.3,60.6 L217.6,64.1 L218.9,65.0 L220.2,65.0 L221.5,66.4 L222.8,66.2 L224.1,64.4 L225.4,65.8 L226.7,65.4 L228.0,63.4 L229.3,62.5 L230.6,58.3 L231.9,65.6 L233.2,66.1 L234.5,69.5 L235.8,69.5 L237.1,69.5 L238.4,69.5 L239.7,69.5 L241.0,69.5 L242.3,69.5 L243.6,69.5 L244.9,69.5 L246.2,69.5 L247.5,69.5 L248.8,69.5 L250.1,65.6 L251.4,64.8 L252.7,63.9 L254.0,62.7 L255.3,62.5 L256.6,54.7 L257.9,65.9 L259.2,63.4 L260.5,56.5 L261.8,51.0 L263.1,63.2 L264.4,62.9 L265.7,53.8 L267.0,62.0 L268.3,53.8 L269.6,64.9 L270.9,56.1 L272.2,66.3 L273.5,62.7 L274.8,66.4 L276.1,56.0 L277.4,64.8 L278.7,65.8 L280.0,65.9 L281.3,62.3 L282.6,61.8 L283.9,61.8 L285.2,67.4 L286.5,65.0 L287.8,63.3 L289.1,62.3 L290.4,64.9 L291.7,62.3 L293.0,54.8 L294.3,55.7 L295.6,63.8 L296.9,63.5 L298.2,63.7 L299.5,64.5 L300.8,56.3 L302.1,66.2 L303.4,64.4 L304.7,56.5 L306.0,65.9 L307.3,62.4 L308.6,58.3 L309.9,63.4 L311.2,55.8 L312.5,67.5 L313.8,63.1 L315.1,64.7 L316.4,66.0 L317.7,65.9 L319.0,65.2 L320.3,63.8 L321.6,64.6 L322.9,63.9 L324.2,65.5 L325.5,63.3 L326.8,62.2 L328.1,62.2 L329.4,62.8 L330.7,56.1 L332.0,61.9 L333.3,61.5" fill="none" stroke="#2c9000" stroke-width="1.2"/><path d="M0,30.5 L334.5,30.5" stroke="#a00808" stroke-width="1.3"/><path d="M0,61.5 L334.5,61.5" stroke="#3a3a3a" stroke-width="1"/><path d="M0,91 L334.5,91" stroke="#808080" stroke-width="1" opacity="0.8"/><path d="M0,121.5 L334.5,121.5" stroke="#2a3a1a" stroke-width="1.2"/><path d="M0,152.5 L334.5,152.5" stroke="#2030b0" stroke-width="1.3"/><path d="M0,0.5 L334.5,0.5 M334.0,0 L334.0,182.5 M0,182.0 L334.5,182.0" stroke="#909090" stroke-width="1" fill="none"/></svg><svg class="abs" style="left:0;top:231.5px" width="340" height="40" viewBox="0 0 340 40"><path d="M11.5,0 L11.5,16.5" stroke="#000" stroke-width="1"/><path d="M16.5,0 L16.5,16.5" stroke="#000" stroke-width="1"/><path d="M21.5,0 L21.5,16.5" stroke="#000" stroke-width="1"/><path d="M26.5,0 L26.5,16.5" stroke="#000" stroke-width="1"/><path d="M31.5,0 L31.5,16.5" stroke="#000" stroke-width="1"/><path d="M36.5,0 L36.5,23" stroke="#000" stroke-width="1"/><path d="M41.5,0 L41.5,16.5" stroke="#000" stroke-width="1"/><path d="M46.5,0 L46.5,16.5" stroke="#000" stroke-width="1"/><path d="M51.5,0 L51.5,16.5" stroke="#000" stroke-width="1"/><path d="M56.5,0 L56.5,16.5" stroke="#000" stroke-width="1"/><path d="M61.5,0 L61.5,16.5" stroke="#000" stroke-width="1"/><path d="M66.5,0 L66.5,23" stroke="#000" stroke-width="1"/><path d="M71.5,0 L71.5,16.5" stroke="#000" stroke-width="1"/><path d="M76.5,0 L76.5,16.5" stroke="#000" stroke-width="1"/><path d="M81.5,0 L81.5,16.5" stroke="#000" stroke-width="1"/><path d="M86.5,0 L86.5,16.5" stroke="#000" stroke-width="1"/><path d="M91.5,0 L91.5,16.5" stroke="#000" stroke-width="1"/><path d="M96.5,0 L96.5,23" stroke="#000" stroke-width="1"/><path d="M101.5,0 L101.5,16.5" stroke="#000" stroke-width="1"/><path d="M106.5,0 L106.5,16.5" stroke="#000" stroke-width="1"/><path d="M111.5,0 L111.5,16.5" stroke="#000" stroke-width="1"/><path d="M116.5,0 L116.5,16.5" stroke="#000" stroke-width="1"/><path d="M121.5,0 L121.5,16.5" stroke="#000" stroke-width="1"/><path d="M126.5,0 L126.5,23" stroke="#000" stroke-width="1"/><path d="M131.5,0 L131.5,16.5" stroke="#000" stroke-width="1"/><path d="M136.5,0 L136.5,16.5" stroke="#000" stroke-width="1"/><path d="M141.5,0 L141.5,16.5" stroke="#000" stroke-width="1"/><path d="M146.5,0 L146.5,16.5" stroke="#000" stroke-width="1"/><path d="M151.5,0 L151.5,16.5" stroke="#000" stroke-width="1"/><path d="M156.5,0 L156.5,23" stroke="#000" stroke-width="1"/><path d="M161.5,0 L161.5,16.5" stroke="#000" stroke-width="1"/><path d="M166.5,0 L166.5,16.5" stroke="#000" stroke-width="1"/><path d="M171.5,0 L171.5,16.5" stroke="#000" stroke-width="1"/><path d="M176.5,0 L176.5,16.5" stroke="#000" stroke-width="1"/><path d="M181.5,0 L181.5,16.5" stroke="#000" stroke-width="1"/><path d="M186.5,0 L186.5,23" stroke="#000" stroke-width="1"/><path d="M191.5,0 L191.5,16.5" stroke="#000" stroke-width="1"/><path d="M196.5,0 L196.5,16.5" stroke="#000" stroke-width="1"/><path d="M201.5,0 L201.5,16.5" stroke="#000" stroke-width="1"/><path d="M206.5,0 L206.5,16.5" stroke="#000" stroke-width="1"/><path d="M211.5,0 L211.5,16.5" stroke="#000" stroke-width="1"/><path d="M216.5,0 L216.5,23" stroke="#000" stroke-width="1"/><path d="M221.5,0 L221.5,16.5" stroke="#000" stroke-width="1"/><path d="M226.5,0 L226.5,16.5" stroke="#000" stroke-width="1"/><path d="M231.5,0 L231.5,16.5" stroke="#000" stroke-width="1"/><path d="M236.5,0 L236.5,16.5" stroke="#000" stroke-width="1"/><path d="M241.5,0 L241.5,16.5" stroke="#000" stroke-width="1"/><path d="M246.5,0 L246.5,23" stroke="#000" stroke-width="1"/><path d="M251.5,0 L251.5,16.5" stroke="#000" stroke-width="1"/><path d="M256.5,0 L256.5,16.5" stroke="#000" stroke-width="1"/><path d="M261.5,0 L261.5,16.5" stroke="#000" stroke-width="1"/><path d="M266.5,0 L266.5,16.5" stroke="#000" stroke-width="1"/><path d="M271.5,0 L271.5,16.5" stroke="#000" stroke-width="1"/><path d="M276.5,0 L276.5,23" stroke="#000" stroke-width="1"/><path d="M281.5,0 L281.5,16.5" stroke="#000" stroke-width="1"/><path d="M286.5,0 L286.5,16.5" stroke="#000" stroke-width="1"/><path d="M291.5,0 L291.5,16.5" stroke="#000" stroke-width="1"/><path d="M296.5,0 L296.5,16.5" stroke="#000" stroke-width="1"/><path d="M301.5,0 L301.5,16.5" stroke="#000" stroke-width="1"/><path d="M306.5,0 L306.5,23" stroke="#000" stroke-width="1"/><path d="M311.5,0 L311.5,16.5" stroke="#000" stroke-width="1"/><path d="M316.5,0 L316.5,16.5" stroke="#000" stroke-width="1"/><path d="M321.5,0 L321.5,16.5" stroke="#000" stroke-width="1"/><path d="M326.5,0 L326.5,16.5" stroke="#000" stroke-width="1"/><path d="M331.5,0 L331.5,16.5" stroke="#000" stroke-width="1"/><text x="36.3" y="31.5" font-size="12.5" text-anchor="middle" font-family="Liberation Sans, sans-serif">24</text><text x="66.3" y="31.5" font-size="12.5" text-anchor="middle" font-family="Liberation Sans, sans-serif">25</text><text x="96.3" y="31.5" font-size="12.5" text-anchor="middle" font-family="Liberation Sans, sans-serif">26</text><text x="126.3" y="31.5" font-size="12.5" text-anchor="middle" font-family="Liberation Sans, sans-serif">27</text><text x="156.3" y="31.5" font-size="12.5" text-anchor="middle" font-family="Liberation Sans, sans-serif">28</text><text x="186.3" y="31.5" font-size="12.5" text-anchor="middle" font-family="Liberation Sans, sans-serif">29</text><text x="216.3" y="31.5" font-size="12.5" text-anchor="middle" font-family="Liberation Sans, sans-serif">30</text><text x="246.3" y="31.5" font-size="12.5" text-anchor="middle" font-family="Liberation Sans, sans-serif">31</text><text x="276.3" y="31.5" font-size="12.5" text-anchor="middle" font-family="Liberation Sans, sans-serif">32</text><text x="306.3" y="31.5" font-size="12.5" text-anchor="middle" font-family="Liberation Sans, sans-serif">33</text></svg><svg class="abs" style="left:329px;top:62.5px" width="66" height="35" viewBox="0 0 66 35"><path d="M5.500,17.5 L16.2,5.2 L59.500,5.2 L59.5,29.8 L16.2,29.8 Z" fill="#f2fafa" stroke="#e4ffff" stroke-width="6" stroke-linejoin="round"/><path d="M5.5,17.5 L16.2,5.2 L59.5,5.2 L59.5,29.8 L16.2,29.8 Z" fill="#f2fafa" stroke="#000" stroke-width="1"/></svg><div class="t" style="left:341.3px;top:68.5px;font-size:19.5px;color:#a01010;line-height:19.5px;line-height:22px;white-space:nowrap;">19.5</div><svg class="abs" style="left:329px;top:103.5px" width="66" height="35" viewBox="0 0 66 35"><path d="M5.500,17.5 L16.2,5.2 L59.500,5.2 L59.5,29.8 L16.2,29.8 Z" fill="#f2fafa" stroke="#e4ffff" stroke-width="6" stroke-linejoin="round"/><path d="M5.5,17.5 L16.2,5.2 L59.5,5.2 L59.5,29.8 L16.2,29.8 Z" fill="#f2fafa" stroke="#000" stroke-width="1"/></svg><div class="t" style="left:341.3px;top:109.5px;font-size:19.5px;color:#2c9000;line-height:19.5px;line-height:22px;white-space:nowrap;">18.93</div><svg class="abs" style="left:329px;top:183.5px" width="66" height="35" viewBox="0 0 66 35"><path d="M5.500,17.5 L16.2,5.2 L59.500,5.2 L59.5,29.8 L16.2,29.8 Z" fill="#f2fafa" stroke="#e4ffff" stroke-width="6" stroke-linejoin="round"/><path d="M5.5,17.5 L16.2,5.2 L59.5,5.2 L59.5,29.8 L16.2,29.8 Z" fill="#f2fafa" stroke="#000" stroke-width="1"/></svg><div class="t" style="left:341.3px;top:189.5px;font-size:19.5px;color:#2030c8;line-height:19.5px;line-height:22px;white-space:nowrap;">17.5</div></div><div style="left:310px;top:390px;width:56.5px;height:23px;background:#fff;border:1px solid #000;box-sizing:border-box;"></div><div class="t" style="left:310px;top:395px;font-size:12px;color:#000;line-height:12px;width:56.5px;text-align:center;line-height:14px;">14:33:56</div><div style="left:405px;top:409px;width:5px;height:5px;background:#00e000;border-radius:50%;"></div>
<div style="left:4px;top:916px;width:1432px;height:99px;background:#d4d0c8;"></div><div style="left:1427px;top:926px;width:12px;height:74px;background:#fff;box-shadow:inset 1px 1px 0 #808080;"></div><div style="left:14.5px;top:926px;width:64.5px;height:32px;background:#d4d0c8;box-shadow:inset -1px -1px 0 #404040,inset 1px 1px 0 #fff,inset -2px -2px 0 #808080;"></div><div class="t" style="left:14.5px;top:934.0px;font-size:14px;color:#000;line-height:14px;width:64.5px;text-align:center;line-height:16px;">More</div><div style="left:86px;top:924px;width:131px;height:37px;background:#c8a000;"></div><div style="left:88px;top:926px;width:127px;height:33px;background:#d4d0c8;box-shadow:inset -1px -1px 0 #404040,inset 1px 1px 0 #fff,inset -2px -2px 0 #808080;"></div><div class="t" style="left:86px;top:934.5px;font-size:14px;color:#000;line-height:14px;width:131px;text-align:center;line-height:16px;">Alarms (22/22)</div><div style="left:222.5px;top:924px;width:131px;height:37px;background:#800000;"></div><div style="left:224.5px;top:926px;width:127px;height:33px;background:#d4d0c8;box-shadow:inset -1px -1px 0 #404040,inset 1px 1px 0 #fff,inset -2px -2px 0 #808080;"></div><div class="t" style="left:222.5px;top:934.5px;font-size:14px;color:#000;line-height:14px;width:131px;text-align:center;line-height:16px;">Events (3)</div><div style="left:357.5px;top:924px;width:131.5px;height:37px;background:#000080;"></div><div style="left:359.5px;top:926px;width:127.5px;height:33px;background:#d4d0c8;box-shadow:inset -1px -1px 0 #404040,inset 1px 1px 0 #fff,inset -2px -2px 0 #808080;"></div><div class="t" style="left:357.5px;top:934.5px;font-size:14px;color:#000;line-height:14px;width:131.5px;text-align:center;line-height:16px;">History</div><div style="left:496.5px;top:926px;width:70px;height:32px;background:#d4d0c8;box-shadow:inset -1px -1px 0 #404040,inset 1px 1px 0 #fff,inset -2px -2px 0 #808080;"></div><div class="t" style="left:496.5px;top:934.0px;font-size:14px;color:#000;line-height:14px;width:70px;text-align:center;line-height:16px;">Ackn</div><div style="left:14.5px;top:968.5px;width:64.5px;height:31.5px;background:#d4d0c8;box-shadow:inset -1px -1px 0 #404040,inset 1px 1px 0 #fff,inset -2px -2px 0 #808080;"></div><div class="t" style="left:14.5px;top:976.25px;font-size:14px;color:#000;line-height:14px;width:64.5px;text-align:center;line-height:16px;">Log out</div><div style="left:88px;top:968.5px;width:127px;height:31.5px;background:#d4d0c8;box-shadow:inset -1px -1px 0 #404040,inset 1px 1px 0 #fff,inset -2px -2px 0 #808080;"></div><div class="t" style="left:88px;top:976.25px;font-size:14px;color:#000;line-height:14px;width:127px;text-align:center;line-height:16px;">Queries</div><div style="left:224px;top:968.5px;width:127px;height:31.5px;background:#d4d0c8;box-shadow:inset -1px -1px 0 #404040,inset 1px 1px 0 #fff,inset -2px -2px 0 #808080;"></div><div class="t" style="left:224px;top:976.25px;font-size:14px;color:#000;line-height:14px;width:127px;text-align:center;line-height:16px;">Tables</div><div style="left:360px;top:968.5px;width:127px;height:31.5px;background:#d4d0c8;box-shadow:inset -1px -1px 0 #404040,inset 1px 1px 0 #fff,inset -2px -2px 0 #808080;"></div><div class="t" style="left:360px;top:976.25px;font-size:14px;color:#000;line-height:14px;width:127px;text-align:center;line-height:16px;">Schemas</div><div style="left:496.5px;top:968.5px;width:70px;height:31.5px;background:#d4d0c8;box-shadow:inset -1px -1px 0 #404040,inset 1px 1px 0 #fff,inset -2px -2px 0 #808080;"></div><div class="t" style="left:496.5px;top:976.25px;font-size:14px;color:#000;line-height:14px;width:70px;text-align:center;line-height:16px;">Sch</div>
<div style="left:538.5px;top:552px;width:887.5px;height:460px;background:#d4d0c8;overflow:hidden;box-shadow:inset 1px 1px 0 #d4d0c8,inset -1px -1px 0 #404040,inset 2px 2px 0 #fff,inset -2px -2px 0 #808080;"><div style="left:3.0px;top:3.5px;width:881.5px;height:23.5px;background:linear-gradient(90deg,#808080 0%,#9a9a9a 40%,#c0c0c0 100%);"></div><div class="t" style="left:28.5px;top:7.5px;font-size:14.5px;color:#d8d4cc;line-height:14.5px;font-weight:bold;white-space:pre;line-height:17px;">History</div><div style="left:818.5px;top:6px;width:20px;height:18.5px;background:#d4d0c8;box-shadow:inset -1px -1px 0 #404040,inset 1px 1px 0 #fff,inset -2px -2px 0 #808080;"></div><div style="left:839.0px;top:6px;width:20px;height:18.5px;background:#d4d0c8;box-shadow:inset -1px -1px 0 #404040,inset 1px 1px 0 #fff,inset -2px -2px 0 #808080;"></div><div style="left:862.0px;top:6px;width:20px;height:18.5px;background:#d4d0c8;box-shadow:inset -1px -1px 0 #404040,inset 1px 1px 0 #fff,inset -2px -2px 0 #808080;"></div><div style="left:822.5px;top:19px;width:7px;height:2px;background:#000;"></div><div style="left:842.5px;top:10px;width:10px;height:9px;border:1px solid #000;border-top:2px solid #000;box-sizing:border-box;"></div><svg class="abs" style="left:866.0px;top:10.5px" width="10" height="10" viewBox="0 0 10 10"><path d="M1,1 L9,9 M9,1 L1,9" stroke="#000" stroke-width="1.8"/></svg><div style="left:3.5px;top:27.5px;width:880.8px;height:431px;border:2px solid #000080;box-sizing:border-box;"></div><div class="t" style="left:30.5px;top:39px;font-size:13.5px;color:#000;line-height:13.5px;white-space:pre;line-height:15px;">Begin:</div><div style="left:75.20000000000005px;top:37px;width:120.3px;height:22.5px;background:#fff;box-shadow:inset 1px 1px 0 #808080,inset -1px -1px 0 #fff,inset 2px 2px 0 #404040,inset -2px -2px 0 #d4d0c8;"></div><div class="t" style="left:81.0px;top:40.5px;font-size:12.5px;color:#000;line-height:12.5px;white-space:pre;line-height:14px;">12.10.09 00:00:00</div><div style="left:203.5px;top:37px;width:57px;height:20.5px;background:#d4d0c8;box-shadow:inset -1px -1px 0 #404040,inset 1px 1px 0 #fff,inset -2px -2px 0 #808080;"></div><div class="t" style="left:203.5px;top:39.25px;font-size:13px;color:#000;line-height:13px;width:57px;text-align:center;white-space:pre;line-height:16px;">Set</div><div class="t" style="left:305.5px;top:39px;font-size:13.5px;color:#000;line-height:13.5px;white-space:pre;line-height:15px;">End:</div><div style="left:340.0px;top:37px;width:120px;height:22.5px;background:#fff;box-shadow:inset 1px 1px 0 #808080,inset -1px -1px 0 #fff,inset 2px 2px 0 #404040,inset -2px -2px 0 #d4d0c8;"></div><div class="t" style="left:345.5px;top:40.5px;font-size:12.5px;color:#000;line-height:12.5px;white-space:pre;line-height:14px;">12.10.09 15:00:00</div><div style="left:467.0px;top:37px;width:57px;height:20.5px;background:#d4d0c8;box-shadow:inset -1px -1px 0 #404040,inset 1px 1px 0 #fff,inset -2px -2px 0 #808080;"></div><div class="t" style="left:467.0px;top:39.25px;font-size:13px;color:#000;line-height:13px;width:57px;text-align:center;white-space:pre;line-height:16px;">Set</div><div style="left:659.5px;top:37px;width:185px;height:20.5px;background:#d4d0c8;box-shadow:inset -1px -1px 0 #404040,inset 1px 1px 0 #fff,inset -2px -2px 0 #808080;"></div><div class="t" style="left:659.5px;top:39.25px;font-size:14.3px;color:#000;line-height:14.3px;font-weight:bold;width:185px;text-align:center;white-space:pre;line-height:16px;letter-spacing:0.3px;">Send query</div><div style="left:12.0px;top:69px;width:14.5px;height:14.5px;background:#fff;box-shadow:inset 1px 1px 0 #808080,inset -1px -1px 0 #fff,inset 2px 2px 0 #404040,inset -2px -2px 0 #d4d0c8;"></div><div class="t" style="left:33.0px;top:69px;font-size:13.5px;color:#000;line-height:13.5px;white-space:pre;line-height:15px;">Priority</div><div class="t" style="left:91.5px;top:69px;font-size:13.5px;color:#000;line-height:13.5px;white-space:pre;line-height:15px;">Events</div><div class="t" style="left:136.0px;top:69px;font-size:13.5px;color:#f00;line-height:13.5px;font-weight:bold;white-space:pre;line-height:15px;">73</div><div class="t" style="left:219.5px;top:69px;font-size:13.5px;color:#000;line-height:13.5px;white-space:pre;line-height:15px;">Group</div><div style="left:347.5px;top:62px;width:185px;height:19.5px;background:#d4d0c8;box-shadow:inset -1px -1px 0 #404040,inset 1px 1px 0 #fff,inset -2px -2px 0 #808080;"></div><div class="t" style="left:347.5px;top:63.75px;font-size:13px;color:#000;line-height:13px;width:185px;text-align:center;white-space:pre;line-height:16px;">Ackn. priority</div><div style="left:540.0px;top:68px;width:15px;height:14.5px;background:#fff;box-shadow:inset 1px 1px 0 #808080,inset -1px -1px 0 #fff,inset 2px 2px 0 #404040,inset -2px -2px 0 #d4d0c8;"></div><div class="t" style="left:561.0px;top:69.5px;font-size:13px;color:#000;line-height:13px;white-space:pre;line-height:15px;">directly to hist.</div><div style="left:755.5px;top:61.5px;width:89px;height:20px;background:#d4d0c8;box-shadow:inset -1px -1px 0 #404040,inset 1px 1px 0 #fff,inset -2px -2px 0 #808080;"></div><div class="t" style="left:755.5px;top:63.5px;font-size:13px;color:#000;line-height:13px;width:89px;text-align:center;white-space:pre;line-height:16px;">Pause</div><div style="left:12.0px;top:85px;width:55px;height:22px;background:#fff;box-shadow:inset 1px 1px 0 #808080,inset -1px -1px 0 #fff,inset 2px 2px 0 #404040,inset -2px -2px 0 #d4d0c8;"></div><div class="t" style="left:16.0px;top:89px;font-size:13px;color:#000;line-height:13px;white-space:pre;line-height:15px;">4 ...</div><div style="left:48.0px;top:87px;width:17px;height:18px;background:#d4d0c8;box-shadow:inset -1px -1px 0 #404040,inset 1px 1px 0 #fff,inset -2px -2px 0 #808080;"></div><svg class="abs" style="left:52.0px;top:94.0px" width="9" height="5" viewBox="0 0 9 5"><path d="M0,0 L9,0 L4.5,5 Z" fill="#000"/></svg><div style="left:75.5px;top:84px;width:81px;height:20.5px;background:#d4d0c8;box-shadow:inset -1px -1px 0 #404040,inset 1px 1px 0 #fff,inset -2px -2px 0 #808080;"></div><div class="t" style="left:75.5px;top:86.25px;font-size:13px;color:#000;line-height:13px;width:81px;text-align:center;white-space:pre;line-height:16px;">Sort</div><div class="t" style="left:163.5px;top:89px;font-size:13.5px;color:#000;line-height:13.5px;white-space:pre;line-height:15px;">time</div><div style="left:219.5px;top:85px;width:112px;height:22px;background:#fff;box-shadow:inset 1px 1px 0 #808080,inset -1px -1px 0 #fff,inset 2px 2px 0 #404040,inset -2px -2px 0 #d4d0c8;"></div><div class="t" style="left:223.5px;top:89px;font-size:13px;color:#000;line-height:13px;white-space:pre;line-height:15px;">All</div><div style="left:312.5px;top:87px;width:17px;height:18px;background:#d4d0c8;box-shadow:inset -1px -1px 0 #404040,inset 1px 1px 0 #fff,inset -2px -2px 0 #808080;"></div><svg class="abs" style="left:316.5px;top:94.0px" width="9" height="5" viewBox="0 0 9 5"><path d="M0,0 L9,0 L4.5,5 Z" fill="#000"/></svg><div style="left:347.5px;top:84.5px;width:185px;height:20px;background:#d4d0c8;box-shadow:inset -1px -1px 0 #404040,inset 1px 1px 0 #fff,inset -2px -2px 0 #808080;"></div><div class="t" style="left:347.5px;top:86.5px;font-size:14.3px;color:#000;line-height:14.3px;font-weight:bold;width:185px;text-align:center;white-space:pre;line-height:16px;letter-spacing:0.3px;">Acknowledge</div><div style="left:539.5px;top:84.5px;width:177px;height:20px;background:#d4d0c8;box-shadow:inset -1px -1px 0 #404040,inset 1px 1px 0 #fff,inset -2px -2px 0 #808080;"></div><div class="t" style="left:539.5px;top:86.5px;font-size:13px;color:#000;line-height:13px;width:177px;text-align:center;white-space:pre;line-height:16px;">Show obj. history</div><div style="left:723.5px;top:84.5px;width:121px;height:20px;background:#d4d0c8;box-shadow:inset -1px -1px 0 #404040,inset 1px 1px 0 #fff,inset -2px -2px 0 #808080;"></div><div class="t" style="left:723.5px;top:86.5px;font-size:13px;color:#000;line-height:13px;width:121px;text-align:center;white-space:pre;line-height:16px;">Export</div><div class="t" style="left:12.0px;top:117px;font-size:13.5px;color:#000;line-height:13.5px;white-space:pre;line-height:15px;">Local Filters:</div><div class="t" style="left:101.5px;top:117px;font-size:13.5px;color:#000;line-height:13.5px;white-space:pre;line-height:15px;">Substation</div><div class="t" style="left:258.5px;top:117px;font-size:13.5px;color:#000;line-height:13.5px;white-space:pre;line-height:15px;">Voltage Class</div><div style="left:172.0px;top:112px;width:95px;height:21.5px;background:#fff;box-shadow:inset 1px 1px 0 #808080,inset -1px -1px 0 #fff,inset 2px 2px 0 #404040,inset -2px -2px 0 #d4d0c8;"></div><div class="t" style="left:176.0px;top:116px;font-size:13px;color:#000;line-height:13px;white-space:pre;line-height:15px;">All</div><div style="left:248.0px;top:114px;width:17px;height:17.5px;background:#d4d0c8;box-shadow:inset -1px -1px 0 #404040,inset 1px 1px 0 #fff,inset -2px -2px 0 #808080;"></div><svg class="abs" style="left:252.0px;top:120.75px" width="9" height="5" viewBox="0 0 9 5"><path d="M0,0 L9,0 L4.5,5 Z" fill="#000"/></svg><div style="left:348.0px;top:112px;width:39px;height:21.5px;background:#fff;box-shadow:inset 1px 1px 0 #808080,inset -1px -1px 0 #fff,inset 2px 2px 0 #404040,inset -2px -2px 0 #d4d0c8;"></div><div class="t" style="left:352.0px;top:116px;font-size:13px;color:#000;line-height:13px;white-space:pre;line-height:15px;">All</div><div style="left:368.0px;top:114px;width:17px;height:17.5px;background:#d4d0c8;box-shadow:inset -1px -1px 0 #404040,inset 1px 1px 0 #fff,inset -2px -2px 0 #808080;"></div><svg class="abs" style="left:372.0px;top:120.75px" width="9" height="5" viewBox="0 0 9 5"><path d="M0,0 L9,0 L4.5,5 Z" fill="#000"/></svg><div class="t" style="left:419.5px;top:117px;font-size:13.5px;color:#000;line-height:13.5px;white-space:pre;line-height:15px;">Type</div><div style="left:460.5px;top:112px;width:39px;height:21.5px;background:#fff;box-shadow:inset 1px 1px 0 #808080,inset -1px -1px 0 #fff,inset 2px 2px 0 #404040,inset -2px -2px 0 #d4d0c8;"></div><div class="t" style="left:464.5px;top:116px;font-size:13px;color:#000;line-height:13px;white-space:pre;line-height:15px;">All</div><div style="left:480.5px;top:114px;width:17px;height:17.5px;background:#d4d0c8;box-shadow:inset -1px -1px 0 #404040,inset 1px 1px 0 #fff,inset -2px -2px 0 #808080;"></div><svg class="abs" style="left:484.5px;top:120.75px" width="9" height="5" viewBox="0 0 9 5"><path d="M0,0 L9,0 L4.5,5 Z" fill="#000"/></svg><div class="t" style="left:535.5px;top:117px;font-size:13.5px;color:#000;line-height:13.5px;white-space:pre;line-height:15px;">Unit</div><div style="left:564.0px;top:112px;width:39px;height:21.5px;background:#fff;box-shadow:inset 1px 1px 0 #808080,inset -1px -1px 0 #fff,inset 2px 2px 0 #404040,inset -2px -2px 0 #d4d0c8;"></div><div class="t" style="left:568.0px;top:116px;font-size:13px;color:#000;line-height:13px;white-space:pre;line-height:15px;">All</div><div style="left:584.0px;top:114px;width:17px;height:17.5px;background:#d4d0c8;box-shadow:inset -1px -1px 0 #404040,inset 1px 1px 0 #fff,inset -2px -2px 0 #808080;"></div><svg class="abs" style="left:588.0px;top:120.75px" width="9" height="5" viewBox="0 0 9 5"><path d="M0,0 L9,0 L4.5,5 Z" fill="#000"/></svg><div class="t" style="left:637.5px;top:117px;font-size:13.5px;color:#000;line-height:13.5px;white-space:pre;line-height:15px;">Bay</div><div style="left:668.0px;top:112px;width:78px;height:21.5px;background:#fff;box-shadow:inset 1px 1px 0 #808080,inset -1px -1px 0 #fff,inset 2px 2px 0 #404040,inset -2px -2px 0 #d4d0c8;"></div><div class="t" style="left:672.0px;top:116px;font-size:13px;color:#000;line-height:13px;white-space:pre;line-height:15px;">All</div><div style="left:727.0px;top:114px;width:17px;height:17.5px;background:#d4d0c8;box-shadow:inset -1px -1px 0 #404040,inset 1px 1px 0 #fff,inset -2px -2px 0 #808080;"></div><svg class="abs" style="left:731.0px;top:120.75px" width="9" height="5" viewBox="0 0 9 5"><path d="M0,0 L9,0 L4.5,5 Z" fill="#000"/></svg><div class="t" style="left:755.5px;top:117px;font-size:13.5px;color:#000;line-height:13.5px;white-space:pre;line-height:15px;">Alarms</div><div style="left:804.0px;top:112px;width:38.5px;height:21.5px;background:#fff;box-shadow:inset 1px 1px 0 #808080,inset -1px -1px 0 #fff,inset 2px 2px 0 #404040,inset -2px -2px 0 #d4d0c8;"></div><div class="t" style="left:808.0px;top:116px;font-size:13px;color:#000;line-height:13px;white-space:pre;line-height:15px;">All</div><div style="left:823.5px;top:114px;width:17px;height:17.5px;background:#d4d0c8;box-shadow:inset -1px -1px 0 #404040,inset 1px 1px 0 #fff,inset -2px -2px 0 #808080;"></div><svg class="abs" style="left:827.5px;top:120.75px" width="9" height="5" viewBox="0 0 9 5"><path d="M0,0 L9,0 L4.5,5 Z" fill="#000"/></svg><div style="left:12.0px;top:142.5px;width:32px;height:16px;background:#fff;border:1px solid #000;border-top-width:2px;border-left-width:2px;box-sizing:border-box;overflow:hidden;"><div class="t" style="left:1px;top:-1px;font-size:13px;line-height:15px;white-space:nowrap;">Prior</div></div><div style="left:45.0px;top:143.5px;width:5.5px;height:15px;background:#c8c4bc;box-shadow:inset 1px 1px 0 #fff,inset -1px -1px 0 #707070;"></div><div style="left:51.5px;top:142.5px;width:132px;height:16px;background:#fff;border:1px solid #000;border-top-width:2px;border-left-width:2px;box-sizing:border-box;overflow:hidden;"><div class="t" style="left:1px;top:-1px;font-size:13px;line-height:15px;white-space:nowrap;">time</div></div><div style="left:184.5px;top:143.5px;width:5.5px;height:15px;background:#c8c4bc;box-shadow:inset 1px 1px 0 #fff,inset -1px -1px 0 #707070;"></div><div style="left:191.0px;top:142.5px;width:59px;height:16px;background:#fff;border:1px solid #000;border-top-width:2px;border-left-width:2px;box-sizing:border-box;overflow:hidden;"><div class="t" style="left:1px;top:-1px;font-size:13px;line-height:15px;white-space:nowrap;">Substatio</div></div><div style="left:251.0px;top:143.5px;width:5.5px;height:15px;background:#c8c4bc;box-shadow:inset 1px 1px 0 #fff,inset -1px -1px 0 #707070;"></div><div style="left:258.5px;top:142.5px;width:38px;height:16px;background:#fff;border:1px solid #000;border-top-width:2px;border-left-width:2px;box-sizing:border-box;overflow:hidden;"><div class="t" style="left:1px;top:-1px;font-size:13px;line-height:15px;white-space:nowrap;">Voltag</div></div><div style="left:297.5px;top:143.5px;width:5.5px;height:15px;background:#c8c4bc;box-shadow:inset 1px 1px 0 #fff,inset -1px -1px 0 #707070;"></div><div style="left:304.5px;top:142.5px;width:68px;height:16px;background:#fff;border:1px solid #000;border-top-width:2px;border-left-width:2px;box-sizing:border-box;overflow:hidden;"><div class="t" style="left:1px;top:-1px;font-size:13px;line-height:15px;white-space:nowrap;">Bay</div></div><div style="left:373.5px;top:143.5px;width:5.5px;height:15px;background:#c8c4bc;box-shadow:inset 1px 1px 0 #fff,inset -1px -1px 0 #707070;"></div><div style="left:380.5px;top:142.5px;width:159.5px;height:16px;background:#fff;border:1px solid #000;border-top-width:2px;border-left-width:2px;box-sizing:border-box;overflow:hidden;"><div class="t" style="left:1px;top:-1px;font-size:13px;line-height:15px;white-space:nowrap;">Name</div></div><div style="left:541.0px;top:143.5px;width:5.5px;height:15px;background:#c8c4bc;box-shadow:inset 1px 1px 0 #fff,inset -1px -1px 0 #707070;"></div><div style="left:547.0px;top:142.5px;width:124.5px;height:16px;background:#fff;border:1px solid #000;border-top-width:2px;border-left-width:2px;box-sizing:border-box;overflow:hidden;"><div class="t" style="left:1px;top:-1px;font-size:13px;line-height:15px;white-space:nowrap;">Status</div></div><div style="left:672.5px;top:143.5px;width:5.5px;height:15px;background:#c8c4bc;box-shadow:inset 1px 1px 0 #fff,inset -1px -1px 0 #707070;"></div><div style="left:679.0px;top:142.5px;width:63px;height:16px;background:#fff;border:1px solid #000;border-top-width:2px;border-left-width:2px;box-sizing:border-box;overflow:hidden;"><div class="t" style="left:1px;top:-1px;font-size:13px;line-height:15px;white-space:nowrap;">Value</div></div><div style="left:743.0px;top:143.5px;width:5.5px;height:15px;background:#c8c4bc;box-shadow:inset 1px 1px 0 #fff,inset -1px -1px 0 #707070;"></div><div style="left:751.0px;top:142.5px;width:89.5px;height:16px;background:#fff;border:1px solid #000;border-top-width:2px;border-left-width:2px;box-sizing:border-box;overflow:hidden;"><div class="t" style="left:1px;top:-1px;font-size:13px;line-height:15px;white-space:nowrap;">Ackn. time</div></div><div style="left:841.5px;top:143.5px;width:5.5px;height:15px;background:#c8c4bc;box-shadow:inset 1px 1px 0 #fff,inset -1px -1px 0 #707070;"></div><div style="left:11.5px;top:159px;width:868px;height:289px;background:#fff;box-shadow:inset 1px 1px 0 #404040;"></div><div style="left:13.5px;top:160px;width:844px;height:17px;background:#ececec;"></div><div style="left:13.5px;top:177px;width:844px;height:1px;background:#c4c4c4;"></div><div style="left:13.5px;top:160px;width:34px;height:17px;background:#fff;"></div><div class="t" style="left:14.5px;top:161px;font-size:13px;color:#000;line-height:13px;white-space:pre;line-height:15px;">-</div><div class="t" style="left:53.0px;top:161px;font-size:13.2px;color:#0000e0;line-height:13.2px;white-space:pre;line-height:15px;letter-spacing:-0.35px;">12.10.09</div><div class="t" style="left:107.0px;top:161px;font-size:13.2px;color:#0000e0;line-height:13.2px;white-space:pre;line-height:15px;letter-spacing:-0.35px;">*13:42:00</div><div class="t" style="left:192.5px;top:161px;font-size:13.2px;color:#0000e0;line-height:13.2px;white-space:pre;line-height:15px;">common</div><div class="t" style="left:306.5px;top:161px;font-size:13.2px;color:#0000e0;line-height:13.2px;white-space:pre;line-height:15px;">0</div><div class="t" style="left:382.0px;top:161px;font-size:13.2px;color:#0000e0;line-height:13.2px;white-space:pre;line-height:15px;">Upper Limit</div><div class="t" style="left:549.5px;top:161px;font-size:13.2px;color:#0000e0;line-height:13.2px;white-space:pre;line-height:15px;">AO_control</div><div class="t" style="left:681.5px;top:161px;font-size:13.2px;color:#0000e0;line-height:13.2px;white-space:pre;line-height:15px;">9.50 MW</div><div class="t" style="left:752.5px;top:161px;font-size:13.2px;color:#0000e0;line-height:13.2px;white-space:pre;line-height:15px;letter-spacing:-0.35px;">12.10.09</div><div style="left:797.5px;top:160px;width:60px;height:17px;background:#ececec;"></div><div class="t" style="left:798.5px;top:161px;font-size:13.2px;color:#0000e0;line-height:13.2px;white-space:pre;line-height:15px;letter-spacing:-0.35px;">13:42:00</div><div style="left:13.5px;top:178px;width:844px;height:17px;background:#f0ffff;"></div><div style="left:13.5px;top:195px;width:844px;height:1px;background:#c4c4c4;"></div><div style="left:13.5px;top:178px;width:34px;height:17px;background:#ff0000;"></div><div class="t" style="left:14.5px;top:179px;font-size:13px;color:#000;line-height:13px;white-space:pre;line-height:15px;letter-spacing:-0.1px;">******</div><div class="t" style="left:53.0px;top:179px;font-size:13.2px;color:#000;line-height:13.2px;white-space:pre;line-height:15px;letter-spacing:-0.35px;">12.10.09</div><div class="t" style="left:112.5px;top:179px;font-size:13.2px;color:#000;line-height:13.2px;white-space:pre;line-height:15px;letter-spacing:-0.35px;">13:28:47.883</div><div class="t" style="left:382.0px;top:179px;font-size:13.2px;color:#000;line-height:13.2px;white-space:pre;line-height:15px;">m (m)</div><div class="t" style="left:549.5px;top:179px;font-size:13.2px;color:#000;line-height:13.2px;white-space:pre;line-height:15px;">Registration IN</div><div class="t" style="left:752.5px;top:179px;font-size:13.2px;color:#000;line-height:13.2px;white-space:pre;line-height:15px;letter-spacing:-0.35px;">12.10.09</div><div style="left:797.5px;top:178px;width:60px;height:17px;background:#f0ffff;"></div><div class="t" style="left:798.5px;top:179px;font-size:13.2px;color:#000;line-height:13.2px;white-space:pre;line-height:15px;letter-spacing:-0.35px;">13:28:47</div><div style="left:13.5px;top:196px;width:844px;height:17px;background:#f0ffff;"></div><div style="left:13.5px;top:213px;width:844px;height:1px;background:#c4c4c4;"></div><div style="left:13.5px;top:196px;width:34px;height:17px;background:#ff0000;"></div><div class="t" style="left:14.5px;top:197px;font-size:13px;color:#000;line-height:13px;white-space:pre;line-height:15px;letter-spacing:-0.1px;">******</div><div class="t" style="left:53.0px;top:197px;font-size:13.2px;color:#000;line-height:13.2px;white-space:pre;line-height:15px;letter-spacing:-0.35px;">12.10.09</div><div class="t" style="left:112.5px;top:197px;font-size:13.2px;color:#000;line-height:13.2px;white-space:pre;line-height:15px;letter-spacing:-0.35px;">13:28:47.649</div><div class="t" style="left:382.0px;top:197px;font-size:13.2px;color:#000;line-height:13.2px;white-space:pre;line-height:15px;">m (m)</div><div class="t" style="left:549.5px;top:197px;font-size:13.2px;color:#000;line-height:13.2px;white-space:pre;line-height:15px;">Log IN</div><div class="t" style="left:752.5px;top:197px;font-size:13.2px;color:#000;line-height:13.2px;white-space:pre;line-height:15px;letter-spacing:-0.35px;">12.10.09</div><div style="left:797.5px;top:196px;width:60px;height:17px;background:#f0ffff;"></div><div class="t" style="left:798.5px;top:197px;font-size:13.2px;color:#000;line-height:13.2px;white-space:pre;line-height:15px;letter-spacing:-0.35px;">13:28:47</div><div style="left:13.5px;top:214px;width:844px;height:17px;background:#f0ffff;"></div><div style="left:13.5px;top:231px;width:844px;height:1px;background:#c4c4c4;"></div><div style="left:13.5px;top:214px;width:34px;height:17px;background:#ff0000;"></div><div class="t" style="left:14.5px;top:215px;font-size:13px;color:#000;line-height:13px;white-space:pre;line-height:15px;letter-spacing:-0.1px;">******</div><div class="t" style="left:53.0px;top:215px;font-size:13.2px;color:#000;line-height:13.2px;white-space:pre;line-height:15px;letter-spacing:-0.35px;">12.10.09</div><div class="t" style="left:112.5px;top:215px;font-size:13.2px;color:#000;line-height:13.2px;white-space:pre;line-height:15px;letter-spacing:-0.35px;">13:28:37.540</div><div class="t" style="left:382.0px;top:215px;font-size:13.2px;color:#000;line-height:13.2px;white-space:pre;line-height:15px;">m (m)</div><div class="t" style="left:549.5px;top:215px;font-size:13.2px;color:#000;line-height:13.2px;white-space:pre;line-height:15px;">Log OUT</div><div class="t" style="left:752.5px;top:215px;font-size:13.2px;color:#000;line-height:13.2px;white-space:pre;line-height:15px;letter-spacing:-0.35px;">12.10.09</div><div style="left:797.5px;top:214px;width:60px;height:17px;background:#f0ffff;"></div><div class="t" style="left:798.5px;top:215px;font-size:13.2px;color:#000;line-height:13.2px;white-space:pre;line-height:15px;letter-spacing:-0.35px;">13:28:37</div><div style="left:13.5px;top:232px;width:844px;height:17px;background:#f0ffff;"></div><div style="left:13.5px;top:249px;width:844px;height:1px;background:#c4c4c4;"></div><div style="left:13.5px;top:232px;width:34px;height:17px;background:#ff0000;"></div><div class="t" style="left:14.5px;top:233px;font-size:13px;color:#000;line-height:13px;white-space:pre;line-height:15px;letter-spacing:-0.1px;">******</div><div class="t" style="left:53.0px;top:233px;font-size:13.2px;color:#000;line-height:13.2px;white-space:pre;line-height:15px;letter-spacing:-0.35px;">12.10.09</div><div class="t" style="left:112.5px;top:233px;font-size:13.2px;color:#000;line-height:13.2px;white-space:pre;line-height:15px;letter-spacing:-0.35px;">13:28:37.540</div><div class="t" style="left:382.0px;top:233px;font-size:13.2px;color:#000;line-height:13.2px;white-space:pre;line-height:15px;">m (m)</div><div class="t" style="left:549.5px;top:233px;font-size:13.2px;color:#000;line-height:13.2px;white-space:pre;line-height:15px;">Log LOST</div><div class="t" style="left:752.5px;top:233px;font-size:13.2px;color:#000;line-height:13.2px;white-space:pre;line-height:15px;letter-spacing:-0.35px;">12.10.09</div><div style="left:797.5px;top:232px;width:60px;height:17px;background:#f0ffff;"></div><div class="t" style="left:798.5px;top:233px;font-size:13.2px;color:#000;line-height:13.2px;white-space:pre;line-height:15px;letter-spacing:-0.35px;">13:28:37</div><div style="left:13.5px;top:250px;width:844px;height:17px;background:#ececec;"></div><div style="left:13.5px;top:267px;width:844px;height:1px;background:#c4c4c4;"></div><div style="left:13.5px;top:250px;width:34px;height:17px;background:#fff;"></div><div class="t" style="left:14.5px;top:251px;font-size:13px;color:#000;line-height:13px;white-space:pre;line-height:15px;">-</div><div class="t" style="left:53.0px;top:251px;font-size:13.2px;color:#0000e0;line-height:13.2px;white-space:pre;line-height:15px;letter-spacing:-0.35px;">12.10.09</div><div class="t" style="left:107.0px;top:251px;font-size:13.2px;color:#0000e0;line-height:13.2px;white-space:pre;line-height:15px;letter-spacing:-0.35px;">*13:23:34</div><div class="t" style="left:192.5px;top:251px;font-size:13.2px;color:#0000e0;line-height:13.2px;white-space:pre;line-height:15px;">common</div><div class="t" style="left:306.5px;top:251px;font-size:13.2px;color:#0000e0;line-height:13.2px;white-space:pre;line-height:15px;">0</div><div class="t" style="left:382.0px;top:251px;font-size:13.2px;color:#0000e0;line-height:13.2px;white-space:pre;line-height:15px;">Upper Limit</div><div class="t" style="left:549.5px;top:251px;font-size:13.2px;color:#0000e0;line-height:13.2px;white-space:pre;line-height:15px;">AO_control</div><div class="t" style="left:681.5px;top:251px;font-size:13.2px;color:#0000e0;line-height:13.2px;white-space:pre;line-height:15px;">9.00 MW</div><div class="t" style="left:752.5px;top:251px;font-size:13.2px;color:#0000e0;line-height:13.2px;white-space:pre;line-height:15px;letter-spacing:-0.35px;">12.10.09</div><div style="left:797.5px;top:250px;width:60px;height:17px;background:#ececec;"></div><div class="t" style="left:798.5px;top:251px;font-size:13.2px;color:#0000e0;line-height:13.2px;white-space:pre;line-height:15px;letter-spacing:-0.35px;">13:23:34</div><div style="left:13.5px;top:268px;width:844px;height:17px;background:#ececec;"></div><div style="left:13.5px;top:285px;width:844px;height:1px;background:#c4c4c4;"></div><div style="left:13.5px;top:268px;width:34px;height:17px;background:#fff;"></div><div class="t" style="left:14.5px;top:269px;font-size:13px;color:#000;line-height:13px;white-space:pre;line-height:15px;">-</div><div class="t" style="left:53.0px;top:269px;font-size:13.2px;color:#0000e0;line-height:13.2px;white-space:pre;line-height:15px;letter-spacing:-0.35px;">12.10.09</div><div class="t" style="left:107.0px;top:269px;font-size:13.2px;color:#0000e0;line-height:13.2px;white-space:pre;line-height:15px;letter-spacing:-0.35px;">*13:23:09</div><div class="t" style="left:192.5px;top:269px;font-size:13.2px;color:#0000e0;line-height:13.2px;white-space:pre;line-height:15px;">common</div><div class="t" style="left:306.5px;top:269px;font-size:13.2px;color:#0000e0;line-height:13.2px;white-space:pre;line-height:15px;">0</div><div class="t" style="left:382.0px;top:269px;font-size:13.2px;color:#0000e0;line-height:13.2px;white-space:pre;line-height:15px;">Lower Alarm</div><div class="t" style="left:549.5px;top:269px;font-size:13.2px;color:#0000e0;line-height:13.2px;white-space:pre;line-height:15px;">AO_control</div><div class="t" style="left:681.5px;top:269px;font-size:13.2px;color:#0000e0;line-height:13.2px;white-space:pre;line-height:15px;">7.50 MW</div><div class="t" style="left:752.5px;top:269px;font-size:13.2px;color:#0000e0;line-height:13.2px;white-space:pre;line-height:15px;letter-spacing:-0.35px;">12.10.09</div><div style="left:797.5px;top:268px;width:60px;height:17px;background:#ececec;"></div><div class="t" style="left:798.5px;top:269px;font-size:13.2px;color:#0000e0;line-height:13.2px;white-space:pre;line-height:15px;letter-spacing:-0.35px;">13:23:09</div><div style="left:13.5px;top:286px;width:844px;height:17px;background:#ececec;"></div><div style="left:13.5px;top:303px;width:844px;height:1px;background:#c4c4c4;"></div><div style="left:13.5px;top:286px;width:34px;height:17px;background:#fff;"></div><div class="t" style="left:14.5px;top:287px;font-size:13px;color:#000;line-height:13px;white-space:pre;line-height:15px;">-</div><div class="t" style="left:53.0px;top:287px;font-size:13.2px;color:#0000e0;line-height:13.2px;white-space:pre;line-height:15px;letter-spacing:-0.35px;">12.10.09</div><div class="t" style="left:107.0px;top:287px;font-size:13.2px;color:#0000e0;line-height:13.2px;white-space:pre;line-height:15px;letter-spacing:-0.35px;">*13:22:34</div><div class="t" style="left:192.5px;top:287px;font-size:13.2px;color:#0000e0;line-height:13.2px;white-space:pre;line-height:15px;">common</div><div class="t" style="left:306.5px;top:287px;font-size:13.2px;color:#0000e0;line-height:13.2px;white-space:pre;line-height:15px;">0</div><div class="t" style="left:382.0px;top:287px;font-size:13.2px;color:#0000e0;line-height:13.2px;white-space:pre;line-height:15px;">Upper Limit</div><div class="t" style="left:549.5px;top:287px;font-size:13.2px;color:#0000e0;line-height:13.2px;white-space:pre;line-height:15px;">AO_control</div><div class="t" style="left:681.5px;top:287px;font-size:13.2px;color:#0000e0;line-height:13.2px;white-space:pre;line-height:15px;">8.50 MW</div><div class="t" style="left:752.5px;top:287px;font-size:13.2px;color:#0000e0;line-height:13.2px;white-space:pre;line-height:15px;letter-spacing:-0.35px;">12.10.09</div><div style="left:797.5px;top:286px;width:60px;height:17px;background:#ececec;"></div><div class="t" style="left:798.5px;top:287px;font-size:13.2px;color:#0000e0;line-height:13.2px;white-space:pre;line-height:15px;letter-spacing:-0.35px;">13:22:34</div><div style="left:13.5px;top:304px;width:844px;height:17px;background:#ffffff;"></div><div style="left:13.5px;top:321px;width:844px;height:1px;background:#c4c4c4;"></div><div style="left:13.5px;top:304px;width:34px;height:17px;background:#ffff00;"></div><div class="t" style="left:14.5px;top:305px;font-size:13px;color:#000;line-height:13px;white-space:pre;line-height:15px;letter-spacing:-0.1px;">****</div><div class="t" style="left:53.0px;top:305px;font-size:13.2px;color:#000;line-height:13.2px;white-space:pre;line-height:15px;letter-spacing:-0.35px;">12.10.09</div><div class="t" style="left:112.5px;top:305px;font-size:13.2px;color:#000;line-height:13.2px;white-space:pre;line-height:15px;letter-spacing:-0.35px;">13:19:30.352</div><div class="t" style="left:192.5px;top:305px;font-size:13.2px;color:#000;line-height:13.2px;white-space:pre;line-height:15px;">common</div><div class="t" style="left:306.5px;top:305px;font-size:13.2px;color:#000;line-height:13.2px;white-space:pre;line-height:15px;">0</div><div class="t" style="left:382.0px;top:305px;font-size:13.2px;color:#000;line-height:13.2px;white-space:pre;line-height:15px;">Upper Alarm</div><div class="t" style="left:549.5px;top:305px;font-size:13.2px;color:#000;line-height:13.2px;white-space:pre;line-height:15px;">-</div><div style="left:13.5px;top:322px;width:844px;height:17px;background:#ececec;"></div><div style="left:13.5px;top:339px;width:844px;height:1px;background:#c4c4c4;"></div><div style="left:13.5px;top:322px;width:34px;height:17px;background:#fff;"></div><div class="t" style="left:14.5px;top:324px;font-size:13px;color:#000;line-height:13px;white-space:pre;line-height:15px;">*</div><div class="t" style="left:53.0px;top:323px;font-size:13.2px;color:#880088;line-height:13.2px;white-space:pre;line-height:15px;letter-spacing:-0.35px;">12.10.09</div><div class="t" style="left:107.0px;top:323px;font-size:13.2px;color:#880088;line-height:13.2px;white-space:pre;line-height:15px;letter-spacing:-0.35px;">*12:58:23</div><div class="t" style="left:192.5px;top:323px;font-size:13.2px;color:#880088;line-height:13.2px;white-space:pre;line-height:15px;">VKG-PSEJ</div><div class="t" style="left:306.5px;top:323px;font-size:13.2px;color:#880088;line-height:13.2px;white-space:pre;line-height:15px;">0</div><div class="t" style="left:382.0px;top:323px;font-size:13.2px;color:#880088;line-height:13.2px;white-space:pre;line-height:15px;">Ületemperatuur</div><div class="t" style="left:549.5px;top:323px;font-size:13.2px;color:#880088;line-height:13.2px;white-space:pre;line-height:15px;">CE Close(toAct)</div><div class="t" style="left:752.5px;top:323px;font-size:13.2px;color:#880088;line-height:13.2px;white-space:pre;line-height:15px;letter-spacing:-0.35px;">12.10.09</div><div style="left:797.5px;top:322px;width:60px;height:17px;background:#ececec;"></div><div class="t" style="left:798.5px;top:323px;font-size:13.2px;color:#880088;line-height:13.2px;white-space:pre;line-height:15px;letter-spacing:-0.35px;">12:58:23</div><div style="left:13.5px;top:340px;width:844px;height:17px;background:#ececec;"></div><div style="left:13.5px;top:357px;width:844px;height:1px;background:#c4c4c4;"></div><div style="left:13.5px;top:340px;width:34px;height:17px;background:#fff;"></div><div class="t" style="left:14.5px;top:342px;font-size:13px;color:#000;line-height:13px;white-space:pre;line-height:15px;">*</div><div class="t" style="left:53.0px;top:341px;font-size:13.2px;color:#0000e0;line-height:13.2px;white-space:pre;line-height:15px;letter-spacing:-0.35px;">12.10.09</div><div class="t" style="left:107.0px;top:341px;font-size:13.2px;color:#0000e0;line-height:13.2px;white-space:pre;line-height:15px;letter-spacing:-0.35px;">*12:58:23</div><div class="t" style="left:192.5px;top:341px;font-size:13.2px;color:#0000e0;line-height:13.2px;white-space:pre;line-height:15px;">VKG-PSEJ</div><div class="t" style="left:306.5px;top:341px;font-size:13.2px;color:#0000e0;line-height:13.2px;white-space:pre;line-height:15px;">0</div><div class="t" style="left:382.0px;top:341px;font-size:13.2px;color:#0000e0;line-height:13.2px;white-space:pre;line-height:15px;">Ületemperatuur</div><div class="t" style="left:549.5px;top:341px;font-size:13.2px;color:#0000e0;line-height:13.2px;white-space:pre;line-height:15px;">ON(isAct)</div><div class="t" style="left:752.5px;top:341px;font-size:13.2px;color:#0000e0;line-height:13.2px;white-space:pre;line-height:15px;letter-spacing:-0.35px;">12.10.09</div><div style="left:797.5px;top:340px;width:60px;height:17px;background:#ececec;"></div><div class="t" style="left:798.5px;top:341px;font-size:13.2px;color:#0000e0;line-height:13.2px;white-space:pre;line-height:15px;letter-spacing:-0.35px;">12:58:23</div><div style="left:13.5px;top:358px;width:844px;height:17px;background:#f0ffff;"></div><div style="left:13.5px;top:375px;width:844px;height:1px;background:#c4c4c4;"></div><div style="left:13.5px;top:358px;width:34px;height:17px;background:#ff0000;"></div><div class="t" style="left:14.5px;top:359px;font-size:13px;color:#000;line-height:13px;white-space:pre;line-height:15px;letter-spacing:-0.1px;">******</div><div class="t" style="left:53.0px;top:359px;font-size:13.2px;color:#000;line-height:13.2px;white-space:pre;line-height:15px;letter-spacing:-0.35px;">12.10.09</div><div class="t" style="left:112.5px;top:359px;font-size:13.2px;color:#000;line-height:13.2px;white-space:pre;line-height:15px;letter-spacing:-0.35px;">12:50:44.086</div><div class="t" style="left:382.0px;top:359px;font-size:13.2px;color:#000;line-height:13.2px;white-space:pre;line-height:15px;">m (m)</div><div class="t" style="left:549.5px;top:359px;font-size:13.2px;color:#000;line-height:13.2px;white-space:pre;line-height:15px;">Log LOST</div><div class="t" style="left:752.5px;top:359px;font-size:13.2px;color:#000;line-height:13.2px;white-space:pre;line-height:15px;letter-spacing:-0.35px;">12.10.09</div><div style="left:797.5px;top:358px;width:60px;height:17px;background:#f0ffff;"></div><div class="t" style="left:798.5px;top:359px;font-size:13.2px;color:#000;line-height:13.2px;white-space:pre;line-height:15px;letter-spacing:-0.35px;">12:50:44</div><div style="left:13.5px;top:376px;width:844px;height:17px;background:#f0ffff;"></div><div style="left:13.5px;top:393px;width:844px;height:1px;background:#c4c4c4;"></div><div style="left:13.5px;top:376px;width:34px;height:17px;background:#ff0000;"></div><div class="t" style="left:14.5px;top:377px;font-size:13px;color:#000;line-height:13px;white-space:pre;line-height:15px;letter-spacing:-0.1px;">******</div><div class="t" style="left:53.0px;top:377px;font-size:13.2px;color:#000;line-height:13.2px;white-space:pre;line-height:15px;letter-spacing:-0.35px;">12.10.09</div><div class="t" style="left:112.5px;top:377px;font-size:13.2px;color:#000;line-height:13.2px;white-space:pre;line-height:15px;letter-spacing:-0.35px;">12:50:44.071</div><div class="t" style="left:382.0px;top:377px;font-size:13.2px;color:#000;line-height:13.2px;white-space:pre;line-height:15px;">m (m)</div><div class="t" style="left:549.5px;top:377px;font-size:13.2px;color:#000;line-height:13.2px;white-space:pre;line-height:15px;">Log OUT</div><div class="t" style="left:752.5px;top:377px;font-size:13.2px;color:#000;line-height:13.2px;white-space:pre;line-height:15px;letter-spacing:-0.35px;">12.10.09</div><div style="left:797.5px;top:376px;width:60px;height:17px;background:#f0ffff;"></div><div class="t" style="left:798.5px;top:377px;font-size:13.2px;color:#000;line-height:13.2px;white-space:pre;line-height:15px;letter-spacing:-0.35px;">12:50:44</div><div style="left:13.5px;top:394px;width:844px;height:17px;background:#ffffff;"></div><div style="left:13.5px;top:411px;width:844px;height:1px;background:#c4c4c4;"></div><div style="left:13.5px;top:394px;width:34px;height:17px;background:#ffff00;"></div><div class="t" style="left:14.5px;top:395px;font-size:13px;color:#000;line-height:13px;white-space:pre;line-height:15px;letter-spacing:-0.1px;">****</div><div class="t" style="left:53.0px;top:395px;font-size:13.2px;color:#000;line-height:13.2px;white-space:pre;line-height:15px;letter-spacing:-0.35px;">12.10.09</div><div class="t" style="left:112.5px;top:395px;font-size:13.2px;color:#000;line-height:13.2px;white-space:pre;line-height:15px;letter-spacing:-0.35px;">12:50:32.399</div><div class="t" style="left:192.5px;top:395px;font-size:13.2px;color:#000;line-height:13.2px;white-space:pre;line-height:15px;">common</div><div class="t" style="left:306.5px;top:395px;font-size:13.2px;color:#000;line-height:13.2px;white-space:pre;line-height:15px;">0</div><div class="t" style="left:382.0px;top:395px;font-size:13.2px;color:#000;line-height:13.2px;white-space:pre;line-height:15px;">Upper Alarm</div><div class="t" style="left:549.5px;top:395px;font-size:13.2px;color:#000;line-height:13.2px;white-space:pre;line-height:15px;">!!!</div><div style="left:13.5px;top:412px;width:844px;height:17px;background:#ffffff;"></div><div style="left:13.5px;top:429px;width:844px;height:1px;background:#c4c4c4;"></div><div style="left:13.5px;top:412px;width:34px;height:17px;background:#ffff00;"></div><div class="t" style="left:14.5px;top:413px;font-size:13px;color:#000;line-height:13px;white-space:pre;line-height:15px;letter-spacing:-0.1px;">****</div><div class="t" style="left:53.0px;top:413px;font-size:13.2px;color:#000;line-height:13.2px;white-space:pre;line-height:15px;letter-spacing:-0.35px;">12.10.09</div><div class="t" style="left:112.5px;top:413px;font-size:13.2px;color:#000;line-height:13.2px;white-space:pre;line-height:15px;letter-spacing:-0.35px;">12:50:31.180</div><div class="t" style="left:192.5px;top:413px;font-size:13.2px;color:#000;line-height:13.2px;white-space:pre;line-height:15px;">common</div><div class="t" style="left:306.5px;top:413px;font-size:13.2px;color:#000;line-height:13.2px;white-space:pre;line-height:15px;">0</div><div class="t" style="left:382.0px;top:413px;font-size:13.2px;color:#000;line-height:13.2px;white-space:pre;line-height:15px;">Upper Alarm</div><div class="t" style="left:549.5px;top:413px;font-size:13.2px;color:#000;line-height:13.2px;white-space:pre;line-height:15px;">-</div><div style="left:13.5px;top:430px;width:844px;height:17px;background:#ececec;"></div><div style="left:13.5px;top:447px;width:844px;height:1px;background:#c4c4c4;"></div><div style="left:13.5px;top:430px;width:34px;height:17px;background:#ffff00;"></div><div class="t" style="left:14.5px;top:431px;font-size:13px;color:#000;line-height:13px;white-space:pre;line-height:15px;letter-spacing:-0.1px;">****</div><div class="t" style="left:53.0px;top:431px;font-size:13.2px;color:#000;line-height:13.2px;white-space:pre;line-height:15px;letter-spacing:-0.35px;">12.10.09</div><div class="t" style="left:112.5px;top:431px;font-size:13.2px;color:#000;line-height:13.2px;white-space:pre;line-height:15px;letter-spacing:-0.35px;">12:50:16.915</div><div class="t" style="left:192.5px;top:431px;font-size:13.2px;color:#000;line-height:13.2px;white-space:pre;line-height:15px;">common</div><div class="t" style="left:306.5px;top:431px;font-size:13.2px;color:#000;line-height:13.2px;white-space:pre;line-height:15px;">0</div><div class="t" style="left:382.0px;top:431px;font-size:13.2px;color:#000;line-height:13.2px;white-space:pre;line-height:15px;">Upper Alarm</div><div class="t" style="left:549.5px;top:431px;font-size:13.2px;color:#000;line-height:13.2px;white-space:pre;line-height:15px;">!!!</div><div class="t" style="left:752.5px;top:431px;font-size:13.2px;color:#000;line-height:13.2px;white-space:pre;line-height:15px;letter-spacing:-0.35px;">12.10.09</div><div style="left:797.5px;top:430px;width:60px;height:17px;background:#ececec;"></div><div class="t" style="left:798.5px;top:431px;font-size:13.2px;color:#000;line-height:13.2px;white-space:pre;line-height:15px;letter-spacing:-0.35px;">12:50:23</div><div style="left:857.5px;top:160px;width:21.5px;height:287px;background:#e9e7e2;"></div><div style="left:858.5px;top:160px;width:19.5px;height:18.5px;background:#d4d0c8;box-shadow:inset -1px -1px 0 #404040,inset 1px 1px 0 #fff,inset -2px -2px 0 #808080;"></div><div style="left:858.5px;top:427px;width:19.5px;height:18.5px;background:#d4d0c8;box-shadow:inset -1px -1px 0 #404040,inset 1px 1px 0 #fff,inset -2px -2px 0 #808080;"></div><svg class="abs" style="left:863.5px;top:167px" width="9" height="5" viewBox="0 0 9 5"><path d="M0,5 L9,5 L4.5,0 Z" fill="#000"/></svg><svg class="abs" style="left:863.5px;top:434px" width="9" height="5" viewBox="0 0 9 5"><path d="M0,0 L9,0 L4.5,5 Z" fill="#000"/></svg><div style="left:858.5px;top:182.5px;width:19.5px;height:50px;background:#d4d0c8;box-shadow:inset -1px -1px 0 #404040,inset 1px 1px 0 #fff,inset -2px -2px 0 #808080;"></div></div>
</div></body></html>
